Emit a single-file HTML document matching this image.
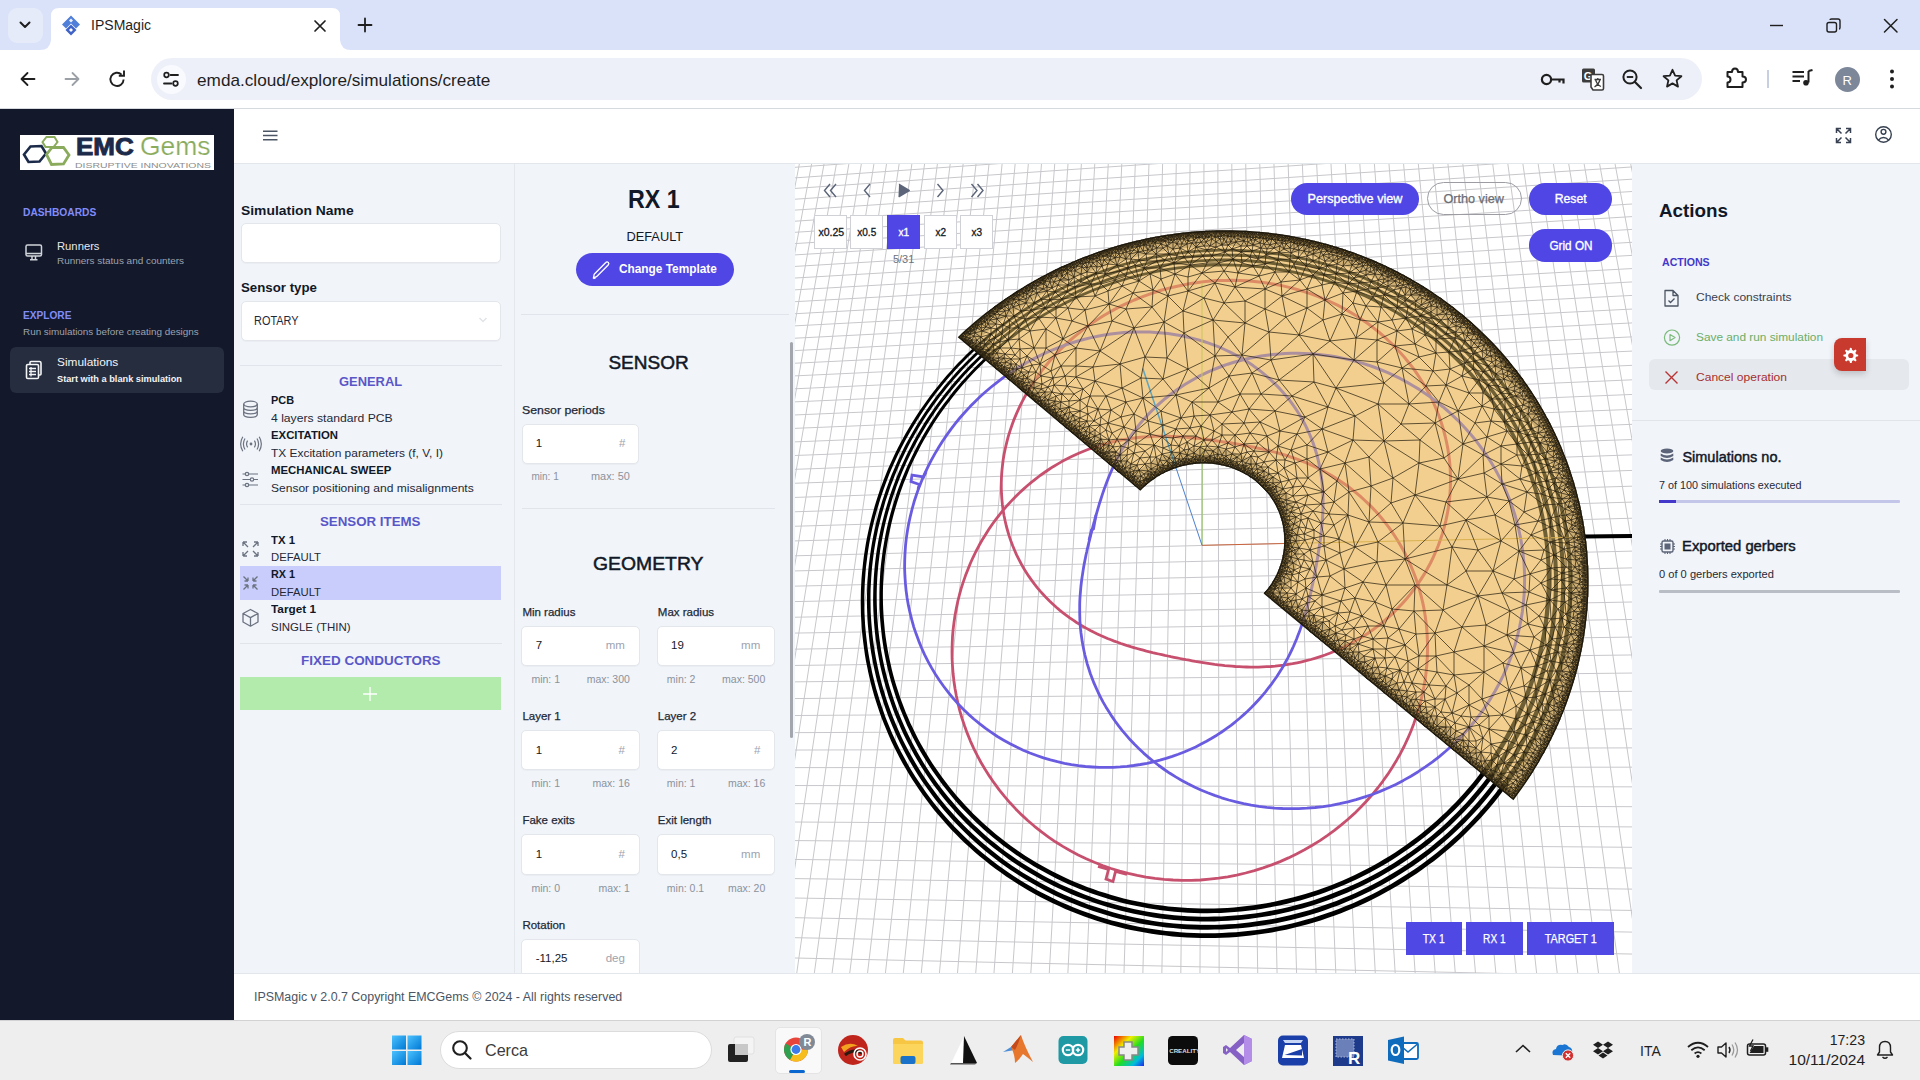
<!DOCTYPE html><html><head><meta charset="utf-8"><style>html,body{margin:0;padding:0;width:1920px;height:1080px;overflow:hidden;background:#fff;}body{position:relative;font-family:"Liberation Sans",sans-serif;}.t{position:absolute;white-space:nowrap;}.r{position:absolute;}</style></head><body><div class="r" style="left:0px;top:0px;width:1920px;height:50px;background:#d9e2f9;"></div><div class="r" style="left:8px;top:8px;width:35px;height:35px;background:#e6ebfa;border-radius:9px;"></div><svg class="r" style="left:15px;top:15px;" width="20" height="20" viewBox="0 0 20 20"><path d="M5.5 7.5 L10 12 L14.5 7.5" fill="none" stroke="#1f1f1f" stroke-width="2" stroke-linecap="round" stroke-linejoin="round"/></svg><svg class="r" style="left:40px;top:7px;" width="312" height="44" viewBox="0 0 312 44"><path d="M0 43 Q10 43 11 33 L11 9 Q11 1 19 1 L292 1 Q300 1 300 9 L300 33 Q301 43 311 43 L311 44 L0 44 Z" fill="#ffffff"/></svg><svg class="r" style="left:60px;top:15px;" width="22" height="21" viewBox="0 0 22 21"><path d="M11 0.5 L20 9.5 L16 13.5 L11 8.5 L6 13.5 L2 9.5 Z" fill="#4f7fd9"/><path d="M11 9.5 L16.5 15 L11 20.5 L5.5 15 Z" fill="#3f63c6"/><path d="M11 13 L13 15 L11 17 L9 15 Z" fill="#fff"/><path d="M11 3.5 L13 5.5 L11 7.5 L9 5.5Z" fill="#fff" opacity="0.9"/></svg><div class="t" style="left:91.1px;top:18.3px;font-size:14px;line-height:14px;color:#1f1f1f;">IPSMagic</div><svg class="r" style="left:310px;top:16px;" width="20" height="20" viewBox="0 0 20 20"><path d="M5 5 L15 15 M15 5 L5 15" stroke="#1f1f1f" stroke-width="1.7" stroke-linecap="round"/></svg><svg class="r" style="left:355px;top:15px;" width="20" height="20" viewBox="0 0 20 20"><path d="M10 3.5 V16.5 M3.5 10 H16.5" stroke="#1f1f1f" stroke-width="1.8" stroke-linecap="round"/></svg><svg class="r" style="left:1766px;top:15px;" width="22" height="22" viewBox="0 0 22 22"><path d="M4 10.5 H17" stroke="#1f1f1f" stroke-width="1.4"/></svg><svg class="r" style="left:1822px;top:14px;" width="24" height="24" viewBox="0 0 24 24"><rect x="5" y="8.5" width="9.5" height="9.5" rx="2" fill="none" stroke="#1f1f1f" stroke-width="1.4"/><path d="M8 6 Q8 5 9.5 5 H16 Q18 5 18 7 V13.5 Q18 15 17 15" fill="none" stroke="#1f1f1f" stroke-width="1.4"/></svg><svg class="r" style="left:1880px;top:15px;" width="22" height="22" viewBox="0 0 22 22"><path d="M4.5 4.5 L17 17 M17 4.5 L4.5 17" stroke="#1f1f1f" stroke-width="1.5" stroke-linecap="round"/></svg><div class="r" style="left:0px;top:50px;width:1920px;height:58px;background:#ffffff;"></div><div class="r" style="left:0px;top:108px;width:1920px;height:1px;background:#d6d9de;"></div><svg class="r" style="left:18px;top:69px;" width="20" height="20" viewBox="0 0 20 20"><path d="M16.5 10 H4 M9.5 4 L3.5 10 L9.5 16" fill="none" stroke="#1f1f1f" stroke-width="1.8" stroke-linecap="round" stroke-linejoin="round"/></svg><svg class="r" style="left:62px;top:69px;" width="20" height="20" viewBox="0 0 20 20"><path d="M3.5 10 H16 M10.5 4 L16.5 10 L10.5 16" fill="none" stroke="#9aa0a6" stroke-width="1.8" stroke-linecap="round" stroke-linejoin="round"/></svg><svg class="r" style="left:107px;top:69px;" width="21" height="21" viewBox="0 0 21 21"><path d="M16.6 10.5 A6.6 6.6 0 1 1 14.6 5.6" fill="none" stroke="#1f1f1f" stroke-width="1.9"/><path d="M11.8 6.8 H17 V1.6" fill="none" stroke="#1f1f1f" stroke-width="1.9"/></svg><div class="r" style="left:151px;top:58px;width:1551px;height:41.5px;background:#eef0f9;border-radius:21px;"></div><div class="r" style="left:157px;top:65px;width:29px;height:29px;border-radius:50%;background:#f9fafe;"></div><svg class="r" style="left:160px;top:68px;" width="23" height="23" viewBox="0 0 23 23"><circle cx="6.5" cy="7" r="2.3" fill="none" stroke="#1f1f1f" stroke-width="1.7"/><path d="M10.5 7 H18" stroke="#1f1f1f" stroke-width="1.8" stroke-linecap="round"/><circle cx="15.5" cy="15.5" r="2.3" fill="none" stroke="#1f1f1f" stroke-width="1.7"/><path d="M4 15.5 H11.5" stroke="#1f1f1f" stroke-width="1.8" stroke-linecap="round"/></svg><div class="t" style="left:196.7px;top:71.6px;font-size:17px;line-height:17px;color:#1f1f1f;transform:scaleX(1.0110);transform-origin:left;">emda.cloud/explore/simulations/create</div><svg class="r" style="left:1539px;top:68px;" width="28" height="22" viewBox="0 0 28 22"><circle cx="7.5" cy="11.5" r="4.6" fill="none" stroke="#1f1f1f" stroke-width="2.2"/><path d="M12 11.5 H24.5 V15.5 M20.5 11.5 V14.5" fill="none" stroke="#1f1f1f" stroke-width="2.2"/></svg><svg class="r" style="left:1580px;top:66px;" width="26" height="26" viewBox="0 0 26 26"><rect x="2" y="2.5" width="13" height="14" rx="1.5" fill="#3c3c3c"/><text x="3.8" y="14" font-family="Liberation Sans" font-weight="bold" font-size="11" fill="#fff">G</text><path d="M11 8.5 H22 Q23.5 8.5 23.5 10 V22.5 Q23.5 24 22 24 H13 L11 21 Z" fill="#fff" stroke="#3c3c3c" stroke-width="1.6"/><path d="M14.5 13.5 H21 M17.8 12 V13.5 M15.5 13.5 Q17 19 21 20.5 M20 13.5 Q19 18 14.5 21" fill="none" stroke="#3c3c3c" stroke-width="1.3"/></svg><svg class="r" style="left:1620px;top:67px;" width="26" height="26" viewBox="0 0 26 26"><circle cx="10" cy="10" r="6.6" fill="none" stroke="#1f1f1f" stroke-width="2"/><path d="M6.8 10 H13.2" stroke="#1f1f1f" stroke-width="1.9"/><path d="M15 15 L21 21" stroke="#1f1f1f" stroke-width="2.2" stroke-linecap="round"/></svg><svg class="r" style="left:1661px;top:67px;" width="24" height="24" viewBox="0 0 24 24"><path d="M11.5 2.8 L14.1 8.6 L20.4 9.2 L15.6 13.4 L17 19.6 L11.5 16.4 L6 19.6 L7.4 13.4 L2.6 9.2 L8.9 8.6 Z" fill="none" stroke="#1f1f1f" stroke-width="1.8" stroke-linejoin="round"/></svg><svg class="r" style="left:1723px;top:66px;" width="27" height="24" viewBox="0 0 27 24"><path d="M4.5 6 H9 Q9 2.5 12 2.5 Q15 2.5 15 6 H19.5 V10.5 Q23 10.5 23 13.5 Q23 16.5 19.5 16.5 V21 H4.5 V16.5 Q7.5 16.5 7.5 13.5 Q7.5 10.5 4.5 10.5 Z" fill="none" stroke="#1f1f1f" stroke-width="2" stroke-linejoin="round"/></svg><div class="r" style="left:1767px;top:70px;width:2px;height:18px;background:#c7d0e0;"></div><svg class="r" style="left:1790px;top:67px;" width="26" height="22" viewBox="0 0 26 22"><path d="M2.5 5 H14 M2.5 9.5 H14 M2.5 14 H10" stroke="#1f1f1f" stroke-width="2"/><path d="M18.5 4 V15.5" stroke="#1f1f1f" stroke-width="2"/><circle cx="16" cy="15.8" r="2.8" fill="#1f1f1f"/><path d="M18.5 4 L22.5 3" stroke="#1f1f1f" stroke-width="2"/></svg><div class="r" style="left:1835px;top:67px;width:25px;height:25px;border-radius:50%;background:#7c8799;"></div><div class="t" style="left:1842.6px;top:74.0px;font-size:13px;line-height:13px;color:#ffffff;">R</div><svg class="r" style="left:1882px;top:67px;" width="20" height="24" viewBox="0 0 20 24"><circle cx="10" cy="4.5" r="2" fill="#1f1f1f"/><circle cx="10" cy="12" r="2" fill="#1f1f1f"/><circle cx="10" cy="19.5" r="2" fill="#1f1f1f"/></svg><div class="r" style="left:0px;top:109px;width:234px;height:911px;background:#13182a;"></div><div class="r" style="left:20px;top:134.5px;width:194px;height:35.5px;background:#ffffff;"></div><svg class="r" style="left:21px;top:135px;" width="54" height="34" viewBox="0 0 54 34"><path d="M3 19.5 L9.5 11.5 L20.5 11 L25 18.5 L18.5 26.5 L7.5 27 Z" fill="none" stroke="#1c2a4a" stroke-width="2.6"/><path d="M21.5 7 L25.5 2 L33.5 2 L36.5 7 L32.5 12 L24.5 12 Z" fill="none" stroke="#8aaa5c" stroke-width="2"/><path d="M25.5 19.5 L31 12.5 L42.5 12.5 L48 20 L42.5 29 L30.5 29.5 Z" fill="none" stroke="#8aaa5c" stroke-width="2.8"/></svg><div class="t" style="left:75.5px;top:135.2px;font-size:24px;line-height:24px;color:#1c2a4a;font-weight:bold;transform:scaleX(1.0819);transform-origin:left;-webkit-text-stroke:0.9px #1c2a4a;">EMC</div><div class="t" style="left:139.9px;top:134.3px;font-size:25px;line-height:25px;color:#8aab5c;transform:scaleX(1.0574);transform-origin:left;-webkit-text-stroke:0.2px #ffffff;">Gems</div><div class="t" style="left:75.0px;top:161.7px;font-size:7px;line-height:7px;color:#8c8c8c;transform:scaleX(1.4922);transform-origin:left;">DISRUPTIVE INNOVATIONS</div><div class="t" style="left:23.3px;top:207.0px;font-size:10.5px;line-height:10.5px;color:#818cf8;font-weight:bold;transform:scaleX(0.9740);transform-origin:left;">DASHBOARDS</div><svg class="r" style="left:24px;top:243px;" width="20" height="19" viewBox="0 0 20 19"><rect x="2" y="2" width="15.5" height="11" rx="1.5" fill="none" stroke="#cfd3da" stroke-width="1.5"/><path d="M2 10.5 H17.5 M8 13 V16 M11.5 13 V16 M6 16.8 H13.5" stroke="#cfd3da" stroke-width="1.5"/></svg><div class="t" style="left:56.9px;top:240.7px;font-size:11px;line-height:11px;color:#e5e7eb;transform:scaleX(1.0221);transform-origin:left;">Runners</div><div class="t" style="left:56.9px;top:256.3px;font-size:9.5px;line-height:9.5px;color:#9ca3af;transform:scaleX(1.0464);transform-origin:left;">Runners status and counters</div><div class="t" style="left:23.3px;top:310.4px;font-size:10.5px;line-height:10.5px;color:#818cf8;font-weight:bold;transform:scaleX(0.9645);transform-origin:left;">EXPLORE</div><div class="t" style="left:23.3px;top:327.4px;font-size:9.5px;line-height:9.5px;color:#9ca3af;transform:scaleX(1.0397);transform-origin:left;">Run simulations before creating designs</div><div class="r" style="left:10.4px;top:346.8px;width:213.5px;height:46.5px;background:#262d3e;border-radius:6px;"></div><svg class="r" style="left:24px;top:359px;" width="20" height="22" viewBox="0 0 20 22"><path d="M6 5.5 V3.5 Q6 2.5 7 2.5 H15.5 Q17 2.5 17 4 V15 Q17 16 16 16 H14.5" fill="none" stroke="#f3f4f6" stroke-width="1.6"/><rect x="2.5" y="5.5" width="12" height="14" rx="1.3" fill="none" stroke="#f3f4f6" stroke-width="1.6"/><path d="M5 9.5 H12 M5 12.5 H12 M5 15.5 H12 M7 8 V17.5" stroke="#f3f4f6" stroke-width="1.3"/></svg><div class="t" style="left:56.9px;top:357.4px;font-size:11px;line-height:11px;color:#f3f4f6;transform:scaleX(1.0781);transform-origin:left;">Simulations</div><div class="t" style="left:56.9px;top:374.0px;font-size:9.5px;line-height:9.5px;color:#f3f4f6;font-weight:bold;transform:scaleX(0.9697);transform-origin:left;">Start with a blank simulation</div><div class="r" style="left:234px;top:109px;width:1686px;height:54px;background:#ffffff;"></div><div class="r" style="left:234px;top:163px;width:1686px;height:1px;background:#e3e6ea;"></div><svg class="r" style="left:260px;top:127px;" width="20" height="16" viewBox="0 0 20 16"><path d="M3 4.3 H17.5 M3 8.6 H17.5 M3 12.8 H17.5" stroke="#4b5563" stroke-width="1.5"/></svg><svg class="r" style="left:1833px;top:125px;" width="21" height="21" viewBox="0 0 21 21"><path d="M3.5 8 V3.5 H8 M3.5 3.5 L8.5 8.5 M17.5 8 V3.5 H13 M17.5 3.5 L12.5 8.5 M3.5 13 V17.5 H8 M3.5 17.5 L8.5 12.5 M17.5 13 V17.5 H13 M17.5 17.5 L12.5 12.5" fill="none" stroke="#374151" stroke-width="1.5"/></svg><svg class="r" style="left:1873px;top:124px;" width="21" height="21" viewBox="0 0 21 21"><circle cx="10.5" cy="10.5" r="7.8" fill="none" stroke="#374151" stroke-width="1.4"/><circle cx="10.5" cy="7.8" r="2.4" fill="none" stroke="#374151" stroke-width="1.4"/><path d="M5.2 16.2 Q10.5 11 15.8 16.2" fill="none" stroke="#374151" stroke-width="1.4"/></svg><div class="r" style="left:234px;top:164px;width:280px;height:810px;background:#f1f4f9;"></div><div class="r" style="left:514px;top:164px;width:1px;height:810px;background:#e4e7ec;"></div><div class="t" style="left:241.0px;top:203.7px;font-size:13px;line-height:13px;color:#111827;font-weight:bold;transform:scaleX(1.0676);transform-origin:left;">Simulation Name</div><div class="r" style="left:240.6px;top:222.7px;width:260.3px;height:40.6px;background:#ffffff;border:1px solid #e3e6eb;border-radius:5px;box-sizing:border-box;box-shadow:0 1px 1px rgba(0,0,0,0.03);"></div><div class="t" style="left:241.0px;top:281.4px;font-size:13px;line-height:13px;color:#111827;font-weight:bold;transform:scaleX(1.0213);transform-origin:left;">Sensor type</div><div class="r" style="left:240.6px;top:300.7px;width:260.3px;height:40.1px;background:#ffffff;border:1px solid #e3e6eb;border-radius:5px;box-sizing:border-box;box-shadow:0 1px 1px rgba(0,0,0,0.03);"></div><div class="t" style="left:254.4px;top:314.6px;font-size:12px;line-height:12px;color:#1f2937;transform:scaleX(0.9101);transform-origin:left;">ROTARY</div><svg class="r" style="left:477px;top:315px;" width="12" height="10" viewBox="0 0 12 10"><path d="M2.5 3 L6 6.5 L9.5 3" fill="none" stroke="#e2e4e8" stroke-width="1.5"/></svg><div class="r" style="left:240px;top:364.5px;width:261.5px;height:1px;background:#e1e5eb;"></div><div class="t" style="left:339.9px;top:376.2px;font-size:12.5px;line-height:12.5px;color:#5957c8;font-weight:bold;transform:scaleX(1.0308);transform-origin:center;">GENERAL</div><svg class="r" style="left:241px;top:399px;" width="20" height="21" viewBox="0 0 20 21"><ellipse cx="9.5" cy="5" rx="6.8" ry="2.8" fill="none" stroke="#6b7280" stroke-width="1.3"/><path d="M2.7 5 V15.5 Q2.7 18.3 9.5 18.3 Q16.3 18.3 16.3 15.5 V5 M2.7 8.6 Q2.7 11.4 9.5 11.4 Q16.3 11.4 16.3 8.6 M2.7 12 Q2.7 14.8 9.5 14.8 Q16.3 14.8 16.3 12" fill="none" stroke="#6b7280" stroke-width="1.3"/></svg><div class="t" style="left:270.5px;top:395.3px;font-size:11px;line-height:11px;color:#111827;font-weight:bold;transform:scaleX(0.9903);transform-origin:left;">PCB</div><div class="t" style="left:270.5px;top:412.7px;font-size:11px;line-height:11px;color:#1f2937;transform:scaleX(1.1058);transform-origin:left;">4 layers standard PCB</div><svg class="r" style="left:240px;top:434px;" width="22" height="20" viewBox="0 0 22 20"><circle cx="11" cy="10" r="1.4" fill="#6b7280"/><path d="M7.6 6.6 Q5.5 10 7.6 13.4 M14.4 6.6 Q16.5 10 14.4 13.4 M5 4.5 Q1.8 10 5 15.5 M17 4.5 Q20.2 10 17 15.5 M2.8 2.8 Q-1.5 10 2.8 17.2 M19.2 2.8 Q23.5 10 19.2 17.2" fill="none" stroke="#6b7280" stroke-width="1.2"/></svg><div class="t" style="left:270.5px;top:430.3px;font-size:11px;line-height:11px;color:#111827;font-weight:bold;transform:scaleX(1.0311);transform-origin:left;">EXCITATION</div><div class="t" style="left:270.5px;top:447.7px;font-size:11px;line-height:11px;color:#1f2937;transform:scaleX(1.0849);transform-origin:left;">TX Excitation parameters (f, V, I)</div><svg class="r" style="left:240px;top:470px;" width="21" height="20" viewBox="0 0 21 20"><path d="M2.5 4 H18 M2.5 9.5 H18 M2.5 15 H18" stroke="#6b7280" stroke-width="1.2"/><circle cx="7" cy="4" r="1.7" fill="#f1f4f9" stroke="#6b7280" stroke-width="1.2"/><circle cx="12" cy="9.5" r="1.7" fill="#f1f4f9" stroke="#6b7280" stroke-width="1.2"/><circle cx="7" cy="15" r="1.7" fill="#f1f4f9" stroke="#6b7280" stroke-width="1.2"/></svg><div class="t" style="left:270.5px;top:465.3px;font-size:11px;line-height:11px;color:#111827;font-weight:bold;transform:scaleX(1.0324);transform-origin:left;">MECHANICAL SWEEP</div><div class="t" style="left:270.5px;top:482.7px;font-size:11px;line-height:11px;color:#1f2937;transform:scaleX(1.0940);transform-origin:left;">Sensor positioning and misalignments</div><div class="r" style="left:240px;top:503.5px;width:261.5px;height:1px;background:#e1e5eb;"></div><div class="t" style="left:323.3px;top:515.7px;font-size:12.5px;line-height:12.5px;color:#5957c8;font-weight:bold;transform:scaleX(1.0639);transform-origin:center;">SENSOR ITEMS</div><svg class="r" style="left:240px;top:539px;" width="21" height="20" viewBox="0 0 21 20"><path d="M3 3 L8 8 M3 3 V7 M3 3 H7 M18 3 L13 8 M18 3 V7 M18 3 H14 M3 17 L8 12 M3 17 V13 M3 17 H7 M18 17 L13 12 M18 17 V13 M18 17 H14" fill="none" stroke="#6b7280" stroke-width="1.3"/></svg><div class="t" style="left:270.5px;top:534.7px;font-size:11px;line-height:11px;color:#111827;font-weight:bold;transform:scaleX(1.0331);transform-origin:left;">TX 1</div><div class="t" style="left:270.5px;top:551.9px;font-size:11px;line-height:11px;color:#1f2937;transform:scaleX(1.0268);transform-origin:left;">DEFAULT</div><div class="r" style="left:240.25px;top:566.25px;width:260.5px;height:34px;background:#c8cdfb;"></div><svg class="r" style="left:240px;top:573px;" width="21" height="20" viewBox="0 0 21 20"><path d="M3.5 3.5 L8 8 M8 8 V4.5 M8 8 H4.5 M17.5 3.5 L13 8 M13 8 V4.5 M13 8 H16.5 M3.5 16.5 L8 12 M8 12 V15.5 M8 12 H4.5 M17.5 16.5 L13 12 M13 12 V15.5 M13 12 H16.5" fill="none" stroke="#6b7280" stroke-width="1.3"/></svg><div class="t" style="left:270.5px;top:569.0px;font-size:11px;line-height:11px;color:#111827;font-weight:bold;transform:scaleX(0.9814);transform-origin:left;">RX 1</div><div class="t" style="left:270.5px;top:586.7px;font-size:11px;line-height:11px;color:#1f2937;transform:scaleX(1.0268);transform-origin:left;">DEFAULT</div><svg class="r" style="left:240px;top:607px;" width="21" height="22" viewBox="0 0 21 22"><path d="M10.5 2.5 L18 6.5 V15 L10.5 19.2 L3 15 V6.5 Z M3 6.5 L10.5 10.6 L18 6.5 M10.5 10.6 V19.2" fill="none" stroke="#6b7280" stroke-width="1.3" stroke-linejoin="round"/></svg><div class="t" style="left:270.5px;top:604.4px;font-size:11px;line-height:11px;color:#111827;font-weight:bold;transform:scaleX(1.0720);transform-origin:left;">Target 1</div><div class="t" style="left:270.5px;top:621.5px;font-size:11px;line-height:11px;color:#1f2937;transform:scaleX(1.0406);transform-origin:left;">SINGLE (THIN)</div><div class="r" style="left:240px;top:643px;width:261.5px;height:1px;background:#e1e5eb;"></div><div class="t" style="left:305.7px;top:654.8px;font-size:12.5px;line-height:12.5px;color:#5957c8;font-weight:bold;transform:scaleX(1.0760);transform-origin:center;">FIXED CONDUCTORS</div><div class="r" style="left:240.25px;top:677.3px;width:260.5px;height:32.3px;background:#b3ebac;"></div><svg class="r" style="left:362px;top:686px;" width="16" height="16" viewBox="0 0 16 16"><path d="M8 1 V15 M1 8 H15" stroke="#ffffff" stroke-width="1.3"/></svg><div class="r" style="left:515px;top:164px;width:280px;height:810px;background:#f1f4f9;"></div><div class="t" style="left:625.3px;top:186.3px;font-size:26px;line-height:26px;color:#111827;font-weight:bold;transform:scaleX(0.8944);transform-origin:center;">RX 1</div><div class="t" style="left:625.6px;top:229.6px;font-size:13px;line-height:13px;color:#111827;transform:scaleX(0.9852);transform-origin:center;">DEFAULT</div><div class="r" style="left:576.1px;top:252.8px;width:157.8px;height:32.8px;background:#4f46e5;border-radius:17px;"></div><svg class="r" style="left:590px;top:258px;" width="24" height="24" viewBox="0 0 24 24"><path d="M5 19 L4 20.5 L5.6 19.8 M6.5 18.7 L18.2 7 Q19.5 5.7 18.3 4.4 Q17 3.2 15.8 4.5 L4.2 16.2 L3.4 20.1 L6.5 18.7 Z" fill="none" stroke="#ffffff" stroke-width="1.3" stroke-linejoin="round"/></svg><div class="t" style="left:619.4px;top:262.6px;font-size:12px;line-height:12px;color:#ffffff;font-weight:bold;transform:scaleX(0.9866);transform-origin:left;">Change Template</div><div class="r" style="left:521px;top:313.5px;width:267.6px;height:1px;background:#e1e5eb;"></div><div class="t" style="left:608.4px;top:352.6px;font-size:19px;line-height:19px;color:#111827;-webkit-text-stroke:0.5px #111827;">SENSOR</div><div class="t" style="left:522.0px;top:405.0px;font-size:11.5px;line-height:11.5px;color:#1f2937;transform:scaleX(1.0704);transform-origin:left;-webkit-text-stroke:0.25px #1f2937;">Sensor periods</div><div class="r" style="left:521.5px;top:423.7px;width:117.8px;height:40.5px;background:#ffffff;border:1px solid #e3e6eb;border-radius:5px;box-sizing:border-box;box-shadow:0 1px 1px rgba(0,0,0,0.03);"></div><div class="t" style="left:535.7px;top:438.3px;font-size:11.5px;line-height:11.5px;color:#111827;">1</div><div class="t" style="left:618.9px;top:438.3px;font-size:11.5px;line-height:11.5px;color:#9ca3af;">#</div><div class="t" style="left:531.5px;top:472.3px;font-size:10px;line-height:10px;color:#8b929c;">min: 1</div><div class="t" style="left:591.0px;top:472.3px;font-size:10px;line-height:10px;color:#8b929c;transform:scaleX(1.0907);transform-origin:left;">max: 50</div><div class="r" style="left:521.5px;top:507.5px;width:253.3px;height:1px;background:#e1e5eb;"></div><div class="t" style="left:593.8px;top:554.3px;font-size:19px;line-height:19px;color:#111827;transform:scaleX(1.0195);transform-origin:center;-webkit-text-stroke:0.5px #111827;">GEOMETRY</div><div class="t" style="left:522.4px;top:606.7px;font-size:11.5px;line-height:11.5px;color:#1f2937;-webkit-text-stroke:0.25px #1f2937;">Min radius</div><div class="r" style="left:521.4px;top:625.6px;width:118.5px;height:40.5px;background:#ffffff;border:1px solid #e3e6eb;border-radius:5px;box-sizing:border-box;box-shadow:0 1px 1px rgba(0,0,0,0.03);"></div><div class="t" style="left:535.7px;top:640.3px;font-size:11.5px;line-height:11.5px;color:#111827;">7</div><div class="t" style="left:605.7px;top:640.3px;font-size:11.5px;line-height:11.5px;color:#9ca3af;">mm</div><div class="t" style="left:531.4px;top:674.0px;font-size:10.5px;line-height:10.5px;color:#8b929c;">min: 1</div><div class="t" style="left:586.7px;top:674.0px;font-size:10.5px;line-height:10.5px;color:#8b929c;">max: 300</div><div class="t" style="left:657.8px;top:606.7px;font-size:11.5px;line-height:11.5px;color:#1f2937;-webkit-text-stroke:0.25px #1f2937;">Max radius</div><div class="r" style="left:656.8px;top:625.6px;width:118.5px;height:40.5px;background:#ffffff;border:1px solid #e3e6eb;border-radius:5px;box-sizing:border-box;box-shadow:0 1px 1px rgba(0,0,0,0.03);"></div><div class="t" style="left:671.1px;top:640.3px;font-size:11.5px;line-height:11.5px;color:#111827;">19</div><div class="t" style="left:741.1px;top:640.3px;font-size:11.5px;line-height:11.5px;color:#9ca3af;">mm</div><div class="t" style="left:666.8px;top:674.0px;font-size:10.5px;line-height:10.5px;color:#8b929c;">min: 2</div><div class="t" style="left:722.1px;top:674.0px;font-size:10.5px;line-height:10.5px;color:#8b929c;">max: 500</div><div class="t" style="left:522.4px;top:710.9px;font-size:11.5px;line-height:11.5px;color:#1f2937;-webkit-text-stroke:0.25px #1f2937;">Layer 1</div><div class="r" style="left:521.4px;top:729.8px;width:118.5px;height:40.5px;background:#ffffff;border:1px solid #e3e6eb;border-radius:5px;box-sizing:border-box;box-shadow:0 1px 1px rgba(0,0,0,0.03);"></div><div class="t" style="left:535.7px;top:744.5px;font-size:11.5px;line-height:11.5px;color:#111827;">1</div><div class="t" style="left:618.5px;top:744.5px;font-size:11.5px;line-height:11.5px;color:#9ca3af;">#</div><div class="t" style="left:531.4px;top:778.2px;font-size:10.5px;line-height:10.5px;color:#8b929c;">min: 1</div><div class="t" style="left:592.5px;top:778.2px;font-size:10.5px;line-height:10.5px;color:#8b929c;">max: 16</div><div class="t" style="left:657.8px;top:710.9px;font-size:11.5px;line-height:11.5px;color:#1f2937;-webkit-text-stroke:0.25px #1f2937;">Layer 2</div><div class="r" style="left:656.8px;top:729.8px;width:118.5px;height:40.5px;background:#ffffff;border:1px solid #e3e6eb;border-radius:5px;box-sizing:border-box;box-shadow:0 1px 1px rgba(0,0,0,0.03);"></div><div class="t" style="left:671.1px;top:744.5px;font-size:11.5px;line-height:11.5px;color:#111827;">2</div><div class="t" style="left:753.9px;top:744.5px;font-size:11.5px;line-height:11.5px;color:#9ca3af;">#</div><div class="t" style="left:666.8px;top:778.2px;font-size:10.5px;line-height:10.5px;color:#8b929c;">min: 1</div><div class="t" style="left:727.9px;top:778.2px;font-size:10.5px;line-height:10.5px;color:#8b929c;">max: 16</div><div class="t" style="left:522.4px;top:815.3px;font-size:11.5px;line-height:11.5px;color:#1f2937;-webkit-text-stroke:0.25px #1f2937;">Fake exits</div><div class="r" style="left:521.4px;top:834.2px;width:118.5px;height:40.5px;background:#ffffff;border:1px solid #e3e6eb;border-radius:5px;box-sizing:border-box;box-shadow:0 1px 1px rgba(0,0,0,0.03);"></div><div class="t" style="left:535.7px;top:848.9px;font-size:11.5px;line-height:11.5px;color:#111827;">1</div><div class="t" style="left:618.5px;top:848.9px;font-size:11.5px;line-height:11.5px;color:#9ca3af;">#</div><div class="t" style="left:531.4px;top:882.6px;font-size:10.5px;line-height:10.5px;color:#8b929c;">min: 0</div><div class="t" style="left:598.4px;top:882.6px;font-size:10.5px;line-height:10.5px;color:#8b929c;">max: 1</div><div class="t" style="left:657.8px;top:815.3px;font-size:11.5px;line-height:11.5px;color:#1f2937;-webkit-text-stroke:0.25px #1f2937;">Exit length</div><div class="r" style="left:656.8px;top:834.2px;width:118.5px;height:40.5px;background:#ffffff;border:1px solid #e3e6eb;border-radius:5px;box-sizing:border-box;box-shadow:0 1px 1px rgba(0,0,0,0.03);"></div><div class="t" style="left:671.1px;top:848.9px;font-size:11.5px;line-height:11.5px;color:#111827;">0,5</div><div class="t" style="left:741.1px;top:848.9px;font-size:11.5px;line-height:11.5px;color:#9ca3af;">mm</div><div class="t" style="left:666.8px;top:882.6px;font-size:10.5px;line-height:10.5px;color:#8b929c;">min: 0.1</div><div class="t" style="left:727.9px;top:882.6px;font-size:10.5px;line-height:10.5px;color:#8b929c;">max: 20</div><div class="t" style="left:522.4px;top:919.8px;font-size:11.5px;line-height:11.5px;color:#1f2937;-webkit-text-stroke:0.25px #1f2937;">Rotation</div><div class="r" style="left:521.4px;top:938.7px;width:118.5px;height:40.5px;background:#ffffff;border:1px solid #e3e6eb;border-radius:5px;box-sizing:border-box;box-shadow:0 1px 1px rgba(0,0,0,0.03);"></div><div class="t" style="left:535.7px;top:953.4px;font-size:11.5px;line-height:11.5px;color:#111827;">-11,25</div><div class="t" style="left:605.7px;top:953.4px;font-size:11.5px;line-height:11.5px;color:#9ca3af;">deg</div><div class="t" style="left:531.4px;top:987.1px;font-size:10.5px;line-height:10.5px;color:#8b929c;"></div><div class="t" style="left:629.9px;top:987.1px;font-size:10.5px;line-height:10.5px;color:#8b929c;"></div><div class="r" style="left:790.3px;top:342px;width:3.2px;height:396px;background:#a3a7ad;border-radius:2px;"></div><div class="r" style="left:795px;top:164px;width:837px;height:809px;background:#ffffff;"></div><svg class="r" style="left:795px;top:164px;overflow:hidden;" width="837" height="809" viewBox="0 0 837 809"><path d="M-16.8 -16.3L-191.7 830.3M-4.5 -17.2L-174.8 830.8M7.9 -18.1L-157.9 831.2M20.2 -19L-140.8 831.7M32.7 -19.9L-123.7 832.2M45.1 -20.8L-106.5 832.6M57.6 -21.7L-89.3 833.1M70.1 -22.7L-72 833.5M82.7 -23.6L-54.6 834M95.3 -24.5L-37.1 834.5M107.9 -25.5L-19.6 834.9M120.6 -26.4L-2 835.4M133.3 -27.3L15.7 835.9M146.1 -28.3L33.5 836.4M158.8 -29.2L51.3 836.8M171.7 -30.1L69.2 837.3M184.5 -31.1L87.2 837.8M197.4 -32L105.2 838.3M210.4 -33L123.3 838.8M223.3 -33.9L141.6 839.3M236.4 -34.9L159.8 839.7M249.4 -35.9L178.2 840.2M262.5 -36.8L196.6 840.7M275.6 -37.8L215.2 841.2M288.8 -38.8L233.8 841.7M302 -39.7L252.4 842.2M315.3 -40.7L271.2 842.7M328.6 -41.7L290 843.2M341.9 -42.7L308.9 843.7M355.3 -43.6L327.9 844.2M368.7 -44.6L347 844.7M382.1 -45.6L366.2 845.3M395.6 -46.6L385.4 845.8M409.2 -47.6L404.8 846.3M422.8 -48.6L424.2 846.8M436.4 -49.6L443.7 847.3M450 -50.6L463.3 847.9M463.7 -51.6L482.9 848.4M477.5 -52.6L502.7 848.9M491.3 -53.7L522.5 849.4M505.1 -54.7L542.5 850M519 -55.7L562.5 850.5M532.9 -56.7L582.6 851M546.8 -57.7L602.8 851.6M560.8 -58.8L623.1 852.1M574.9 -59.8L643.5 852.7M589 -60.8L663.9 853.2M603.1 -61.9L684.5 853.8M617.3 -62.9L705.2 854.3M631.5 -64L725.9 854.9M645.8 -65L746.7 855.4M660.1 -66.1L767.7 856M674.4 -67.1L788.7 856.6M688.8 -68.2L809.8 857.1M703.3 -69.3L831.1 857.7M717.7 -70.3L852.4 858.3M732.3 -71.4L873.8 858.8M746.9 -72.5L895.3 859.4M761.5 -73.5L916.9 860M776.2 -74.6L938.6 860.6M790.9 -75.7L960.5 861.2M805.6 -76.8L982.4 861.7M820.5 -77.9L1004.4 862.3M835.3 -79L1026.5 862.9M850.2 -80.1L1048.7 863.5M-16.8 -16.3L850.2 -80.1M-19 -5.8L852.6 -68.9M-21.1 4.8L855 -57.5M-23.3 15.5L857.4 -46.1M-25.6 26.2L859.8 -34.5M-27.8 37.1L862.3 -22.8M-30.1 48.1L864.8 -11M-32.4 59.3L867.3 1M-34.7 70.5L869.8 13.1M-37.1 81.9L872.4 25.3M-39.4 93.3L875 37.7M-41.8 104.9L877.6 50.2M-44.3 116.6L880.3 62.9M-46.7 128.5L883 75.7M-49.2 140.4L885.7 88.7M-51.7 152.5L888.5 101.8M-54.2 164.7L891.3 115.1M-56.7 177.1L894.1 128.5M-59.3 189.5L897 142.1M-61.9 202.2L899.9 155.9M-64.6 214.9L902.8 169.8M-67.2 227.8L905.8 184M-69.9 240.9L908.8 198.2M-72.7 254L911.8 212.7M-75.4 267.4L914.9 227.3M-78.2 280.9L918 242.2M-81 294.5L921.2 257.2M-83.9 308.3L924.4 272.4M-86.7 322.2L927.6 287.8M-89.7 336.3L930.9 303.4M-92.6 350.6L934.2 319.2M-95.6 365L937.6 335.2M-98.6 379.6L941 351.4M-101.7 394.4L944.5 367.8M-104.8 409.4L948 384.5M-107.9 424.5L951.5 401.4M-111 439.8L955.1 418.5M-114.2 455.3L958.8 435.8M-117.5 471L962.4 453.4M-120.8 486.9L966.2 471.2M-124.1 503L970 489.3M-127.5 519.2L973.9 507.6M-130.9 535.7L977.8 526.1M-134.3 552.4L981.7 545M-137.8 569.3L985.7 564.1M-141.3 586.4L989.8 583.5M-144.9 603.7L994 603.1M-148.5 621.3L998.2 623.1M-152.2 639.1L1002.4 643.3M-155.9 657.1L1006.7 663.9M-159.7 675.3L1011.1 684.7M-163.5 693.8L1015.6 705.9M-167.4 712.5L1020.1 727.4M-171.3 731.5L1024.7 749.2M-175.3 750.7L1029.4 771.4M-179.3 770.2L1034.1 793.9M-183.4 790L1038.9 816.7M-187.5 810L1043.8 839.9M-191.7 830.3L1048.7 863.5" stroke="#c8c8cc" stroke-width="1" fill="none"/><path d="M753.1 374.6 753.8 380.4 754.5 386.2 755 392.1 755.3 397.9 755.6 403.8 755.8 409.7 755.9 415.6 755.8 421.6 755.7 427.5 755.4 433.5 755 439.5 754.5 445.4 753.9 451.4 753.1 457.4 752.3 463.4 751.3 469.4 750.2 475.4 749 481.4 747.7 487.3 746.3 493.3 744.7 499.3 743 505.2 741.2 511.1 739.3 517 737.3 522.9 735.2 528.8 732.9 534.6 730.5 540.4 728 546.2 725.4 551.9 722.7 557.6 719.8 563.3 716.9 568.9 713.8 574.4 710.6 580 707.3 585.4 703.9 590.9 700.3 596.2 696.7 601.6 692.9 606.8 689.1 612 685.1 617.1 681 622.2 676.9 627.2 672.6 632.1 668.2 637 663.7 641.8 659.1 646.5 654.4 651.1 649.7 655.6 644.8 660.1 639.8 664.4 634.8 668.7 629.6 672.9 624.4 677 619.1 680.9 613.7 684.8 608.2 688.6 602.7 692.3 597 695.9 591.3 699.4 585.6 702.8 579.7 706.1 573.8 709.2 567.8 712.3 561.8 715.2 555.7 718 549.6 720.7 543.4 723.3 537.1 725.8 530.8 728.2 524.5 730.4 518.1 732.5 511.7 734.5 505.2 736.4 498.7 738.1 492.2 739.7 485.6 741.2 479.1 742.6 472.5 743.8 465.9 744.9 459.2 745.9 452.6 746.8 445.9 747.5 439.3 748.1 432.6 748.6 425.9 748.9 419.3 749.1 412.6 749.2 405.9 749.2 399.3 749 392.7 748.7 386.1 748.3 379.5 747.7 372.9 747 366.3 746.2 359.8 745.3 353.3 744.3 346.9 743.1 340.5 741.8 334.1 740.4 327.7 738.9 321.4 737.2 315.2 735.4 309 733.6 302.8 731.6 296.7 729.5 290.7 727.2 284.7 724.9 278.8 722.4 272.9 719.9 267.1 717.2 261.3 714.5 255.7 711.6 250.1 708.6 244.6 705.6 239.1 702.4 233.7 699.1 228.4 695.8 223.2 692.3 218.1 688.8 213 685.1 208 681.4 203.2 677.6 198.4 673.7 193.7 669.8 189 665.7 184.5 661.6 180.1 657.4 175.7 653.1 171.5 648.8 167.3 644.4 163.2 639.9 159.3 635.4 155.4 630.8 151.7 626.1 148 621.4 144.4 616.6 141 611.8 137.6 606.9 134.3 602 131.2 597 128.1 591.9 125.1 586.9 122.3 581.8 119.5 576.6 116.9 571.4 114.4 566.2 111.9 560.9 109.6 555.6 107.4 550.3 105.2 545 103.2 539.6 101.3 534.2 99.5 528.8 97.8 523.3 96.2 517.9 94.7 512.4 93.3 506.9 92 501.4 90.8 495.9 89.7 490.4 88.7 484.9 87.8 479.3 87 473.8 86.4 468.3 85.8 462.7 85.3 457.2 84.9 451.7 84.6 446.1 84.4 440.6 84.4 435.1 84.4 429.6 84.5 424.1 84.7 418.6 85 413.1 85.3 407.7 85.8 402.3 86.4 396.8 87.1 391.4 87.8 386.1 88.7 380.7 89.6 375.4 90.6 370.1 91.7 364.8 92.9 359.5 94.2 354.3 95.6 349.1 97.1 343.9 98.6 338.8 100.2 333.7 101.9 328.6 103.7 323.6 105.6 318.6 107.5 313.6 109.5 308.7 111.6 303.8 113.8 299 116.1 294.2 118.4 289.4 120.8 284.7 123.3 280 125.8 275.4 128.4 270.8 131.1 266.3 133.9 261.8 136.7 257.3 139.6 252.9 142.5 248.6 145.5 244.3 148.6 240.1 151.8 235.9 155 231.7 158.2 227.6 161.6 223.6 165 219.6 168.4 215.7 171.9 211.9 175.5 208 179.1 204.3 182.8 200.6 186.5 197 190.3 193.4 194.1 189.9 198 186.4 201.9 183 205.9 179.7 209.9 176.4 213.9 173.2 218.1 170 222.2 167 226.4 163.9 230.7 161 235 158.1 239.3 155.3 243.7 152.5 248.1 149.8 252.5 147.2 257 144.6 261.5 142.1 266.1 139.7 270.6 137.3 275.3 135 279.9 132.8 284.6 130.6 289.3 128.5 294.1 126.5 298.8 124.6 303.6 122.7 308.5 120.9 313.3 119.2 318.2 117.5 323.1 115.9 328 114.4 332.9 112.9 337.9 111.6 342.9 110.3 347.9 109 352.9 107.9 357.9 106.8 363 105.8 368.1 104.8 373.1 104 378.2 103.2 383.3 102.5 388.4 101.9 393.6 101.3 398.7 100.8 403.8 100.4 409 100.1 414.1 99.8 419.3 99.6 424.5 99.5 429.6 99.5 434.8 99.6 440 99.7 445.1 99.9 450.3 100.2 455.4 100.5 460.6 101 465.8 101.5 470.9 102.1 476 102.8 481.2 103.5 486.3 104.3 491.4 105.2 496.5 106.2 501.6 107.3 506.7 108.4 511.7 109.7 516.8 111 521.8 112.3 526.8 113.8 531.8 115.3 536.7 116.9 541.7 118.6 546.6 120.4 551.5 122.2 556.4 124.2 561.2 126.2 566 128.2 570.8 130.4 575.6 132.6 580.3 135 585 137.3 589.6 139.8 594.2 142.4 598.8 145 603.4 147.7 607.9 150.5 612.3 153.3 616.8 156.2 621.2 159.2 625.5 162.3 629.8 165.5 634 168.7 638.2 172 642.4 175.4 646.4 178.8 650.5 182.4 654.5 186 658.4 189.6 662.3 193.4 666.1 197.2 669.8 201.1 673.5 205 677.2 209 680.7 213.1 684.2 217.3 687.7 221.5 691 225.8 694.3 230.1 697.6 234.6 700.7 239 703.8 243.6 706.8 248.2 709.7 252.9 712.6 257.6 715.4 262.4 718.1 267.2 720.7 272.1 723.2 277.1 725.7 282.1 728 287.2 730.3 292.3 732.5 297.5 734.6 302.7 736.6 308 738.5 313.3 740.3 318.7 742 324.1 743.7 329.6 745.2 335.1 746.6 340.6 748 346.2 749.2 351.8 750.3 357.5 751.4 363.2 752.3 368.9 753.1 374.6ZM749.1 374.7 748.3 369 747.4 363.4 746.4 357.8 745.3 352.2 744.1 346.6 742.8 341.1 741.3 335.6 739.8 330.2 738.2 324.8 736.5 319.4 734.7 314.1 732.9 308.9 730.9 303.6 728.8 298.5 726.7 293.3 724.4 288.3 722.1 283.3 719.7 278.3 717.2 273.4 714.6 268.5 712 263.7 709.2 259 706.4 254.3 703.5 249.7 700.6 245.1 697.5 240.6 694.4 236.2 691.2 231.8 688 227.5 684.6 223.3 681.2 219.1 677.8 215 674.3 210.9 670.7 206.9 667 203 663.3 199.2 659.5 195.4 655.7 191.7 651.8 188.1 647.9 184.5 643.9 181 639.9 177.6 635.8 174.3 631.6 171 627.4 167.8 623.2 164.7 618.9 161.6 614.6 158.6 610.2 155.7 605.8 152.9 601.3 150.1 596.8 147.5 592.3 144.9 587.7 142.3 583.1 139.9 578.5 137.5 573.8 135.2 569.1 133 564.4 130.9 559.6 128.8 554.8 126.8 550 124.9 545.2 123.1 540.3 121.3 535.4 119.6 530.5 118 525.6 116.5 520.6 115.1 515.6 113.7 510.7 112.4 505.7 111.2 500.6 110.1 495.6 109 490.6 108.1 485.5 107.2 480.4 106.3 475.4 105.6 470.3 104.9 465.2 104.3 460.1 103.8 455 103.4 449.9 103 444.8 102.7 439.6 102.5 434.5 102.4 429.4 102.3 424.3 102.4 419.2 102.5 414.1 102.6 409 102.9 403.9 103.2 398.8 103.6 393.7 104.1 388.6 104.7 383.6 105.3 378.5 106 373.5 106.8 368.5 107.6 363.4 108.5 358.4 109.5 353.4 110.6 348.5 111.7 343.5 113 338.6 114.3 333.7 115.6 328.8 117 323.9 118.6 319.1 120.1 314.2 121.8 309.4 123.5 304.7 125.3 299.9 127.1 295.2 129.1 290.5 131.1 285.8 133.1 281.2 135.3 276.6 137.5 272 139.7 267.5 142.1 263 144.5 258.5 147 254 149.5 249.6 152.1 245.3 154.8 241 157.5 236.7 160.3 232.4 163.2 228.2 166.1 224.1 169.1 220 172.2 215.9 175.3 211.9 178.5 207.9 181.7 203.9 185 200.1 188.4 196.2 191.8 192.4 195.3 188.7 198.8 185 202.4 181.4 206.1 177.8 209.8 174.3 213.6 170.8 217.4 167.4 221.3 164.1 225.2 160.8 229.2 157.6 233.3 154.4 237.4 151.3 241.5 148.2 245.7 145.2 250 142.3 254.3 139.5 258.6 136.7 263 134 267.5 131.3 272 128.7 276.5 126.2 281.1 123.8 285.7 121.4 290.4 119.1 295.1 116.9 299.8 114.7 304.6 112.7 309.5 110.7 314.4 108.7 319.3 106.9 324.2 105.1 329.2 103.5 334.2 101.9 339.3 100.4 344.3 98.9 349.5 97.6 354.6 96.3 359.8 95.1 365 94 370.2 93 375.4 92.1 380.7 91.3 386 90.5 391.3 89.9 396.7 89.3 402 88.9 407.4 88.5 412.8 88.2 418.2 88 423.6 87.9 429.1 87.9 434.5 88 440 88.2 445.4 88.5 450.9 88.9 456.4 89.4 461.8 89.9 467.3 90.6 472.8 91.4 478.3 92.3 483.7 93.3 489.2 94.4 494.6 95.6 500.1 96.8 505.5 98.2 510.9 99.7 516.4 101.3 521.7 103 527.1 104.8 532.5 106.7 537.8 108.7 543.1 110.8 548.4 113 553.6 115.3 558.9 117.8 564.1 120.3 569.2 122.9 574.4 125.6 579.4 128.5 584.5 131.4 589.5 134.4 594.5 137.5 599.4 140.8 604.2 144.1 609.1 147.5 613.8 151.1 618.5 154.7 623.2 158.4 627.8 162.3 632.4 166.2 636.8 170.2 641.2 174.3 645.6 178.5 649.9 182.8 654.1 187.2 658.2 191.7 662.3 196.3 666.3 200.9 670.2 205.7 674 210.5 677.8 215.4 681.4 220.4 685 225.5 688.5 230.6 691.9 235.9 695.2 241.2 698.4 246.6 701.6 252 704.6 257.6 707.5 263.2 710.3 268.8 713.1 274.6 715.7 280.4 718.2 286.2 720.6 292.1 722.9 298.1 725.1 304.1 727.2 310.2 729.1 316.3 731 322.5 732.7 328.7 734.4 335 735.9 341.3 737.3 347.7 738.5 354 739.7 360.4 740.7 366.9 741.6 373.3 742.4 379.8 743.1 386.3 743.6 392.9 744 399.4 744.3 406 744.5 412.5 744.5 419.1 744.4 425.7 744.2 432.3 743.9 438.9 743.4 445.4 742.8 452 742.1 458.6 741.2 465.1 740.3 471.6 739.2 478.2 737.9 484.6 736.6 491.1 735.1 497.5 733.5 504 731.8 510.3 730 516.7 728 523 725.9 529.2 723.7 535.5 721.4 541.6 719 547.7 716.4 553.8 713.7 559.8 710.9 565.8 708 571.7 705 577.5 701.9 583.3 698.7 589 695.3 594.6 691.9 600.2 688.4 605.6 684.7 611.1 681 616.4 677.1 621.6 673.2 626.8 669.2 631.9 665 636.9 660.8 641.8 656.5 646.6 652.1 651.3 647.7 655.9 643.1 660.5 638.5 664.9 633.8 669.2 629 673.5 624.1 677.6 619.2 681.6 614.2 685.5 609.1 689.3 604 693.1 598.8 696.7 593.6 700.1 588.3 703.5 582.9 706.8 577.5 710 572.1 713 566.6 715.9 561 718.8 555.4 721.5 549.8 724.1 544.1 726.5 538.5 728.9 532.7 731.1 527 733.3 521.2 735.3 515.4 737.2 509.6 738.9 503.7 740.6 497.9 742.1 492 743.6 486.1 744.9 480.2 746.1 474.3 747.2 468.4 748.1 462.4 749 456.5 749.7 450.6 750.3 444.7 750.8 438.8 751.2 432.9 751.5 427 751.7 421.1 751.7 415.2 751.7 409.4 751.5 403.6 751.3 397.8 750.9 392 750.4 386.2 749.8 380.5 749.1 374.7ZM760.2 374.5 760.9 380.4 761.5 386.3 762.1 392.2 762.5 398.2 762.8 404.2 763 410.3 763.1 416.3 763 422.4 762.9 428.4 762.6 434.5 762.2 440.6 761.7 446.7 761.1 452.9 760.4 459 759.5 465.1 758.6 471.2 757.5 477.3 756.3 483.4 754.9 489.6 753.5 495.7 751.9 501.7 750.2 507.8 748.4 513.9 746.5 519.9 744.4 525.9 742.2 531.9 739.9 537.9 737.5 543.8 735 549.7 732.3 555.6 729.5 561.4 726.6 567.2 723.6 572.9 720.5 578.6 717.2 584.3 713.8 589.9 710.4 595.4 706.8 600.9 703.1 606.4 699.2 611.7 695.3 617.1 691.3 622.3 687.1 627.5 682.8 632.6 678.5 637.7 674 642.6 669.4 647.5 664.7 652.3 660 657 655.1 661.7 650.1 666.2 645 670.7 639.9 675.1 634.6 679.4 629.3 683.6 623.8 687.6 618.3 691.6 612.7 695.5 607.1 699.3 601.3 703 595.5 706.5 589.6 710 583.6 713.4 577.6 716.6 571.5 719.7 565.3 722.7 559.1 725.6 552.8 728.4 546.4 731 540.1 733.6 533.6 736 527.1 738.3 520.6 740.4 514 742.4 507.4 744.4 500.8 746.1 494.1 747.8 487.4 749.3 480.7 750.7 473.9 752 467.2 753.1 460.4 754.1 453.6 755 446.8 755.7 440 756.3 433.2 756.8 426.3 757.1 419.5 757.4 412.7 757.4 405.9 757.4 399.1 757.2 392.3 756.9 385.6 756.5 378.8 755.9 372.1 755.2 365.4 754.4 358.8 753.4 352.1 752.3 345.5 751.1 339 749.8 332.4 748.3 326 746.8 319.5 745.1 313.1 743.3 306.8 741.3 300.5 739.3 294.3 737.1 288.1 734.8 282 732.4 275.9 729.9 269.9 727.3 264 724.5 258.1 721.7 252.4 718.8 246.6 715.7 241 712.6 235.4 709.3 230 706 224.6 702.5 219.2 699 214 695.4 208.8 691.6 203.8 687.8 198.8 683.9 193.9 680 189.1 675.9 184.4 671.7 179.8 667.5 175.2 663.2 170.8 658.9 166.5 654.4 162.2 649.9 158.1 645.3 154.1 640.7 150.1 636 146.3 631.2 142.6 626.3 138.9 621.5 135.4 616.5 132 611.5 128.7 606.5 125.5 601.4 122.4 596.2 119.3 591.1 116.5 585.8 113.7 580.6 111 575.3 108.4 569.9 105.9 564.5 103.6 559.1 101.3 553.7 99.1 548.2 97.1 542.7 95.2 537.2 93.3 531.7 91.6 526.1 90 520.6 88.5 515 87.1 509.4 85.7 503.8 84.5 498.1 83.5 492.5 82.5 486.9 81.6 481.2 80.8 475.6 80.1 469.9 79.5 464.3 79 458.6 78.7 453 78.4 447.3 78.2 441.7 78.1 436.1 78.2 430.5 78.3 424.9 78.5 419.3 78.8 413.7 79.2 408.2 79.7 402.6 80.3 397.1 81 391.6 81.8 386.1 82.7 380.6 83.6 375.2 84.7 369.8 85.8 364.4 87.1 359.1 88.4 353.7 89.8 348.5 91.3 343.2 92.9 338 94.5 332.8 96.3 327.6 98.1 322.5 100 317.4 102 312.3 104.1 307.3 106.2 302.4 108.5 297.4 110.8 292.5 113.1 287.7 115.6 282.9 118.1 278.1 120.7 273.4 123.4 268.8 126.1 264.2 128.9 259.6 131.8 255.1 134.8 250.6 137.8 246.2 140.9 241.8 144 237.5 147.2 233.2 150.5 229 153.8 224.9 157.2 220.8 160.7 216.7 164.2 212.8 167.8 208.8 171.4 205 175.1 201.1 178.8 197.4 182.6 193.7 186.4 190.1 190.3 186.5 194.3 183 198.3 179.5 202.3 176.1 206.4 172.8 210.6 169.5 214.8 166.3 219 163.2 223.3 160.1 227.6 157.1 232 154.2 236.4 151.3 240.8 148.5 245.3 145.7 249.8 143.1 254.4 140.5 259 137.9 263.6 135.5 268.3 133 273 130.7 277.7 128.5 282.5 126.3 287.3 124.1 292.1 122.1 296.9 120.1 301.8 118.2 306.7 116.4 311.7 114.6 316.6 112.9 321.6 111.3 326.6 109.7 331.7 108.3 336.7 106.9 341.8 105.5 346.9 104.3 352 103.1 357.1 102 362.2 101 367.4 100 372.5 99.2 377.7 98.4 382.9 97.6 388.1 97 393.3 96.4 398.6 95.9 403.8 95.5 409 95.2 414.3 94.9 419.5 94.7 424.8 94.6 430 94.6 435.3 94.6 440.5 94.8 445.8 95 451 95.2 456.3 95.6 461.5 96 466.8 96.6 472 97.2 477.2 97.8 482.5 98.6 487.7 99.4 492.9 100.4 498.1 101.4 503.2 102.4 508.4 103.6 513.6 104.8 518.7 106.1 523.8 107.5 528.9 109 534 110.6 539 112.2 544.1 113.9 549.1 115.7 554.1 117.6 559 119.5 564 121.6 568.9 123.7 573.7 125.9 578.6 128.1 583.4 130.5 588.2 132.9 592.9 135.4 597.6 138 602.3 140.7 606.9 143.4 611.5 146.2 616.1 149.1 620.6 152.1 625.1 155.1 629.5 158.3 633.9 161.5 638.2 164.8 642.5 168.1 646.7 171.5 650.9 175.1 655 178.6 659.1 182.3 663.1 186 667 189.8 670.9 193.7 674.8 197.6 678.5 201.7 682.2 205.7 685.9 209.9 689.5 214.1 693 218.4 696.4 222.8 699.8 227.2 703.1 231.7 706.3 236.3 709.5 240.9 712.6 245.6 715.6 250.4 718.5 255.2 721.3 260 724.1 265 726.8 270 729.4 275 731.9 280.1 734.3 285.3 736.6 290.5 738.9 295.8 741 301.1 743.1 306.5 745.1 311.9 746.9 317.4 748.7 322.9 750.4 328.5 752 334.1 753.4 339.8 754.8 345.4 756.1 351.2 757.3 356.9 758.3 362.8 759.3 368.6 760.2 374.5ZM756.1 374.6 755.3 368.8 754.4 363 753.3 357.2 752.2 351.5 750.9 345.9 749.6 340.2 748.1 334.7 746.5 329.1 744.9 323.6 743.1 318.1 741.3 312.7 739.4 307.4 737.3 302 735.2 296.8 733 291.6 730.7 286.4 728.3 281.3 725.9 276.2 723.3 271.2 720.7 266.3 717.9 261.4 715.1 256.6 712.2 251.8 709.3 247.1 706.2 242.4 703.1 237.9 699.9 233.3 696.7 228.9 693.3 224.5 689.9 220.2 686.5 215.9 682.9 211.7 679.3 207.6 675.7 203.6 671.9 199.6 668.2 195.7 664.3 191.9 660.4 188.1 656.4 184.4 652.4 180.8 648.3 177.2 644.2 173.7 640 170.3 635.8 167 631.5 163.8 627.2 160.6 622.8 157.5 618.4 154.5 613.9 151.5 609.4 148.6 604.9 145.9 600.3 143.1 595.7 140.5 591 137.9 586.3 135.4 581.6 133 576.9 130.7 572.1 128.5 567.2 126.3 562.4 124.2 557.5 122.2 552.6 120.2 547.7 118.4 542.7 116.6 537.7 114.9 532.7 113.3 527.7 111.7 522.6 110.3 517.6 108.9 512.5 107.6 507.4 106.4 502.3 105.2 497.2 104.1 492 103.2 486.9 102.2 481.7 101.4 476.6 100.7 471.4 100 466.2 99.4 461 98.9 455.8 98.4 450.6 98.1 445.4 97.8 440.2 97.6 435 97.5 429.8 97.4 424.6 97.4 419.4 97.5 414.2 97.7 409 98 403.8 98.3 398.6 98.7 393.5 99.2 388.3 99.8 383.2 100.4 378 101.1 372.9 101.9 367.8 102.8 362.7 103.7 357.6 104.7 352.5 105.8 347.4 107 342.4 108.2 337.4 109.6 332.4 110.9 327.4 112.4 322.5 113.9 317.5 115.5 312.6 117.2 307.7 119 302.9 120.8 298 122.7 293.2 124.6 288.4 126.7 283.7 128.8 279 130.9 274.3 133.2 269.6 135.5 265 137.9 260.4 140.3 255.9 142.8 251.4 145.4 246.9 148.1 242.4 150.8 238 153.6 233.7 156.4 229.4 159.3 225.1 162.3 220.8 165.3 216.6 168.5 212.5 171.6 208.4 174.9 204.3 178.2 200.3 181.5 196.4 184.9 192.5 188.4 188.6 192 184.8 195.6 181.1 199.2 177.4 202.9 173.7 206.7 170.1 210.6 166.6 214.4 163.1 218.4 159.7 222.4 156.4 226.5 153.1 230.6 149.8 234.7 146.6 239 143.5 243.2 140.5 247.6 137.5 251.9 134.6 256.4 131.8 260.8 129 265.4 126.3 269.9 123.6 274.6 121.1 279.2 118.6 283.9 116.1 288.7 113.8 293.5 111.5 298.3 109.3 303.2 107.2 308.1 105.2 313.1 103.2 318.1 101.3 323.1 99.5 328.2 97.8 333.3 96.2 338.4 94.6 343.6 93.1 348.8 91.7 354.1 90.4 359.3 89.2 364.6 88.1 369.9 87.1 375.3 86.1 380.7 85.2 386.1 84.5 391.5 83.8 396.9 83.2 402.4 82.7 407.9 82.3 413.4 82 418.9 81.8 424.4 81.7 430 81.7 435.5 81.8 441.1 82 446.6 82.2 452.2 82.6 457.8 83.1 463.4 83.7 469 84.4 474.6 85.2 480.1 86 485.7 87 491.3 88.1 496.9 89.3 502.4 90.6 508 92 513.5 93.5 519 95.1 524.5 96.9 530 98.7 535.5 100.6 540.9 102.6 546.4 104.8 551.8 107 557.1 109.4 562.5 111.8 567.8 114.4 573.1 117 578.3 119.8 583.5 122.7 588.7 125.6 593.8 128.7 598.9 131.9 603.9 135.2 608.9 138.6 613.8 142.1 618.7 145.7 623.5 149.4 628.3 153.2 633 157.1 637.6 161.1 642.2 165.1 646.7 169.3 651.2 173.6 655.6 178 659.9 182.5 664.1 187 668.3 191.7 672.4 196.4 676.4 201.3 680.3 206.2 684.2 211.2 687.9 216.3 691.6 221.5 695.2 226.8 698.7 232.1 702 237.5 705.3 243 708.6 248.6 711.7 254.3 714.7 260 717.6 265.8 720.4 271.6 723 277.5 725.6 283.5 728.1 289.6 730.5 295.7 732.7 301.8 734.9 308 736.9 314.3 738.8 320.6 740.6 327 742.2 333.4 743.8 339.8 745.2 346.3 746.5 352.8 747.7 359.4 748.8 366 749.7 372.6 750.5 379.2 751.2 385.9 751.8 392.5 752.2 399.2 752.5 405.9 752.7 412.6 752.7 419.4 752.6 426.1 752.4 432.8 752.1 439.6 751.6 446.3 751 453 750.3 459.7 749.4 466.4 748.4 473.1 747.3 479.8 746 486.4 744.7 493 743.2 499.6 741.5 506.2 739.8 512.7 737.9 519.2 735.9 525.6 733.7 532 731.5 538.4 729.1 544.7 726.6 550.9 724 557.1 721.3 563.3 718.4 569.4 715.5 575.4 712.4 581.4 709.2 587.3 705.9 593.1 702.5 598.9 698.9 604.5 695.3 610.1 691.6 615.7 687.7 621.1 683.8 626.5 679.8 631.8 675.6 637 671.4 642.1 667.1 647.1 662.7 652 658.2 656.8 653.6 661.5 649 666.1 644.2 670.7 639.4 675.1 634.5 679.4 629.5 683.6 624.5 687.7 619.4 691.7 614.2 695.6 608.9 699.4 603.6 703.1 598.2 706.6 592.8 710.1 587.3 713.4 581.8 716.6 576.2 719.7 570.6 722.7 564.9 725.6 559.2 728.3 553.5 731 547.7 733.5 541.8 735.9 536 738.2 530.1 740.3 524.2 742.4 518.3 744.3 512.3 746.1 506.3 747.8 500.3 749.3 494.3 750.8 488.3 752.1 482.3 753.3 476.2 754.4 470.2 755.4 464.1 756.2 458.1 757 452 757.6 446 758.1 440 758.5 433.9 758.7 427.9 758.9 421.9 758.9 415.9 758.9 409.9 758.7 404 758.4 398.1 758 392.1 757.5 386.3 756.9 380.4 756.1 374.6ZM767.2 374.3 768 380.3 768.7 386.3 769.2 392.4 769.7 398.5 770 404.7 770.2 410.8 770.3 417 770.3 423.2 770.1 429.4 769.9 435.6 769.5 441.8 769 448 768.4 454.3 767.7 460.5 766.8 466.8 765.8 473 764.7 479.3 763.5 485.5 762.2 491.8 760.7 498 759.1 504.2 757.4 510.4 755.6 516.6 753.6 522.8 751.5 528.9 749.3 535 747 541.1 744.5 547.2 741.9 553.2 739.2 559.2 736.4 565.2 733.4 571.1 730.4 577 727.2 582.8 723.9 588.6 720.5 594.3 716.9 600 713.2 605.6 709.5 611.2 705.6 616.7 701.5 622.1 697.4 627.5 693.2 632.8 688.8 638.1 684.4 643.2 679.8 648.3 675.1 653.3 670.4 658.2 665.5 663.1 660.5 667.8 655.4 672.5 650.3 677 645 681.5 639.6 685.9 634.2 690.2 628.6 694.4 623 698.4 617.3 702.4 611.5 706.3 605.6 710.1 599.6 713.7 593.6 717.3 587.5 720.7 581.3 724 575.1 727.2 568.8 730.3 562.4 733.2 556 736.1 549.5 738.8 543 741.4 536.4 743.8 529.8 746.2 523.1 748.4 516.4 750.4 509.6 752.4 502.9 754.2 496 755.9 489.2 757.5 482.3 758.9 475.4 760.2 468.5 761.3 461.6 762.3 454.6 763.2 447.7 764 440.7 764.6 433.7 765.1 426.8 765.4 419.8 765.6 412.8 765.7 405.9 765.7 398.9 765.5 392 765.2 385.1 764.7 378.2 764.1 371.3 763.4 364.5 762.5 357.7 761.6 350.9 760.4 344.2 759.2 337.5 757.8 330.8 756.3 324.2 754.7 317.6 753 311.1 751.1 304.6 749.1 298.2 747 291.8 744.8 285.5 742.4 279.3 740 273.1 737.4 267 734.7 260.9 731.9 254.9 729 249 726 243.2 722.8 237.4 719.6 231.8 716.3 226.2 712.8 220.7 709.3 215.2 705.7 209.9 702 204.6 698.2 199.5 694.3 194.4 690.3 189.4 686.2 184.5 682 179.7 677.8 175 673.5 170.4 669.1 165.9 664.6 161.5 660 157.2 655.4 153 650.7 148.8 646 144.8 641.1 140.9 636.3 137.1 631.3 133.5 626.3 129.9 621.3 126.4 616.2 123 611 119.7 605.8 116.6 600.5 113.5 595.2 110.6 589.9 107.8 584.5 105 579.1 102.4 573.6 99.9 568.1 97.5 562.6 95.2 557.1 93 551.5 91 545.9 89 540.3 87.2 534.6 85.4 528.9 83.8 523.2 82.2 517.5 80.8 511.8 79.5 506.1 78.3 500.4 77.2 494.6 76.2 488.9 75.3 483.1 74.5 477.3 73.9 471.6 73.3 465.8 72.8 460.1 72.4 454.3 72.2 448.6 72 442.8 71.9 437.1 72 431.4 72.1 425.7 72.3 420 72.7 414.3 73.1 408.6 73.6 403 74.3 397.3 75 391.7 75.8 386.2 76.7 380.6 77.7 375.1 78.8 369.6 80 364.1 81.2 358.6 82.6 353.2 84 347.8 85.6 342.5 87.2 337.1 88.9 331.9 90.7 326.6 92.6 321.4 94.5 316.2 96.5 311.1 98.7 306 100.9 300.9 103.1 295.9 105.5 290.9 107.9 286 110.4 281.1 113 276.3 115.7 271.5 118.4 266.8 121.2 262.1 124 257.4 127 252.8 130 248.3 133.1 243.8 136.2 239.3 139.4 235 142.7 230.6 146 226.4 149.4 222.1 152.9 218 156.4 213.9 160 209.8 163.6 205.8 167.3 201.9 171.1 198 174.9 194.2 178.7 190.4 182.6 186.7 186.6 183.1 190.6 179.5 194.7 176 198.8 172.6 203 169.2 207.2 165.9 211.5 162.6 215.8 159.4 220.1 156.3 224.5 153.3 229 150.3 233.5 147.3 238 144.5 242.5 141.7 247.1 139 251.8 136.3 256.5 133.8 261.2 131.3 265.9 128.8 270.7 126.4 275.5 124.1 280.4 121.9 285.2 119.8 290.1 117.7 295.1 115.7 300 113.7 305 111.9 310.1 110.1 315.1 108.3 320.2 106.7 325.3 105.1 330.4 103.6 335.5 102.2 340.7 100.9 345.8 99.6 351 98.4 356.2 97.3 361.5 96.2 366.7 95.2 371.9 94.4 377.2 93.5 382.5 92.8 387.8 92.1 393.1 91.6 398.4 91.1 403.7 90.6 409 90.3 414.4 90 419.7 89.8 425 89.7 430.4 89.7 435.7 89.7 441.1 89.8 446.4 90 451.8 90.3 457.1 90.7 462.5 91.1 467.8 91.7 473.1 92.3 478.4 93 483.7 93.7 489 94.6 494.3 95.5 499.6 96.5 504.9 97.6 510.1 98.8 515.4 100 520.6 101.3 525.8 102.7 531 104.2 536.2 105.8 541.3 107.5 546.4 109.2 551.5 111 556.6 112.9 561.7 114.9 566.7 117 571.7 119.1 576.7 121.3 581.6 123.6 586.5 126 591.4 128.5 596.2 131 601 133.6 605.8 136.3 610.5 139.1 615.2 142 619.8 144.9 624.4 147.9 629 151 633.5 154.2 637.9 157.5 642.4 160.8 646.7 164.2 651 167.7 655.3 171.3 659.5 174.9 663.7 178.6 667.7 182.4 671.8 186.3 675.8 190.2 679.7 194.2 683.5 198.3 687.3 202.5 691 206.7 694.7 211 698.3 215.4 701.8 219.8 705.3 224.3 708.6 228.9 711.9 233.5 715.2 238.2 718.3 243 721.4 247.8 724.4 252.7 727.3 257.7 730.1 262.7 732.9 267.8 735.5 273 738.1 278.2 740.6 283.4 743 288.7 745.3 294.1 747.5 299.5 749.6 305 751.6 310.5 753.6 316.1 755.4 321.7 757.1 327.4 758.7 333.1 760.3 338.9 761.7 344.7 763 350.5 764.2 356.4 765.3 362.3 766.3 368.3 767.2 374.3ZM763.2 374.4 762.3 368.5 761.3 362.6 760.2 356.7 759.1 350.9 757.8 345.1 756.4 339.4 754.9 333.7 753.3 328 751.6 322.4 749.8 316.9 747.9 311.3 745.9 305.9 743.8 300.5 741.6 295.1 739.4 289.8 737 284.5 734.5 279.3 732 274.1 729.4 269.1 726.7 264 723.9 259 721 254.1 718.1 249.3 715 244.5 711.9 239.8 708.7 235.1 705.5 230.5 702.1 226 698.7 221.5 695.3 217.1 691.7 212.8 688.1 208.5 684.4 204.3 680.7 200.2 676.9 196.2 673 192.2 669.1 188.3 665.1 184.5 661 180.7 656.9 177 652.8 173.4 648.6 169.9 644.3 166.4 640 163.1 635.6 159.8 631.2 156.5 626.7 153.4 622.2 150.3 617.7 147.3 613.1 144.4 608.5 141.6 603.8 138.8 599.1 136.1 594.3 133.5 589.5 131 584.7 128.6 579.9 126.2 575 123.9 570.1 121.7 565.1 119.6 560.2 117.5 555.2 115.6 550.1 113.7 545.1 111.9 540 110.2 534.9 108.5 529.8 107 524.7 105.5 519.5 104.1 514.3 102.8 509.1 101.5 503.9 100.4 498.7 99.3 493.5 98.3 488.3 97.4 483 96.5 477.7 95.8 472.5 95.1 467.2 94.5 461.9 93.9 456.6 93.5 451.3 93.1 446.1 92.9 440.8 92.7 435.5 92.5 430.2 92.5 424.9 92.5 419.6 92.6 414.3 92.8 409 93.1 403.8 93.4 398.5 93.8 393.2 94.3 388 94.9 382.7 95.6 377.5 96.3 372.3 97.1 367.1 98 361.9 98.9 356.7 100 351.6 101.1 346.4 102.3 341.3 103.5 336.2 104.9 331.1 106.3 326 107.8 321 109.3 316 111 311 112.7 306 114.4 301.1 116.3 296.1 118.2 291.3 120.2 286.4 122.3 281.6 124.4 276.8 126.6 272 128.9 267.3 131.2 262.6 133.7 257.9 136.1 253.3 138.7 248.7 141.3 244.1 144 239.6 146.8 235.1 149.6 230.7 152.5 226.3 155.5 221.9 158.5 217.6 161.6 213.3 164.7 209.1 168 205 171.3 200.8 174.6 196.7 178 192.7 181.5 188.7 185 184.8 188.6 180.9 192.3 177.1 196 173.3 199.8 169.6 203.6 166 207.5 162.4 211.5 158.8 215.5 155.4 219.6 151.9 223.7 148.6 227.9 145.3 232.1 142 236.4 138.9 240.8 135.8 245.2 132.7 249.6 129.8 254.1 126.8 258.7 124 263.3 121.2 267.9 118.6 272.6 115.9 277.3 113.4 282.1 110.9 287 108.5 291.9 106.2 296.8 103.9 301.7 101.8 306.8 99.7 311.8 97.7 316.9 95.7 322 93.9 327.2 92.1 332.4 90.4 337.6 88.9 342.9 87.3 348.2 85.9 353.5 84.6 358.9 83.3 364.3 82.2 369.7 81.1 375.1 80.1 380.6 79.2 386.1 78.4 391.7 77.7 397.2 77.1 402.8 76.6 408.3 76.2 414 75.9 419.6 75.6 425.2 75.5 430.9 75.5 436.5 75.6 442.2 75.7 447.9 76 453.5 76.4 459.2 76.9 464.9 77.4 470.6 78.1 476.3 78.9 482 79.8 487.7 80.8 493.4 81.9 499.1 83.1 504.8 84.4 510.4 85.8 516.1 87.3 521.7 89 527.3 90.7 532.9 92.5 538.5 94.5 544.1 96.5 549.6 98.7 555.1 101 560.6 103.4 566.1 105.8 571.5 108.4 576.9 111.1 582.2 113.9 587.6 116.9 592.8 119.9 598.1 123 603.3 126.3 608.4 129.6 613.5 133 618.5 136.6 623.5 140.3 628.5 144 633.4 147.9 638.2 151.8 642.9 155.9 647.6 160.1 652.2 164.3 656.8 168.7 661.3 173.2 665.7 177.7 670.1 182.4 674.3 187.1 678.5 192 682.6 196.9 686.6 201.9 690.6 207 694.4 212.2 698.2 217.5 701.9 222.9 705.4 228.3 708.9 233.9 712.3 239.5 715.6 245.2 718.8 250.9 721.8 256.8 724.8 262.7 727.7 268.7 730.4 274.7 733.1 280.8 735.6 287 738.1 293.2 740.4 299.5 742.6 305.8 744.6 312.2 746.6 318.7 748.4 325.2 750.2 331.7 751.8 338.3 753.2 344.9 754.6 351.6 755.8 358.3 756.9 365 757.9 371.8 758.7 378.6 759.4 385.4 760 392.2 760.4 399 760.7 405.9 760.9 412.8 761 419.6 760.9 426.5 760.7 433.4 760.3 440.3 759.9 447.2 759.2 454 758.5 460.9 757.6 467.7 756.6 474.6 755.5 481.4 754.2 488.2 752.8 494.9 751.3 501.7 749.6 508.4 747.8 515 745.9 521.7 743.8 528.3 741.6 534.8 739.3 541.3 736.9 547.8 734.3 554.2 731.7 560.5 728.9 566.8 725.9 573 722.9 579.2 719.8 585.3 716.5 591.3 713.1 597.3 709.6 603.1 706 608.9 702.3 614.7 698.5 620.3 694.5 625.9 690.5 631.4 686.4 636.8 682.2 642.1 677.8 647.3 673.4 652.4 668.9 657.4 664.3 662.3 659.6 667.1 654.8 671.9 650 676.5 645 681 640 685.4 634.9 689.7 629.8 693.9 624.5 698 619.2 701.9 613.9 705.8 608.4 709.5 602.9 713.2 597.4 716.7 591.8 720.1 586.1 723.3 580.4 726.5 574.7 729.5 568.9 732.5 563 735.3 557.1 737.9 551.2 740.5 545.2 742.9 539.3 745.2 533.2 747.4 527.2 749.5 521.1 751.5 515 753.3 508.9 755 502.8 756.6 496.7 758 490.5 759.4 484.3 760.6 478.2 761.7 472 762.6 465.8 763.5 459.6 764.2 453.5 764.9 447.3 765.3 441.1 765.7 435 766 428.8 766.1 422.7 766.2 416.6 766.1 410.5 765.9 404.4 765.6 398.4 765.1 392.3 764.6 386.3 763.9 380.3 763.2 374.4ZM774.3 374.1 775.1 380.2 775.8 386.4 776.4 392.6 776.8 398.8 777.2 405.1 777.4 411.3 777.5 417.6 777.5 424 777.4 430.3 777.2 436.6 776.8 443 776.3 449.3 775.7 455.7 775 462.1 774.1 468.5 773.1 474.9 772 481.2 770.8 487.6 769.4 494 768 500.4 766.4 506.7 764.6 513 762.8 519.4 760.8 525.7 758.7 531.9 756.4 538.2 754 544.4 751.5 550.6 748.9 556.8 746.2 562.9 743.3 569 740.3 575.1 737.2 581.1 733.9 587 730.6 592.9 727.1 598.8 723.5 604.6 719.7 610.4 715.9 616.1 711.9 621.7 707.8 627.2 703.6 632.7 699.3 638.2 694.9 643.5 690.3 648.8 685.7 654 680.9 659.1 676 664.1 671.1 669.1 666 674 660.8 678.7 655.5 683.4 650.1 688 644.7 692.5 639.1 696.9 633.4 701.1 627.7 705.3 621.8 709.4 615.9 713.3 609.9 717.2 603.8 720.9 597.7 724.6 591.4 728.1 585.1 731.4 578.8 734.7 572.3 737.9 565.8 740.9 559.3 743.8 552.6 746.6 546 749.2 539.2 751.7 532.5 754.1 525.6 756.4 518.8 758.5 511.9 760.5 504.9 762.3 498 764.1 491 765.7 483.9 767.1 476.9 768.4 469.8 769.6 462.7 770.6 455.6 771.5 448.5 772.3 441.4 772.9 434.3 773.4 427.2 773.8 420.1 774 412.9 774.1 405.8 774 398.7 773.8 391.7 773.5 384.6 773 377.6 772.4 370.5 771.6 363.6 770.7 356.6 769.7 349.7 768.6 342.8 767.3 335.9 765.9 329.1 764.4 322.4 762.7 315.7 760.9 309 759 302.4 756.9 295.8 754.8 289.3 752.5 282.9 750.1 276.5 747.6 270.2 744.9 264 742.1 257.8 739.3 251.7 736.3 245.7 733.2 239.7 730 233.9 726.7 228.1 723.3 222.4 719.7 216.7 716.1 211.2 712.4 205.8 708.6 200.4 704.7 195.1 700.7 190 696.6 184.9 692.4 179.9 688.2 175 683.8 170.2 679.4 165.5 674.9 160.9 670.3 156.4 665.7 152.1 660.9 147.8 656.1 143.6 651.3 139.5 646.4 135.6 641.4 131.7 636.3 128 631.2 124.3 626 120.8 620.8 117.3 615.5 114 610.2 110.8 604.8 107.7 599.4 104.7 594 101.9 588.5 99.1 582.9 96.4 577.4 93.9 571.8 91.5 566.1 89.2 560.4 86.9 554.7 84.8 549 82.9 543.3 81 537.5 79.2 531.7 77.6 525.9 76 520.1 74.6 514.3 73.3 508.4 72.1 502.6 70.9 496.7 69.9 490.8 69.1 485 68.3 479.1 67.6 473.2 67 467.4 66.6 461.5 66.2 455.6 65.9 449.8 65.8 443.9 65.7 438.1 65.8 432.2 65.9 426.4 66.2 420.6 66.5 414.8 67 409.1 67.6 403.3 68.2 397.6 68.9 391.9 69.8 386.2 70.7 380.5 71.7 374.9 72.9 369.3 74.1 363.7 75.4 358.2 76.8 352.7 78.3 347.2 79.8 341.7 81.5 336.3 83.2 330.9 85.1 325.6 87 320.3 89 315 91.1 309.8 93.2 304.6 95.5 299.5 97.8 294.4 100.2 289.3 102.7 284.3 105.3 279.3 107.9 274.4 110.6 269.6 113.4 264.7 116.2 260 119.2 255.2 122.2 250.6 125.2 246 128.4 241.4 131.6 236.9 134.8 232.4 138.2 228 141.6 223.7 145 219.4 148.5 215.2 152.1 211 155.8 206.9 159.5 202.8 163.2 198.8 167.1 194.9 170.9 191 174.9 187.2 178.9 183.4 182.9 179.7 187 176.1 191.1 172.5 195.3 169 199.6 165.6 203.9 162.2 208.2 158.9 212.6 155.7 217 152.5 221.5 149.4 226 146.4 230.6 143.4 235.2 140.5 239.8 137.7 244.5 134.9 249.2 132.2 253.9 129.6 258.7 127.1 263.6 124.6 268.4 122.2 273.3 119.9 278.2 117.6 283.2 115.4 288.2 113.3 293.2 111.2 298.3 109.3 303.3 107.4 308.4 105.5 313.6 103.8 318.7 102.1 323.9 100.5 329.1 99 334.3 97.6 339.5 96.2 344.8 94.9 350.1 93.7 355.4 92.5 360.7 91.5 366 90.5 371.4 89.6 376.7 88.7 382.1 88 387.5 87.3 392.8 86.7 398.2 86.2 403.7 85.8 409.1 85.4 414.5 85.1 419.9 84.9 425.3 84.8 430.8 84.8 436.2 84.8 441.6 84.9 447.1 85.1 452.5 85.4 457.9 85.8 463.4 86.2 468.8 86.8 474.2 87.4 479.6 88.1 485 88.8 490.4 89.7 495.8 90.6 501.2 91.7 506.5 92.8 511.9 93.9 517.2 95.2 522.5 96.6 527.8 98 533.1 99.5 538.4 101.1 543.6 102.8 548.8 104.5 554 106.4 559.2 108.3 564.3 110.3 569.4 112.4 574.5 114.6 579.6 116.8 584.6 119.1 589.6 121.6 594.6 124.1 599.5 126.6 604.4 129.3 609.2 132 614 134.9 618.8 137.8 623.5 140.8 628.2 143.8 632.9 147 637.5 150.2 642 153.5 646.5 156.9 651 160.3 655.4 163.9 659.7 167.5 664 171.2 668.2 175 672.4 178.8 676.5 182.7 680.6 186.7 684.6 190.8 688.5 195 692.4 199.2 696.2 203.5 699.9 207.9 703.6 212.3 707.2 216.8 710.7 221.4 714.2 226 717.6 230.8 720.9 235.5 724.1 240.4 727.2 245.3 730.3 250.3 733.3 255.4 736.2 260.5 739 265.7 741.7 270.9 744.3 276.2 746.9 281.5 749.3 287 751.7 292.4 754 297.9 756.1 303.5 758.2 309.2 760.2 314.8 762.1 320.6 763.8 326.3 765.5 332.2 767.1 338 768.5 343.9 769.9 349.9 771.2 355.9 772.3 361.9 773.3 368 774.3 374.1ZM770.2 374.2 769.3 368.2 768.3 362.2 767.2 356.2 766 350.3 764.6 344.4 763.2 338.5 761.6 332.7 760 327 758.2 321.2 756.4 315.6 754.4 310 752.4 304.4 750.3 298.9 748 293.4 745.7 288 743.3 282.6 740.8 277.3 738.2 272.1 735.5 266.9 732.7 261.8 729.8 256.7 726.9 251.7 723.9 246.8 720.8 241.9 717.6 237.1 714.3 232.3 711 227.7 707.6 223.1 704.1 218.5 700.6 214 696.9 209.6 693.2 205.3 689.5 201.1 685.7 196.9 681.8 192.8 677.8 188.7 673.8 184.8 669.7 180.9 665.6 177.1 661.4 173.3 657.2 169.7 652.9 166.1 648.5 162.6 644.1 159.1 639.7 155.8 635.2 152.5 630.6 149.3 626 146.2 621.4 143.1 616.7 140.2 612 137.3 607.2 134.5 602.4 131.8 597.6 129.1 592.7 126.6 587.8 124.1 582.9 121.7 577.9 119.4 572.9 117.2 567.9 115 562.8 112.9 557.7 110.9 552.6 109 547.5 107.2 542.3 105.5 537.1 103.8 531.9 102.2 526.7 100.7 521.4 99.3 516.2 98 510.9 96.7 505.6 95.5 500.3 94.4 495 93.4 489.6 92.5 484.3 91.6 478.9 90.9 473.6 90.2 468.2 89.6 462.8 89 457.5 88.6 452.1 88.2 446.7 87.9 441.3 87.7 435.9 87.6 430.6 87.6 425.2 87.6 419.8 87.7 414.4 87.9 409.1 88.2 403.7 88.5 398.3 89 393 89.5 387.6 90.1 382.3 90.7 377 91.5 371.7 92.3 366.4 93.2 361.1 94.2 355.9 95.2 350.6 96.4 345.4 97.6 340.2 98.9 335 100.2 329.8 101.6 324.7 103.2 319.5 104.7 314.4 106.4 309.4 108.1 304.3 109.9 299.3 111.8 294.3 113.8 289.3 115.8 284.4 117.9 279.5 120.1 274.6 122.3 269.7 124.6 264.9 127 260.1 129.5 255.4 132 250.7 134.6 246 137.3 241.4 140 236.8 142.8 232.2 145.7 227.7 148.6 223.2 151.6 218.8 154.7 214.4 157.8 210.1 161 205.8 164.3 201.5 167.7 197.3 171.1 193.2 174.5 189.1 178.1 185 181.7 181 185.3 177.1 189 173.2 192.8 169.3 196.7 165.6 200.6 161.8 204.5 158.2 208.5 154.6 212.6 151 216.8 147.5 221 144.1 225.2 140.7 229.5 137.4 233.9 134.2 238.3 131.1 242.8 128 247.3 124.9 251.9 122 256.5 119.1 261.2 116.2 265.9 113.5 270.7 110.8 275.5 108.2 280.4 105.7 285.3 103.2 290.2 100.9 295.2 98.6 300.3 96.3 305.4 94.2 310.5 92.2 315.7 90.2 320.9 88.3 326.2 86.5 331.5 84.8 336.8 83.1 342.2 81.6 347.5 80.1 353 78.7 358.4 77.4 363.9 76.2 369.5 75.1 375 74.1 380.6 73.2 386.2 72.4 391.8 71.7 397.5 71 403.1 70.5 408.8 70.1 414.5 69.7 420.2 69.5 426 69.3 431.7 69.3 437.5 69.3 443.3 69.5 449.1 69.8 454.9 70.1 460.7 70.6 466.5 71.2 472.3 71.9 478.1 72.6 483.9 73.5 489.7 74.5 495.5 75.6 501.3 76.8 507.1 78.2 512.9 79.6 518.6 81.1 524.4 82.8 530.1 84.5 535.8 86.4 541.5 88.4 547.2 90.4 552.9 92.6 558.5 94.9 564.1 97.3 569.7 99.9 575.2 102.5 580.7 105.2 586.2 108.1 591.6 111.1 597 114.1 602.4 117.3 607.7 120.6 612.9 124 618.1 127.5 623.3 131.1 628.4 134.8 633.5 138.6 638.4 142.6 643.4 146.6 648.2 150.7 653 155 657.8 159.3 662.4 163.8 667 168.3 671.6 173 676 177.7 680.4 182.5 684.7 187.5 688.9 192.5 693 197.6 697 202.8 701 208.1 704.8 213.5 708.6 219 712.2 224.5 715.8 230.2 719.3 235.9 722.6 241.7 725.9 247.6 729 253.6 732.1 259.6 735 265.7 737.9 271.9 740.6 278.1 743.2 284.4 745.7 290.7 748.1 297.2 750.3 303.6 752.5 310.2 754.5 316.8 756.4 323.4 758.1 330.1 759.8 336.8 761.3 343.6 762.7 350.4 763.9 357.2 765 364.1 766 371 766.9 377.9 767.6 384.9 768.2 391.9 768.7 398.8 769 405.9 769.2 412.9 769.3 419.9 769.2 426.9 769 434 768.6 441 768.2 448 767.5 455.1 766.8 462.1 765.9 469.1 764.9 476 763.7 483 762.4 490 761 496.9 759.4 503.7 757.7 510.6 755.8 517.4 753.9 524.2 751.8 530.9 749.6 537.6 747.2 544.3 744.7 550.9 742.1 557.4 739.4 563.9 736.5 570.3 733.5 576.7 730.4 583 727.2 589.2 723.8 595.4 720.4 601.4 716.8 607.4 713.1 613.4 709.3 619.2 705.4 625 701.4 630.7 697.3 636.3 693 641.8 688.7 647.2 684.3 652.5 679.8 657.7 675.1 662.8 670.4 667.9 665.6 672.8 660.7 677.6 655.8 682.3 650.7 686.9 645.6 691.4 640.4 695.8 635.1 700.1 629.7 704.2 624.3 708.3 618.8 712.2 613.3 716 607.7 719.7 602 723.3 596.2 726.7 590.5 730.1 584.6 733.3 578.7 736.4 572.8 739.3 566.8 742.2 560.8 744.9 554.7 747.5 548.7 750 542.5 752.3 536.4 754.6 530.2 756.7 524 758.6 517.8 760.5 511.5 762.2 505.3 763.8 499 765.3 492.7 766.6 486.4 767.9 480.1 769 473.8 769.9 467.5 770.8 461.2 771.5 454.9 772.1 448.6 772.6 442.3 773 436 773.2 429.8 773.4 423.5 773.4 417.3 773.3 411 773.1 404.8 772.7 398.7 772.3 392.5 771.7 386.4 771 380.3 770.2 374.2Z" fill="#000" fill-rule="nonzero"/><path d="M219.7 386.5 217.7 381.8 215.9 377 214.2 372.1 212.7 367 211.3 362 210.1 356.8 209 351.5 208.1 346.2 207.4 340.7 206.9 335.3 206.5 329.7 206.3 324.1 206.3 318.5 206.5 312.8 206.9 307.1 207.5 301.3 208.2 295.6 209.2 289.8 210.4 284 211.8 278.2 213.3 272.4 215.1 266.6 217.1 260.8 219.2 255.1 221.6 249.4 224.2 243.7 226.9 238.1 229.9 232.5 233.1 227 236.4 221.5 240 216.1 243.7 210.8 247.6 205.6 251.8 200.5 256 195.5 260.5 190.6 265.2 185.8 270 181.1 274.9 176.5 280.1 172.1 285.4 167.8 290.8 163.6 296.4 159.6 302.1 155.7 308 152 314 148.5 320.1 145.1 326.4 141.9 332.8 138.8 339.2 136 345.8 133.3 352.5 130.8 359.2 128.5 366.1 126.3 373 124.4 380 122.7 387 121.2 394.1 119.8 401.2 118.7 408.4 117.8 415.7 117.1 422.9 116.6 430.2 116.4 437.4 116.3 444.7 116.4 452 116.8 459.2 117.4 466.5 118.2 473.7 119.2 480.9 120.5 488 121.9 495.1 123.6 502.1 125.5 509 127.6 515.9 129.9 522.7 132.4 529.4 135.1 536 138.1 542.5 141.2 548.9 144.5 555.1 148.1 561.2 151.8 567.2 155.7 573.1 159.8 578.8 164.1 584.3 168.5 589.7 173.2 594.9 178 599.9 182.9 604.7 188 609.4 193.3 613.8 198.7 618.1 204.2 622.1 209.9 625.9 215.7 629.5 221.6 632.9 227.6 636.1 233.7 639 239.9 641.7 246.2 644.2 252.5 646.4 259 648.4 265.5 650.1 272 651.6 278.5 652.9 285.1 653.9 291.8 654.7 298.4 655.2 305 655.5 311.7 655.5 318.3 655.3 324.9 654.9 331.4 654.2 337.9 653.3 344.4 652.1 350.8 650.8 357.1 649.2 363.4 647.4 369.6 645.4 375.7 643.2 381.7 640.8 387.5 638.2 393.3 635.5 399 632.5 404.5 629.4 409.9 626.1 415.1 622.7 420.3 619.1 425.2 615.4 430.1 611.6 434.7 607.6 439.2 603.5 443.6 599.4 447.8 595.1 451.8 590.7 455.7 586.3 459.4 581.8 462.9 577.2 466.2 572.6 469.4 568 472.5 563.3 475.3 558.5 478 553.8 480.6 549 483 544.3 485.2 539.5 487.3 534.7 489.2 530 491 525.3 492.6 520.6 494.1 515.9 495.5 511.3 496.7 506.7 497.8 502.1 498.8 497.6 499.7 493.1 500.4 488.7 501.1 484.4 501.6 480.1 502.1 475.8 502.5 471.7 502.7 467.6 502.9 463.5 503.1 459.5 503.1 455.6 503.1 451.7 503 447.9 502.9 444.2 502.7 440.5 502.5 436.9 502.2 433.3 501.9 429.8 501.6 426.3 501.2 422.9 500.8 419.6 500.4 416.3 499.9 413 499.4 409.8 498.9 406.6 498.4 403.4 497.9 400.3 497.4 397.2 496.8 394.1 496.2 391 495.7 387.9 495.1 384.9 494.5 381.9 493.9 378.9 493.3 375.8 492.7 372.8 492 369.8 491.4 366.8 490.7 363.7 490 360.7 489.3 357.6 488.6 354.5 487.8 351.4 487.1 348.3 486.2 345.2 485.4 342 484.5 338.8 483.6 335.6 482.7 332.4 481.7 329.2 480.6 325.9 479.5 322.6 478.3 319.2 477.1 315.9 475.8 312.5 474.5 309.1 473 305.7 471.5 302.3 469.9 298.9 468.3 295.4 466.5 292 464.6 288.5 462.7 285.1 460.6 281.6 458.5 278.2 456.2 274.8 453.9 271.4 451.4 268 448.8 264.6 446.1 261.3 443.3 258 440.3 254.8 437.3 251.6 434.1 248.5 430.8 245.4 427.4 242.4 423.8 239.5 420.1 236.7 416.3 233.9 412.4 231.3 408.4 228.7 404.2 226.3 400 224 395.6 221.7 391.1 219.7 386.5Z" fill="none" stroke="#c8506f" stroke-width="2.8" stroke-linejoin="round" opacity="1.0"/><path d="M180.9 387.5 183.9 381.8 187 376.3 190.3 370.9 193.7 365.6 197.1 360.5 200.7 355.6 204.4 350.8 208.2 346.2 212 341.7 216 337.4 220 333.2 224 329.2 228.2 325.4 232.3 321.7 236.6 318.1 240.8 314.8 245.1 311.5 249.4 308.5 253.8 305.5 258.1 302.7 262.5 300.1 266.8 297.6 271.2 295.3 275.6 293.1 279.9 291 284.3 289 288.6 287.2 292.9 285.5 297.2 284 301.4 282.5 305.6 281.2 309.8 279.9 313.9 278.8 318 277.8 322.1 276.9 326.1 276.1 330.1 275.4 334 274.7 337.8 274.2 341.6 273.7 345.4 273.3 349.1 272.9 352.8 272.7 356.4 272.5 359.9 272.3 363.4 272.3 366.9 272.2 370.3 272.2 373.6 272.3 376.9 272.4 380.2 272.5 383.4 272.7 386.5 272.9 389.7 273.1 392.8 273.4 395.8 273.7 398.8 274 401.8 274.3 404.7 274.6 407.7 275 410.6 275.3 413.4 275.7 416.3 276.1 419.1 276.5 422 276.9 424.8 277.3 427.6 277.8 430.4 278.2 433.3 278.6 436.1 279.1 438.9 279.6 441.8 280.1 444.6 280.6 447.5 281.1 450.4 281.6 453.3 282.2 456.2 282.7 459.2 283.3 462.1 284 465.2 284.6 468.2 285.3 471.3 286 474.4 286.8 477.5 287.6 480.7 288.4 483.9 289.3 487.2 290.3 490.5 291.3 493.8 292.3 497.2 293.5 500.6 294.7 504 295.9 507.5 297.3 511 298.7 514.5 300.2 518.1 301.9 521.7 303.6 525.3 305.3 528.9 307.2 532.6 309.3 536.2 311.4 539.9 313.6 543.6 315.9 547.3 318.4 551 321 554.7 323.7 558.4 326.6 562.1 329.6 565.7 332.7 569.3 336 572.9 339.4 576.5 342.9 580 346.6 583.5 350.5 586.9 354.5 590.2 358.6 593.5 362.9 596.7 367.4 599.8 372 602.8 376.8 605.8 381.7 608.6 386.7 611.3 392 613.9 397.3 616.3 402.9 618.6 408.5 620.8 414.3 622.8 420.3 624.6 426.4 626.3 432.6 627.8 438.9 629.1 445.4 630.2 452 631.1 458.7 631.8 465.5 632.2 472.4 632.5 479.4 632.5 486.4 632.3 493.6 631.8 500.8 631.1 508.1 630.2 515.4 628.9 522.8 627.4 530.2 625.7 537.7 623.7 545.1 621.3 552.5 618.7 559.9 615.9 567.3 612.7 574.7 609.3 582 605.6 589.2 601.5 596.4 597.2 603.5 592.7 610.4 587.8 617.3 582.7 624 577.3 630.6 571.6 637 565.7 643.3 559.5 649.4 553 655.2 546.3 660.9 539.4 666.4 532.2 671.6 524.9 676.6 517.3 681.3 509.5 685.8 501.5 690 493.4 693.9 485.1 697.6 476.7 700.9 468.1 703.9 459.4 706.6 450.6 709 441.7 711.1 432.7 712.8 423.7 714.2 414.6 715.2 405.5 716 396.4 716.3 387.2 716.4 378.1 716 369.1 715.4 360 714.4 351 713.1 342.2 711.4 333.3 709.4 324.6 707.1 316.1 704.5 307.6 701.5 299.3 698.3 291.2 694.7 283.2 690.9 275.4 686.8 267.8 682.4 260.4 677.8 253.2 672.8 246.2 667.7 239.5 662.3 233 656.7 226.7 650.9 220.7 644.9 215 638.8 209.5 632.4 204.2 625.9 199.3 619.2 194.6 612.4 190.2 605.5 186 598.5 182.2 591.3 178.6 584.1 175.3 576.8 172.3 569.4 169.6 562 167.1 554.6 164.9 547.1 163 539.6 161.4 532 160 524.5 158.9 517 158.1 509.5 157.5 502.1 157.1 494.7 157 487.3 157.2 480 157.5 472.7 158.1 465.6 159 458.5 160 451.5 161.3 444.5 162.7 437.7 164.4 431 166.2 424.4 168.3 417.9 170.5 411.6 172.9 405.4 175.4 399.3 178.1 393.3 180.9 387.5Z" fill="none" stroke="#c8506f" stroke-width="2.8" stroke-linejoin="round" opacity="1.0"/><path d="M110 389.3 110.5 381.8 111.3 374.4 112.4 367 113.7 359.6 115.3 352.3 117.1 345 119.1 337.8 121.4 330.7 123.9 323.6 126.7 316.7 129.6 309.8 132.8 303.1 136.2 296.4 139.8 289.9 143.6 283.5 147.5 277.2 151.7 271.1 156 265.1 160.6 259.2 165.2 253.5 170.1 248 175.1 242.6 180.2 237.4 185.5 232.3 190.9 227.5 196.5 222.8 202.1 218.3 207.9 213.9 213.7 209.8 219.7 205.8 225.8 202.1 231.9 198.5 238.1 195.1 244.4 191.9 250.7 188.9 257.1 186.1 263.5 183.6 270 181.2 276.5 179 283 177 289.6 175.2 296.1 173.6 302.7 172.2 309.2 171 315.8 170 322.3 169.2 328.8 168.6 335.3 168.2 341.7 168 348.1 167.9 354.4 168.1 360.7 168.4 366.9 168.9 373 169.6 379.1 170.5 385.1 171.5 391 172.7 396.8 174.1 402.5 175.6 408.1 177.3 413.7 179.1 419.1 181.1 424.4 183.2 429.5 185.5 434.6 187.9 439.5 190.4 444.3 193 449 195.8 453.5 198.6 458 201.6 462.2 204.7 466.4 207.9 470.3 211.1 474.2 214.5 477.9 217.9 481.5 221.4 484.9 224.9 488.1 228.5 491.3 232.2 494.3 235.9 497.1 239.7 499.8 243.5 502.3 247.3 504.8 251.2 507 255.1 509.2 259 511.2 262.9 513 266.8 514.8 270.7 516.4 274.6 517.9 278.5 519.3 282.4 520.5 286.3 521.7 290.2 522.7 294 523.6 297.9 524.4 301.7 525.2 305.4 525.8 309.1 526.3 312.8 526.8 316.5 527.2 320.1 527.5 323.7 527.7 327.3 527.9 330.8 528 334.2 528 337.7 528 341 528 344.4 527.8 347.7 527.7 350.9 527.5 354.2 527.3 357.3 527 360.5 526.7 363.6 526.4 366.7 526 369.7 525.7 372.8 525.3 375.8 524.9 378.7 524.4 381.7 524 384.6 523.5 387.6 523.1 390.5 522.6 393.4 522.1 396.3 521.6 399.2 521.1 402.1 520.5 405 520 407.9 519.4 410.8 518.9 413.8 518.3 416.7 517.7 419.7 517 422.7 516.4 425.7 515.7 428.8 515 431.8 514.3 435 513.5 438.1 512.7 441.3 511.8 444.5 510.9 447.7 510 451 508.9 454.4 507.9 457.7 506.7 461.2 505.5 464.6 504.3 468.1 502.9 471.6 501.5 475.2 500 478.8 498.4 482.5 496.7 486.2 494.9 489.9 493 493.6 490.9 497.4 488.8 501.2 486.6 505 484.2 508.8 481.7 512.7 479 516.5 476.3 520.4 473.3 524.2 470.3 528.1 467.1 531.9 463.7 535.7 460.2 539.5 456.6 543.3 452.8 547 448.8 550.6 444.7 554.2 440.4 557.8 436 561.3 431.4 564.6 426.7 568 421.8 571.2 416.7 574.3 411.5 577.3 406.2 580.1 400.7 582.9 395 585.5 389.2 588 383.3 590.3 377.3 592.4 371.1 594.4 364.9 596.2 358.5 597.8 352 599.3 345.4 600.5 338.7 601.5 332 602.3 325.2 602.9 318.3 603.3 311.4 603.4 304.4 603.4 297.4 603 290.4 602.5 283.4 601.7 276.4 600.6 269.4 599.3 262.4 597.7 255.4 595.9 248.5 593.9 241.7 591.5 234.9 589 228.2 586.2 221.6 583.1 215.1 579.8 208.7 576.2 202.4 572.5 196.3 568.4 190.3 564.2 184.5 559.7 178.8 555 173.3 550.1 168 545 162.9 539.6 158 534.1 153.3 528.4 148.8 522.5 144.5 516.5 140.4 510.3 136.6 503.9 133 497.4 129.7 490.8 126.6 484 123.8 477.1 121.2 470.1 118.8 463.1 116.8 455.9 115 448.7 113.4 441.4 112.1 434 111.1 426.6 110.4 419.2 109.9 411.7 109.6 404.2 109.7 396.8 110 389.3Z" fill="none" stroke="#6a5ce0" stroke-width="2.8" stroke-linejoin="round" opacity="1.0"/><path d="M292.4 384.6 293.1 381.8 293.8 378.9 294.5 376.1 295.2 373.3 295.9 370.5 296.6 367.7 297.3 365 298 362.2 298.7 359.5 299.5 356.8 300.2 354 301 351.3 301.8 348.6 302.6 345.8 303.4 343.1 304.2 340.3 305.1 337.5 306 334.7 306.9 331.9 307.8 329.1 308.8 326.3 309.8 323.4 310.9 320.5 312 317.6 313.1 314.7 314.3 311.7 315.6 308.7 316.9 305.7 318.2 302.7 319.7 299.6 321.2 296.6 322.7 293.5 324.4 290.4 326.1 287.2 327.9 284.1 329.8 281 331.8 277.8 333.9 274.6 336.1 271.4 338.4 268.3 340.8 265.1 343.2 261.9 345.8 258.8 348.5 255.6 351.4 252.5 354.3 249.3 357.3 246.3 360.5 243.2 363.8 240.2 367.2 237.2 370.7 234.2 374.4 231.3 378.1 228.5 382 225.7 386.1 222.9 390.2 220.3 394.5 217.7 398.8 215.2 403.4 212.7 408 210.4 412.7 208.2 417.6 206 422.6 204 427.6 202 432.8 200.2 438.1 198.5 443.6 197 449.1 195.5 454.7 194.2 460.4 193.1 466.2 192 472 191.2 478 190.5 484 189.9 490.1 189.5 496.3 189.3 502.6 189.3 508.8 189.4 515.2 189.7 521.6 190.2 528 190.9 534.5 191.8 540.9 192.8 547.4 194.1 553.9 195.6 560.5 197.2 567 199.1 573.5 201.2 580 203.5 586.4 206 592.8 208.7 599.2 211.6 605.6 214.7 611.8 218.1 618 221.7 624.2 225.4 630.2 229.4 636.2 233.6 642 238.1 647.8 242.7 653.4 247.5 658.9 252.6 664.2 257.8 669.4 263.3 674.5 268.9 679.4 274.7 684.1 280.8 688.6 287 692.9 293.4 697.1 299.9 701 306.7 704.7 313.6 708.2 320.6 711.4 327.8 714.4 335.1 717.2 342.6 719.7 350.2 721.9 357.9 723.8 365.7 725.5 373.6 726.9 381.6 728 389.7 728.9 397.9 729.4 406.1 729.6 414.3 729.5 422.6 729.1 430.9 728.4 439.1 727.4 447.4 726 455.7 724.4 464 722.4 472.2 720.2 480.3 717.6 488.4 714.7 496.4 711.5 504.3 707.9 512.1 704.1 519.7 700 527.2 695.6 534.6 690.9 541.9 686 548.9 680.8 555.8 675.3 562.5 669.6 568.9 663.6 575.2 657.4 581.2 650.9 587 644.3 592.6 637.5 597.9 630.4 602.9 623.2 607.7 615.9 612.2 608.4 616.4 600.8 620.4 593 624 585.1 627.4 577.2 630.5 569.1 633.2 561.1 635.7 552.9 637.9 544.7 639.7 536.5 641.3 528.3 642.6 520.1 643.5 511.9 644.2 503.8 644.6 495.7 644.7 487.6 644.5 479.6 644.1 471.7 643.4 463.9 642.4 456.2 641.2 448.6 639.7 441.1 637.9 433.8 636 426.6 633.8 419.6 631.4 412.7 628.8 405.9 626 399.4 623 393 619.8 386.8 616.4 380.7 612.9 374.9 609.3 369.3 605.5 363.8 601.5 358.6 597.5 353.5 593.3 348.6 589.1 344 584.7 339.5 580.3 335.2 575.8 331.2 571.2 327.3 566.6 323.6 561.9 320.2 557.2 316.9 552.4 313.8 547.6 310.9 542.9 308.1 538.1 305.6 533.3 303.2 528.5 301 523.7 298.9 518.9 297.1 514.2 295.3 509.5 293.8 504.8 292.3 500.1 291.1 495.5 289.9 491 288.9 486.5 288 482 287.2 477.6 286.6 473.2 286 469 285.5 464.7 285.2 460.6 284.9 456.5 284.8 452.4 284.7 448.5 284.7 444.6 284.7 440.7 284.8 437 285 433.3 285.3 429.6 285.6 426.1 285.9 422.5 286.3 419.1 286.7 415.7 287.2 412.4 287.7 409.1 288.2 405.9 288.7 402.7 289.3 399.6 289.9 396.5 290.5 393.5 291.1 390.5 291.8 387.6 292.4 384.6Z" fill="none" stroke="#6a5ce0" stroke-width="2.8" stroke-linejoin="round" opacity="1.0"/><path d="M303 702.3L313.5 705.5L311 715L318 717.5L320.5 707.5L332 710.5" fill="none" stroke="#c8506f" stroke-width="2.8" stroke-linejoin="miter"/><path d="M131 308L128.5 313L117 311L116 317.5L124.5 320.5L123 325" fill="none" stroke="#6a5ce0" stroke-width="2.8"/><path d="M301 351L298.5 364.9L296.5 366L294 376" fill="none" stroke="#6a5ce0" stroke-width="2.8"/><path d="M407 381.29999999999995L407 119" stroke="#86c34a" stroke-width="1"/><path d="M407 381.29999999999995L793 373" stroke="#c8643c" stroke-width="1"/><path d="M407 381.29999999999995L347.79999999999995 204.60000000000002" stroke="#4a7fd0" stroke-width="1"/><path d="M790 372.5L837 372" stroke="#000" stroke-width="4"/><defs><clipPath id="mc"><path d="M163.7 173.1 167.5 169.5 171.3 166.1 175.1 162.7 179 159.3 182.9 156.1 186.9 152.8 190.9 149.6 195 146.5 199 143.4 203.2 140.4 207.3 137.5 211.5 134.5 215.8 131.7 220 128.9 224.3 126.2 228.7 123.5 233 120.9 237.5 118.3 241.9 115.8 246.4 113.4 250.9 111 255.4 108.7 259.9 106.4 264.5 104.2 269.1 102.1 273.8 100 278.4 98 283.1 96 287.8 94.1 292.6 92.3 297.3 90.5 302.1 88.8 306.9 87.2 311.7 85.6 316.6 84.1 321.5 82.6 326.3 81.2 331.2 79.9 336.1 78.6 341.1 77.4 346 76.3 351 75.2 356 74.2 361 73.2 366 72.4 371 71.5 376 70.8 381 70.1 386.1 69.5 391.1 68.9 396.2 68.5 401.3 68 406.3 67.7 411.4 67.4 416.5 67.2 421.6 67 426.7 67 431.8 66.9 436.9 67 442 67.1 447.1 67.3 452.2 67.5 457.3 67.9 462.3 68.3 467.4 68.7 472.5 69.2 477.6 69.8 482.7 70.5 487.7 71.2 492.8 72 497.8 72.9 502.9 73.8 507.9 74.9 512.9 75.9 518 77.1 522.9 78.3 527.9 79.6 532.9 80.9 537.8 82.4 542.8 83.8 547.7 85.4 552.6 87 557.5 88.7 562.3 90.5 567.2 92.4 572 94.3 576.8 96.2 581.6 98.3 586.3 100.4 591 102.6 595.7 104.8 600.4 107.2 605 109.6 609.6 112 614.2 114.6 618.7 117.2 623.3 119.8 627.7 122.6 632.2 125.4 636.6 128.2 640.9 131.2 645.3 134.2 649.6 137.3 653.8 140.4 658 143.6 662.2 146.9 666.3 150.2 670.4 153.7 674.4 157.1 678.4 160.7 682.3 164.3 686.2 167.9 690.1 171.7 693.9 175.5 697.6 179.3 701.3 183.3 704.9 187.2 708.5 191.3 712 195.4 715.4 199.6 718.8 203.8 722.2 208.1 725.4 212.5 728.6 216.9 731.8 221.3 734.9 225.9 737.9 230.5 740.8 235.1 743.7 239.8 746.5 244.6 749.2 249.4 751.9 254.2 754.5 259.1 757 264.1 759.4 269.1 761.8 274.2 764.1 279.3 766.3 284.4 768.4 289.7 770.5 294.9 772.4 300.2 774.3 305.6 776.1 310.9 777.8 316.4 779.4 321.8 781 327.3 782.4 332.9 783.8 338.5 785.1 344.1 786.2 349.8 787.3 355.4 788.3 361.2 789.2 366.9 790 372.7 790.7 378.5 791.3 384.3 791.8 390.2 792.2 396.1 792.5 402 792.7 407.9 792.9 413.8 792.9 419.8 792.8 425.8 792.6 431.7 792.3 437.7 791.9 443.8 791.4 449.8 790.7 455.8 790 461.8 789.2 467.9 788.2 473.9 787.2 479.9 786.1 486 784.8 492 783.4 498 782 504 780.4 510 778.7 516 776.9 522 775 527.9 773 533.9 770.8 539.8 768.6 545.7 766.2 551.5 763.8 557.4 761.2 563.2 758.6 569 755.8 574.7 752.9 580.4 749.9 586.1 746.8 591.8 743.6 597.4 740.3 602.9 736.9 608.4 733.4 613.9 729.7 619.3 726 624.6 722.2 629.9 718.3 635.2 469.5 429.5 470.4 428.5 471.2 427.4 472.1 426.4 472.9 425.3 473.7 424.3 474.5 423.2 475.3 422.1 476 421 476.8 419.9 477.5 418.8 478.2 417.7 478.9 416.5 479.5 415.4 480.2 414.2 480.8 413.1 481.4 411.9 482 410.7 482.5 409.5 483.1 408.3 483.6 407.1 484.1 405.9 484.6 404.7 485 403.5 485.5 402.2 485.9 401 486.3 399.7 486.7 398.5 487 397.3 487.3 396 487.7 394.7 488 393.5 488.2 392.2 488.5 391 488.7 389.7 488.9 388.4 489.1 387.1 489.3 385.9 489.4 384.6 489.5 383.3 489.6 382 489.7 380.8 489.8 379.5 489.8 378.2 489.9 376.9 489.8 375.7 489.8 374.4 489.8 373.1 489.7 371.8 489.6 370.6 489.5 369.3 489.4 368.1 489.2 366.8 489.1 365.5 488.9 364.3 488.7 363.1 488.4 361.8 488.2 360.6 487.9 359.4 487.6 358.1 487.3 356.9 487 355.7 486.6 354.5 486.2 353.3 485.9 352.1 485.4 350.9 485 349.7 484.6 348.6 484.1 347.4 483.6 346.3 483.1 345.1 482.6 344 482 342.8 481.5 341.7 480.9 340.6 480.3 339.5 479.7 338.4 479 337.4 478.4 336.3 477.7 335.2 477 334.2 476.3 333.2 475.6 332.2 474.9 331.1 474.1 330.1 473.3 329.2 472.6 328.2 471.8 327.2 470.9 326.3 470.1 325.4 469.3 324.4 468.4 323.5 467.5 322.6 466.6 321.8 465.7 320.9 464.8 320.1 463.9 319.2 462.9 318.4 462 317.6 461 316.8 460 316 459 315.3 458 314.5 457 313.8 456 313.1 454.9 312.4 453.9 311.7 452.8 311 451.7 310.4 450.6 309.8 449.5 309.2 448.4 308.6 447.3 308 446.2 307.4 445.1 306.9 443.9 306.3 442.8 305.8 441.6 305.3 440.4 304.9 439.3 304.4 438.1 304 436.9 303.5 435.7 303.1 434.5 302.7 433.3 302.4 432.1 302 430.8 301.7 429.6 301.4 428.4 301.1 427.1 300.8 425.9 300.5 424.7 300.3 423.4 300.1 422.2 299.9 420.9 299.7 419.6 299.5 418.4 299.4 417.1 299.2 415.8 299.1 414.6 299 413.3 299 412 298.9 410.8 298.9 409.5 298.9 408.2 298.9 406.9 298.9 405.7 298.9 404.4 299 403.1 299 401.8 299.1 400.6 299.3 399.3 299.4 398 299.5 396.7 299.7 395.5 299.9 394.2 300.1 393 300.3 391.7 300.6 390.4 300.8 389.2 301.1 388 301.4 386.7 301.7 385.5 302 384.2 302.4 383 302.7 381.8 303.1 380.6 303.5 379.4 304 378.2 304.4 377 304.8 375.8 305.3 374.6 305.8 373.4 306.3 372.3 306.8 371.1 307.4 369.9 307.9 368.8 308.5 367.7 309.1 366.5 309.7 365.4 310.3 364.3 311 363.2 311.6 362.1 312.3 361 313 360 313.7 358.9 314.4 357.9 315.1 356.8 315.9 355.8 316.6 354.8 317.4 353.8 318.2 352.8 319 351.8 319.8 350.9 320.6 349.9 321.5 349 322.3 348 323.2 347.1 324.1 346.2 325 345.3 325.9Z"/></clipPath></defs><path d="M163.7 173.1 167.5 169.5 171.3 166.1 175.1 162.7 179 159.3 182.9 156.1 186.9 152.8 190.9 149.6 195 146.5 199 143.4 203.2 140.4 207.3 137.5 211.5 134.5 215.8 131.7 220 128.9 224.3 126.2 228.7 123.5 233 120.9 237.5 118.3 241.9 115.8 246.4 113.4 250.9 111 255.4 108.7 259.9 106.4 264.5 104.2 269.1 102.1 273.8 100 278.4 98 283.1 96 287.8 94.1 292.6 92.3 297.3 90.5 302.1 88.8 306.9 87.2 311.7 85.6 316.6 84.1 321.5 82.6 326.3 81.2 331.2 79.9 336.1 78.6 341.1 77.4 346 76.3 351 75.2 356 74.2 361 73.2 366 72.4 371 71.5 376 70.8 381 70.1 386.1 69.5 391.1 68.9 396.2 68.5 401.3 68 406.3 67.7 411.4 67.4 416.5 67.2 421.6 67 426.7 67 431.8 66.9 436.9 67 442 67.1 447.1 67.3 452.2 67.5 457.3 67.9 462.3 68.3 467.4 68.7 472.5 69.2 477.6 69.8 482.7 70.5 487.7 71.2 492.8 72 497.8 72.9 502.9 73.8 507.9 74.9 512.9 75.9 518 77.1 522.9 78.3 527.9 79.6 532.9 80.9 537.8 82.4 542.8 83.8 547.7 85.4 552.6 87 557.5 88.7 562.3 90.5 567.2 92.4 572 94.3 576.8 96.2 581.6 98.3 586.3 100.4 591 102.6 595.7 104.8 600.4 107.2 605 109.6 609.6 112 614.2 114.6 618.7 117.2 623.3 119.8 627.7 122.6 632.2 125.4 636.6 128.2 640.9 131.2 645.3 134.2 649.6 137.3 653.8 140.4 658 143.6 662.2 146.9 666.3 150.2 670.4 153.7 674.4 157.1 678.4 160.7 682.3 164.3 686.2 167.9 690.1 171.7 693.9 175.5 697.6 179.3 701.3 183.3 704.9 187.2 708.5 191.3 712 195.4 715.4 199.6 718.8 203.8 722.2 208.1 725.4 212.5 728.6 216.9 731.8 221.3 734.9 225.9 737.9 230.5 740.8 235.1 743.7 239.8 746.5 244.6 749.2 249.4 751.9 254.2 754.5 259.1 757 264.1 759.4 269.1 761.8 274.2 764.1 279.3 766.3 284.4 768.4 289.7 770.5 294.9 772.4 300.2 774.3 305.6 776.1 310.9 777.8 316.4 779.4 321.8 781 327.3 782.4 332.9 783.8 338.5 785.1 344.1 786.2 349.8 787.3 355.4 788.3 361.2 789.2 366.9 790 372.7 790.7 378.5 791.3 384.3 791.8 390.2 792.2 396.1 792.5 402 792.7 407.9 792.9 413.8 792.9 419.8 792.8 425.8 792.6 431.7 792.3 437.7 791.9 443.8 791.4 449.8 790.7 455.8 790 461.8 789.2 467.9 788.2 473.9 787.2 479.9 786.1 486 784.8 492 783.4 498 782 504 780.4 510 778.7 516 776.9 522 775 527.9 773 533.9 770.8 539.8 768.6 545.7 766.2 551.5 763.8 557.4 761.2 563.2 758.6 569 755.8 574.7 752.9 580.4 749.9 586.1 746.8 591.8 743.6 597.4 740.3 602.9 736.9 608.4 733.4 613.9 729.7 619.3 726 624.6 722.2 629.9 718.3 635.2 469.5 429.5 470.4 428.5 471.2 427.4 472.1 426.4 472.9 425.3 473.7 424.3 474.5 423.2 475.3 422.1 476 421 476.8 419.9 477.5 418.8 478.2 417.7 478.9 416.5 479.5 415.4 480.2 414.2 480.8 413.1 481.4 411.9 482 410.7 482.5 409.5 483.1 408.3 483.6 407.1 484.1 405.9 484.6 404.7 485 403.5 485.5 402.2 485.9 401 486.3 399.7 486.7 398.5 487 397.3 487.3 396 487.7 394.7 488 393.5 488.2 392.2 488.5 391 488.7 389.7 488.9 388.4 489.1 387.1 489.3 385.9 489.4 384.6 489.5 383.3 489.6 382 489.7 380.8 489.8 379.5 489.8 378.2 489.9 376.9 489.8 375.7 489.8 374.4 489.8 373.1 489.7 371.8 489.6 370.6 489.5 369.3 489.4 368.1 489.2 366.8 489.1 365.5 488.9 364.3 488.7 363.1 488.4 361.8 488.2 360.6 487.9 359.4 487.6 358.1 487.3 356.9 487 355.7 486.6 354.5 486.2 353.3 485.9 352.1 485.4 350.9 485 349.7 484.6 348.6 484.1 347.4 483.6 346.3 483.1 345.1 482.6 344 482 342.8 481.5 341.7 480.9 340.6 480.3 339.5 479.7 338.4 479 337.4 478.4 336.3 477.7 335.2 477 334.2 476.3 333.2 475.6 332.2 474.9 331.1 474.1 330.1 473.3 329.2 472.6 328.2 471.8 327.2 470.9 326.3 470.1 325.4 469.3 324.4 468.4 323.5 467.5 322.6 466.6 321.8 465.7 320.9 464.8 320.1 463.9 319.2 462.9 318.4 462 317.6 461 316.8 460 316 459 315.3 458 314.5 457 313.8 456 313.1 454.9 312.4 453.9 311.7 452.8 311 451.7 310.4 450.6 309.8 449.5 309.2 448.4 308.6 447.3 308 446.2 307.4 445.1 306.9 443.9 306.3 442.8 305.8 441.6 305.3 440.4 304.9 439.3 304.4 438.1 304 436.9 303.5 435.7 303.1 434.5 302.7 433.3 302.4 432.1 302 430.8 301.7 429.6 301.4 428.4 301.1 427.1 300.8 425.9 300.5 424.7 300.3 423.4 300.1 422.2 299.9 420.9 299.7 419.6 299.5 418.4 299.4 417.1 299.2 415.8 299.1 414.6 299 413.3 299 412 298.9 410.8 298.9 409.5 298.9 408.2 298.9 406.9 298.9 405.7 298.9 404.4 299 403.1 299 401.8 299.1 400.6 299.3 399.3 299.4 398 299.5 396.7 299.7 395.5 299.9 394.2 300.1 393 300.3 391.7 300.6 390.4 300.8 389.2 301.1 388 301.4 386.7 301.7 385.5 302 384.2 302.4 383 302.7 381.8 303.1 380.6 303.5 379.4 304 378.2 304.4 377 304.8 375.8 305.3 374.6 305.8 373.4 306.3 372.3 306.8 371.1 307.4 369.9 307.9 368.8 308.5 367.7 309.1 366.5 309.7 365.4 310.3 364.3 311 363.2 311.6 362.1 312.3 361 313 360 313.7 358.9 314.4 357.9 315.1 356.8 315.9 355.8 316.6 354.8 317.4 353.8 318.2 352.8 319 351.8 319.8 350.9 320.6 349.9 321.5 349 322.3 348 323.2 347.1 324.1 346.2 325 345.3 325.9Z" fill="#f2cf8e"/><g clip-path="url(#mc)"><path d="M753.1 374.6 753.8 380.4 754.5 386.2 755 392.1 755.3 397.9 755.6 403.8 755.8 409.7 755.9 415.6 755.8 421.6 755.7 427.5 755.4 433.5 755 439.5 754.5 445.4 753.9 451.4 753.1 457.4 752.3 463.4 751.3 469.4 750.2 475.4 749 481.4 747.7 487.3 746.3 493.3 744.7 499.3 743 505.2 741.2 511.1 739.3 517 737.3 522.9 735.2 528.8 732.9 534.6 730.5 540.4 728 546.2 725.4 551.9 722.7 557.6 719.8 563.3 716.9 568.9 713.8 574.4 710.6 580 707.3 585.4 703.9 590.9 700.3 596.2 696.7 601.6 692.9 606.8 689.1 612 685.1 617.1 681 622.2 676.9 627.2 672.6 632.1 668.2 637 663.7 641.8 659.1 646.5 654.4 651.1 649.7 655.6 644.8 660.1 639.8 664.4 634.8 668.7 629.6 672.9 624.4 677 619.1 680.9 613.7 684.8 608.2 688.6 602.7 692.3 597 695.9 591.3 699.4 585.6 702.8 579.7 706.1 573.8 709.2 567.8 712.3 561.8 715.2 555.7 718 549.6 720.7 543.4 723.3 537.1 725.8 530.8 728.2 524.5 730.4 518.1 732.5 511.7 734.5 505.2 736.4 498.7 738.1 492.2 739.7 485.6 741.2 479.1 742.6 472.5 743.8 465.9 744.9 459.2 745.9 452.6 746.8 445.9 747.5 439.3 748.1 432.6 748.6 425.9 748.9 419.3 749.1 412.6 749.2 405.9 749.2 399.3 749 392.7 748.7 386.1 748.3 379.5 747.7 372.9 747 366.3 746.2 359.8 745.3 353.3 744.3 346.9 743.1 340.5 741.8 334.1 740.4 327.7 738.9 321.4 737.2 315.2 735.4 309 733.6 302.8 731.6 296.7 729.5 290.7 727.2 284.7 724.9 278.8 722.4 272.9 719.9 267.1 717.2 261.3 714.5 255.7 711.6 250.1 708.6 244.6 705.6 239.1 702.4 233.7 699.1 228.4 695.8 223.2 692.3 218.1 688.8 213 685.1 208 681.4 203.2 677.6 198.4 673.7 193.7 669.8 189 665.7 184.5 661.6 180.1 657.4 175.7 653.1 171.5 648.8 167.3 644.4 163.2 639.9 159.3 635.4 155.4 630.8 151.7 626.1 148 621.4 144.4 616.6 141 611.8 137.6 606.9 134.3 602 131.2 597 128.1 591.9 125.1 586.9 122.3 581.8 119.5 576.6 116.9 571.4 114.4 566.2 111.9 560.9 109.6 555.6 107.4 550.3 105.2 545 103.2 539.6 101.3 534.2 99.5 528.8 97.8 523.3 96.2 517.9 94.7 512.4 93.3 506.9 92 501.4 90.8 495.9 89.7 490.4 88.7 484.9 87.8 479.3 87 473.8 86.4 468.3 85.8 462.7 85.3 457.2 84.9 451.7 84.6 446.1 84.4 440.6 84.4 435.1 84.4 429.6 84.5 424.1 84.7 418.6 85 413.1 85.3 407.7 85.8 402.3 86.4 396.8 87.1 391.4 87.8 386.1 88.7 380.7 89.6 375.4 90.6 370.1 91.7 364.8 92.9 359.5 94.2 354.3 95.6 349.1 97.1 343.9 98.6 338.8 100.2 333.7 101.9 328.6 103.7 323.6 105.6 318.6 107.5 313.6 109.5 308.7 111.6 303.8 113.8 299 116.1 294.2 118.4 289.4 120.8 284.7 123.3 280 125.8 275.4 128.4 270.8 131.1 266.3 133.9 261.8 136.7 257.3 139.6 252.9 142.5 248.6 145.5 244.3 148.6 240.1 151.8 235.9 155 231.7 158.2 227.6 161.6 223.6 165 219.6 168.4 215.7 171.9 211.9 175.5 208 179.1 204.3 182.8 200.6 186.5 197 190.3 193.4 194.1 189.9 198 186.4 201.9 183 205.9 179.7 209.9 176.4 213.9 173.2 218.1 170 222.2 167 226.4 163.9 230.7 161 235 158.1 239.3 155.3 243.7 152.5 248.1 149.8 252.5 147.2 257 144.6 261.5 142.1 266.1 139.7 270.6 137.3 275.3 135 279.9 132.8 284.6 130.6 289.3 128.5 294.1 126.5 298.8 124.6 303.6 122.7 308.5 120.9 313.3 119.2 318.2 117.5 323.1 115.9 328 114.4 332.9 112.9 337.9 111.6 342.9 110.3 347.9 109 352.9 107.9 357.9 106.8 363 105.8 368.1 104.8 373.1 104 378.2 103.2 383.3 102.5 388.4 101.9 393.6 101.3 398.7 100.8 403.8 100.4 409 100.1 414.1 99.8 419.3 99.6 424.5 99.5 429.6 99.5 434.8 99.6 440 99.7 445.1 99.9 450.3 100.2 455.4 100.5 460.6 101 465.8 101.5 470.9 102.1 476 102.8 481.2 103.5 486.3 104.3 491.4 105.2 496.5 106.2 501.6 107.3 506.7 108.4 511.7 109.7 516.8 111 521.8 112.3 526.8 113.8 531.8 115.3 536.7 116.9 541.7 118.6 546.6 120.4 551.5 122.2 556.4 124.2 561.2 126.2 566 128.2 570.8 130.4 575.6 132.6 580.3 135 585 137.3 589.6 139.8 594.2 142.4 598.8 145 603.4 147.7 607.9 150.5 612.3 153.3 616.8 156.2 621.2 159.2 625.5 162.3 629.8 165.5 634 168.7 638.2 172 642.4 175.4 646.4 178.8 650.5 182.4 654.5 186 658.4 189.6 662.3 193.4 666.1 197.2 669.8 201.1 673.5 205 677.2 209 680.7 213.1 684.2 217.3 687.7 221.5 691 225.8 694.3 230.1 697.6 234.6 700.7 239 703.8 243.6 706.8 248.2 709.7 252.9 712.6 257.6 715.4 262.4 718.1 267.2 720.7 272.1 723.2 277.1 725.7 282.1 728 287.2 730.3 292.3 732.5 297.5 734.6 302.7 736.6 308 738.5 313.3 740.3 318.7 742 324.1 743.7 329.6 745.2 335.1 746.6 340.6 748 346.2 749.2 351.8 750.3 357.5 751.4 363.2 752.3 368.9 753.1 374.6ZM749.1 374.7 748.3 369 747.4 363.4 746.4 357.8 745.3 352.2 744.1 346.6 742.8 341.1 741.3 335.6 739.8 330.2 738.2 324.8 736.5 319.4 734.7 314.1 732.9 308.9 730.9 303.6 728.8 298.5 726.7 293.3 724.4 288.3 722.1 283.3 719.7 278.3 717.2 273.4 714.6 268.5 712 263.7 709.2 259 706.4 254.3 703.5 249.7 700.6 245.1 697.5 240.6 694.4 236.2 691.2 231.8 688 227.5 684.6 223.3 681.2 219.1 677.8 215 674.3 210.9 670.7 206.9 667 203 663.3 199.2 659.5 195.4 655.7 191.7 651.8 188.1 647.9 184.5 643.9 181 639.9 177.6 635.8 174.3 631.6 171 627.4 167.8 623.2 164.7 618.9 161.6 614.6 158.6 610.2 155.7 605.8 152.9 601.3 150.1 596.8 147.5 592.3 144.9 587.7 142.3 583.1 139.9 578.5 137.5 573.8 135.2 569.1 133 564.4 130.9 559.6 128.8 554.8 126.8 550 124.9 545.2 123.1 540.3 121.3 535.4 119.6 530.5 118 525.6 116.5 520.6 115.1 515.6 113.7 510.7 112.4 505.7 111.2 500.6 110.1 495.6 109 490.6 108.1 485.5 107.2 480.4 106.3 475.4 105.6 470.3 104.9 465.2 104.3 460.1 103.8 455 103.4 449.9 103 444.8 102.7 439.6 102.5 434.5 102.4 429.4 102.3 424.3 102.4 419.2 102.5 414.1 102.6 409 102.9 403.9 103.2 398.8 103.6 393.7 104.1 388.6 104.7 383.6 105.3 378.5 106 373.5 106.8 368.5 107.6 363.4 108.5 358.4 109.5 353.4 110.6 348.5 111.7 343.5 113 338.6 114.3 333.7 115.6 328.8 117 323.9 118.6 319.1 120.1 314.2 121.8 309.4 123.5 304.7 125.3 299.9 127.1 295.2 129.1 290.5 131.1 285.8 133.1 281.2 135.3 276.6 137.5 272 139.7 267.5 142.1 263 144.5 258.5 147 254 149.5 249.6 152.1 245.3 154.8 241 157.5 236.7 160.3 232.4 163.2 228.2 166.1 224.1 169.1 220 172.2 215.9 175.3 211.9 178.5 207.9 181.7 203.9 185 200.1 188.4 196.2 191.8 192.4 195.3 188.7 198.8 185 202.4 181.4 206.1 177.8 209.8 174.3 213.6 170.8 217.4 167.4 221.3 164.1 225.2 160.8 229.2 157.6 233.3 154.4 237.4 151.3 241.5 148.2 245.7 145.2 250 142.3 254.3 139.5 258.6 136.7 263 134 267.5 131.3 272 128.7 276.5 126.2 281.1 123.8 285.7 121.4 290.4 119.1 295.1 116.9 299.8 114.7 304.6 112.7 309.5 110.7 314.4 108.7 319.3 106.9 324.2 105.1 329.2 103.5 334.2 101.9 339.3 100.4 344.3 98.9 349.5 97.6 354.6 96.3 359.8 95.1 365 94 370.2 93 375.4 92.1 380.7 91.3 386 90.5 391.3 89.9 396.7 89.3 402 88.9 407.4 88.5 412.8 88.2 418.2 88 423.6 87.9 429.1 87.9 434.5 88 440 88.2 445.4 88.5 450.9 88.9 456.4 89.4 461.8 89.9 467.3 90.6 472.8 91.4 478.3 92.3 483.7 93.3 489.2 94.4 494.6 95.6 500.1 96.8 505.5 98.2 510.9 99.7 516.4 101.3 521.7 103 527.1 104.8 532.5 106.7 537.8 108.7 543.1 110.8 548.4 113 553.6 115.3 558.9 117.8 564.1 120.3 569.2 122.9 574.4 125.6 579.4 128.5 584.5 131.4 589.5 134.4 594.5 137.5 599.4 140.8 604.2 144.1 609.1 147.5 613.8 151.1 618.5 154.7 623.2 158.4 627.8 162.3 632.4 166.2 636.8 170.2 641.2 174.3 645.6 178.5 649.9 182.8 654.1 187.2 658.2 191.7 662.3 196.3 666.3 200.9 670.2 205.7 674 210.5 677.8 215.4 681.4 220.4 685 225.5 688.5 230.6 691.9 235.9 695.2 241.2 698.4 246.6 701.6 252 704.6 257.6 707.5 263.2 710.3 268.8 713.1 274.6 715.7 280.4 718.2 286.2 720.6 292.1 722.9 298.1 725.1 304.1 727.2 310.2 729.1 316.3 731 322.5 732.7 328.7 734.4 335 735.9 341.3 737.3 347.7 738.5 354 739.7 360.4 740.7 366.9 741.6 373.3 742.4 379.8 743.1 386.3 743.6 392.9 744 399.4 744.3 406 744.5 412.5 744.5 419.1 744.4 425.7 744.2 432.3 743.9 438.9 743.4 445.4 742.8 452 742.1 458.6 741.2 465.1 740.3 471.6 739.2 478.2 737.9 484.6 736.6 491.1 735.1 497.5 733.5 504 731.8 510.3 730 516.7 728 523 725.9 529.2 723.7 535.5 721.4 541.6 719 547.7 716.4 553.8 713.7 559.8 710.9 565.8 708 571.7 705 577.5 701.9 583.3 698.7 589 695.3 594.6 691.9 600.2 688.4 605.6 684.7 611.1 681 616.4 677.1 621.6 673.2 626.8 669.2 631.9 665 636.9 660.8 641.8 656.5 646.6 652.1 651.3 647.7 655.9 643.1 660.5 638.5 664.9 633.8 669.2 629 673.5 624.1 677.6 619.2 681.6 614.2 685.5 609.1 689.3 604 693.1 598.8 696.7 593.6 700.1 588.3 703.5 582.9 706.8 577.5 710 572.1 713 566.6 715.9 561 718.8 555.4 721.5 549.8 724.1 544.1 726.5 538.5 728.9 532.7 731.1 527 733.3 521.2 735.3 515.4 737.2 509.6 738.9 503.7 740.6 497.9 742.1 492 743.6 486.1 744.9 480.2 746.1 474.3 747.2 468.4 748.1 462.4 749 456.5 749.7 450.6 750.3 444.7 750.8 438.8 751.2 432.9 751.5 427 751.7 421.1 751.7 415.2 751.7 409.4 751.5 403.6 751.3 397.8 750.9 392 750.4 386.2 749.8 380.5 749.1 374.7ZM760.2 374.5 760.9 380.4 761.5 386.3 762.1 392.2 762.5 398.2 762.8 404.2 763 410.3 763.1 416.3 763 422.4 762.9 428.4 762.6 434.5 762.2 440.6 761.7 446.7 761.1 452.9 760.4 459 759.5 465.1 758.6 471.2 757.5 477.3 756.3 483.4 754.9 489.6 753.5 495.7 751.9 501.7 750.2 507.8 748.4 513.9 746.5 519.9 744.4 525.9 742.2 531.9 739.9 537.9 737.5 543.8 735 549.7 732.3 555.6 729.5 561.4 726.6 567.2 723.6 572.9 720.5 578.6 717.2 584.3 713.8 589.9 710.4 595.4 706.8 600.9 703.1 606.4 699.2 611.7 695.3 617.1 691.3 622.3 687.1 627.5 682.8 632.6 678.5 637.7 674 642.6 669.4 647.5 664.7 652.3 660 657 655.1 661.7 650.1 666.2 645 670.7 639.9 675.1 634.6 679.4 629.3 683.6 623.8 687.6 618.3 691.6 612.7 695.5 607.1 699.3 601.3 703 595.5 706.5 589.6 710 583.6 713.4 577.6 716.6 571.5 719.7 565.3 722.7 559.1 725.6 552.8 728.4 546.4 731 540.1 733.6 533.6 736 527.1 738.3 520.6 740.4 514 742.4 507.4 744.4 500.8 746.1 494.1 747.8 487.4 749.3 480.7 750.7 473.9 752 467.2 753.1 460.4 754.1 453.6 755 446.8 755.7 440 756.3 433.2 756.8 426.3 757.1 419.5 757.4 412.7 757.4 405.9 757.4 399.1 757.2 392.3 756.9 385.6 756.5 378.8 755.9 372.1 755.2 365.4 754.4 358.8 753.4 352.1 752.3 345.5 751.1 339 749.8 332.4 748.3 326 746.8 319.5 745.1 313.1 743.3 306.8 741.3 300.5 739.3 294.3 737.1 288.1 734.8 282 732.4 275.9 729.9 269.9 727.3 264 724.5 258.1 721.7 252.4 718.8 246.6 715.7 241 712.6 235.4 709.3 230 706 224.6 702.5 219.2 699 214 695.4 208.8 691.6 203.8 687.8 198.8 683.9 193.9 680 189.1 675.9 184.4 671.7 179.8 667.5 175.2 663.2 170.8 658.9 166.5 654.4 162.2 649.9 158.1 645.3 154.1 640.7 150.1 636 146.3 631.2 142.6 626.3 138.9 621.5 135.4 616.5 132 611.5 128.7 606.5 125.5 601.4 122.4 596.2 119.3 591.1 116.5 585.8 113.7 580.6 111 575.3 108.4 569.9 105.9 564.5 103.6 559.1 101.3 553.7 99.1 548.2 97.1 542.7 95.2 537.2 93.3 531.7 91.6 526.1 90 520.6 88.5 515 87.1 509.4 85.7 503.8 84.5 498.1 83.5 492.5 82.5 486.9 81.6 481.2 80.8 475.6 80.1 469.9 79.5 464.3 79 458.6 78.7 453 78.4 447.3 78.2 441.7 78.1 436.1 78.2 430.5 78.3 424.9 78.5 419.3 78.8 413.7 79.2 408.2 79.7 402.6 80.3 397.1 81 391.6 81.8 386.1 82.7 380.6 83.6 375.2 84.7 369.8 85.8 364.4 87.1 359.1 88.4 353.7 89.8 348.5 91.3 343.2 92.9 338 94.5 332.8 96.3 327.6 98.1 322.5 100 317.4 102 312.3 104.1 307.3 106.2 302.4 108.5 297.4 110.8 292.5 113.1 287.7 115.6 282.9 118.1 278.1 120.7 273.4 123.4 268.8 126.1 264.2 128.9 259.6 131.8 255.1 134.8 250.6 137.8 246.2 140.9 241.8 144 237.5 147.2 233.2 150.5 229 153.8 224.9 157.2 220.8 160.7 216.7 164.2 212.8 167.8 208.8 171.4 205 175.1 201.1 178.8 197.4 182.6 193.7 186.4 190.1 190.3 186.5 194.3 183 198.3 179.5 202.3 176.1 206.4 172.8 210.6 169.5 214.8 166.3 219 163.2 223.3 160.1 227.6 157.1 232 154.2 236.4 151.3 240.8 148.5 245.3 145.7 249.8 143.1 254.4 140.5 259 137.9 263.6 135.5 268.3 133 273 130.7 277.7 128.5 282.5 126.3 287.3 124.1 292.1 122.1 296.9 120.1 301.8 118.2 306.7 116.4 311.7 114.6 316.6 112.9 321.6 111.3 326.6 109.7 331.7 108.3 336.7 106.9 341.8 105.5 346.9 104.3 352 103.1 357.1 102 362.2 101 367.4 100 372.5 99.2 377.7 98.4 382.9 97.6 388.1 97 393.3 96.4 398.6 95.9 403.8 95.5 409 95.2 414.3 94.9 419.5 94.7 424.8 94.6 430 94.6 435.3 94.6 440.5 94.8 445.8 95 451 95.2 456.3 95.6 461.5 96 466.8 96.6 472 97.2 477.2 97.8 482.5 98.6 487.7 99.4 492.9 100.4 498.1 101.4 503.2 102.4 508.4 103.6 513.6 104.8 518.7 106.1 523.8 107.5 528.9 109 534 110.6 539 112.2 544.1 113.9 549.1 115.7 554.1 117.6 559 119.5 564 121.6 568.9 123.7 573.7 125.9 578.6 128.1 583.4 130.5 588.2 132.9 592.9 135.4 597.6 138 602.3 140.7 606.9 143.4 611.5 146.2 616.1 149.1 620.6 152.1 625.1 155.1 629.5 158.3 633.9 161.5 638.2 164.8 642.5 168.1 646.7 171.5 650.9 175.1 655 178.6 659.1 182.3 663.1 186 667 189.8 670.9 193.7 674.8 197.6 678.5 201.7 682.2 205.7 685.9 209.9 689.5 214.1 693 218.4 696.4 222.8 699.8 227.2 703.1 231.7 706.3 236.3 709.5 240.9 712.6 245.6 715.6 250.4 718.5 255.2 721.3 260 724.1 265 726.8 270 729.4 275 731.9 280.1 734.3 285.3 736.6 290.5 738.9 295.8 741 301.1 743.1 306.5 745.1 311.9 746.9 317.4 748.7 322.9 750.4 328.5 752 334.1 753.4 339.8 754.8 345.4 756.1 351.2 757.3 356.9 758.3 362.8 759.3 368.6 760.2 374.5ZM756.1 374.6 755.3 368.8 754.4 363 753.3 357.2 752.2 351.5 750.9 345.9 749.6 340.2 748.1 334.7 746.5 329.1 744.9 323.6 743.1 318.1 741.3 312.7 739.4 307.4 737.3 302 735.2 296.8 733 291.6 730.7 286.4 728.3 281.3 725.9 276.2 723.3 271.2 720.7 266.3 717.9 261.4 715.1 256.6 712.2 251.8 709.3 247.1 706.2 242.4 703.1 237.9 699.9 233.3 696.7 228.9 693.3 224.5 689.9 220.2 686.5 215.9 682.9 211.7 679.3 207.6 675.7 203.6 671.9 199.6 668.2 195.7 664.3 191.9 660.4 188.1 656.4 184.4 652.4 180.8 648.3 177.2 644.2 173.7 640 170.3 635.8 167 631.5 163.8 627.2 160.6 622.8 157.5 618.4 154.5 613.9 151.5 609.4 148.6 604.9 145.9 600.3 143.1 595.7 140.5 591 137.9 586.3 135.4 581.6 133 576.9 130.7 572.1 128.5 567.2 126.3 562.4 124.2 557.5 122.2 552.6 120.2 547.7 118.4 542.7 116.6 537.7 114.9 532.7 113.3 527.7 111.7 522.6 110.3 517.6 108.9 512.5 107.6 507.4 106.4 502.3 105.2 497.2 104.1 492 103.2 486.9 102.2 481.7 101.4 476.6 100.7 471.4 100 466.2 99.4 461 98.9 455.8 98.4 450.6 98.1 445.4 97.8 440.2 97.6 435 97.5 429.8 97.4 424.6 97.4 419.4 97.5 414.2 97.7 409 98 403.8 98.3 398.6 98.7 393.5 99.2 388.3 99.8 383.2 100.4 378 101.1 372.9 101.9 367.8 102.8 362.7 103.7 357.6 104.7 352.5 105.8 347.4 107 342.4 108.2 337.4 109.6 332.4 110.9 327.4 112.4 322.5 113.9 317.5 115.5 312.6 117.2 307.7 119 302.9 120.8 298 122.7 293.2 124.6 288.4 126.7 283.7 128.8 279 130.9 274.3 133.2 269.6 135.5 265 137.9 260.4 140.3 255.9 142.8 251.4 145.4 246.9 148.1 242.4 150.8 238 153.6 233.7 156.4 229.4 159.3 225.1 162.3 220.8 165.3 216.6 168.5 212.5 171.6 208.4 174.9 204.3 178.2 200.3 181.5 196.4 184.9 192.5 188.4 188.6 192 184.8 195.6 181.1 199.2 177.4 202.9 173.7 206.7 170.1 210.6 166.6 214.4 163.1 218.4 159.7 222.4 156.4 226.5 153.1 230.6 149.8 234.7 146.6 239 143.5 243.2 140.5 247.6 137.5 251.9 134.6 256.4 131.8 260.8 129 265.4 126.3 269.9 123.6 274.6 121.1 279.2 118.6 283.9 116.1 288.7 113.8 293.5 111.5 298.3 109.3 303.2 107.2 308.1 105.2 313.1 103.2 318.1 101.3 323.1 99.5 328.2 97.8 333.3 96.2 338.4 94.6 343.6 93.1 348.8 91.7 354.1 90.4 359.3 89.2 364.6 88.1 369.9 87.1 375.3 86.1 380.7 85.2 386.1 84.5 391.5 83.8 396.9 83.2 402.4 82.7 407.9 82.3 413.4 82 418.9 81.8 424.4 81.7 430 81.7 435.5 81.8 441.1 82 446.6 82.2 452.2 82.6 457.8 83.1 463.4 83.7 469 84.4 474.6 85.2 480.1 86 485.7 87 491.3 88.1 496.9 89.3 502.4 90.6 508 92 513.5 93.5 519 95.1 524.5 96.9 530 98.7 535.5 100.6 540.9 102.6 546.4 104.8 551.8 107 557.1 109.4 562.5 111.8 567.8 114.4 573.1 117 578.3 119.8 583.5 122.7 588.7 125.6 593.8 128.7 598.9 131.9 603.9 135.2 608.9 138.6 613.8 142.1 618.7 145.7 623.5 149.4 628.3 153.2 633 157.1 637.6 161.1 642.2 165.1 646.7 169.3 651.2 173.6 655.6 178 659.9 182.5 664.1 187 668.3 191.7 672.4 196.4 676.4 201.3 680.3 206.2 684.2 211.2 687.9 216.3 691.6 221.5 695.2 226.8 698.7 232.1 702 237.5 705.3 243 708.6 248.6 711.7 254.3 714.7 260 717.6 265.8 720.4 271.6 723 277.5 725.6 283.5 728.1 289.6 730.5 295.7 732.7 301.8 734.9 308 736.9 314.3 738.8 320.6 740.6 327 742.2 333.4 743.8 339.8 745.2 346.3 746.5 352.8 747.7 359.4 748.8 366 749.7 372.6 750.5 379.2 751.2 385.9 751.8 392.5 752.2 399.2 752.5 405.9 752.7 412.6 752.7 419.4 752.6 426.1 752.4 432.8 752.1 439.6 751.6 446.3 751 453 750.3 459.7 749.4 466.4 748.4 473.1 747.3 479.8 746 486.4 744.7 493 743.2 499.6 741.5 506.2 739.8 512.7 737.9 519.2 735.9 525.6 733.7 532 731.5 538.4 729.1 544.7 726.6 550.9 724 557.1 721.3 563.3 718.4 569.4 715.5 575.4 712.4 581.4 709.2 587.3 705.9 593.1 702.5 598.9 698.9 604.5 695.3 610.1 691.6 615.7 687.7 621.1 683.8 626.5 679.8 631.8 675.6 637 671.4 642.1 667.1 647.1 662.7 652 658.2 656.8 653.6 661.5 649 666.1 644.2 670.7 639.4 675.1 634.5 679.4 629.5 683.6 624.5 687.7 619.4 691.7 614.2 695.6 608.9 699.4 603.6 703.1 598.2 706.6 592.8 710.1 587.3 713.4 581.8 716.6 576.2 719.7 570.6 722.7 564.9 725.6 559.2 728.3 553.5 731 547.7 733.5 541.8 735.9 536 738.2 530.1 740.3 524.2 742.4 518.3 744.3 512.3 746.1 506.3 747.8 500.3 749.3 494.3 750.8 488.3 752.1 482.3 753.3 476.2 754.4 470.2 755.4 464.1 756.2 458.1 757 452 757.6 446 758.1 440 758.5 433.9 758.7 427.9 758.9 421.9 758.9 415.9 758.9 409.9 758.7 404 758.4 398.1 758 392.1 757.5 386.3 756.9 380.4 756.1 374.6ZM767.2 374.3 768 380.3 768.7 386.3 769.2 392.4 769.7 398.5 770 404.7 770.2 410.8 770.3 417 770.3 423.2 770.1 429.4 769.9 435.6 769.5 441.8 769 448 768.4 454.3 767.7 460.5 766.8 466.8 765.8 473 764.7 479.3 763.5 485.5 762.2 491.8 760.7 498 759.1 504.2 757.4 510.4 755.6 516.6 753.6 522.8 751.5 528.9 749.3 535 747 541.1 744.5 547.2 741.9 553.2 739.2 559.2 736.4 565.2 733.4 571.1 730.4 577 727.2 582.8 723.9 588.6 720.5 594.3 716.9 600 713.2 605.6 709.5 611.2 705.6 616.7 701.5 622.1 697.4 627.5 693.2 632.8 688.8 638.1 684.4 643.2 679.8 648.3 675.1 653.3 670.4 658.2 665.5 663.1 660.5 667.8 655.4 672.5 650.3 677 645 681.5 639.6 685.9 634.2 690.2 628.6 694.4 623 698.4 617.3 702.4 611.5 706.3 605.6 710.1 599.6 713.7 593.6 717.3 587.5 720.7 581.3 724 575.1 727.2 568.8 730.3 562.4 733.2 556 736.1 549.5 738.8 543 741.4 536.4 743.8 529.8 746.2 523.1 748.4 516.4 750.4 509.6 752.4 502.9 754.2 496 755.9 489.2 757.5 482.3 758.9 475.4 760.2 468.5 761.3 461.6 762.3 454.6 763.2 447.7 764 440.7 764.6 433.7 765.1 426.8 765.4 419.8 765.6 412.8 765.7 405.9 765.7 398.9 765.5 392 765.2 385.1 764.7 378.2 764.1 371.3 763.4 364.5 762.5 357.7 761.6 350.9 760.4 344.2 759.2 337.5 757.8 330.8 756.3 324.2 754.7 317.6 753 311.1 751.1 304.6 749.1 298.2 747 291.8 744.8 285.5 742.4 279.3 740 273.1 737.4 267 734.7 260.9 731.9 254.9 729 249 726 243.2 722.8 237.4 719.6 231.8 716.3 226.2 712.8 220.7 709.3 215.2 705.7 209.9 702 204.6 698.2 199.5 694.3 194.4 690.3 189.4 686.2 184.5 682 179.7 677.8 175 673.5 170.4 669.1 165.9 664.6 161.5 660 157.2 655.4 153 650.7 148.8 646 144.8 641.1 140.9 636.3 137.1 631.3 133.5 626.3 129.9 621.3 126.4 616.2 123 611 119.7 605.8 116.6 600.5 113.5 595.2 110.6 589.9 107.8 584.5 105 579.1 102.4 573.6 99.9 568.1 97.5 562.6 95.2 557.1 93 551.5 91 545.9 89 540.3 87.2 534.6 85.4 528.9 83.8 523.2 82.2 517.5 80.8 511.8 79.5 506.1 78.3 500.4 77.2 494.6 76.2 488.9 75.3 483.1 74.5 477.3 73.9 471.6 73.3 465.8 72.8 460.1 72.4 454.3 72.2 448.6 72 442.8 71.9 437.1 72 431.4 72.1 425.7 72.3 420 72.7 414.3 73.1 408.6 73.6 403 74.3 397.3 75 391.7 75.8 386.2 76.7 380.6 77.7 375.1 78.8 369.6 80 364.1 81.2 358.6 82.6 353.2 84 347.8 85.6 342.5 87.2 337.1 88.9 331.9 90.7 326.6 92.6 321.4 94.5 316.2 96.5 311.1 98.7 306 100.9 300.9 103.1 295.9 105.5 290.9 107.9 286 110.4 281.1 113 276.3 115.7 271.5 118.4 266.8 121.2 262.1 124 257.4 127 252.8 130 248.3 133.1 243.8 136.2 239.3 139.4 235 142.7 230.6 146 226.4 149.4 222.1 152.9 218 156.4 213.9 160 209.8 163.6 205.8 167.3 201.9 171.1 198 174.9 194.2 178.7 190.4 182.6 186.7 186.6 183.1 190.6 179.5 194.7 176 198.8 172.6 203 169.2 207.2 165.9 211.5 162.6 215.8 159.4 220.1 156.3 224.5 153.3 229 150.3 233.5 147.3 238 144.5 242.5 141.7 247.1 139 251.8 136.3 256.5 133.8 261.2 131.3 265.9 128.8 270.7 126.4 275.5 124.1 280.4 121.9 285.2 119.8 290.1 117.7 295.1 115.7 300 113.7 305 111.9 310.1 110.1 315.1 108.3 320.2 106.7 325.3 105.1 330.4 103.6 335.5 102.2 340.7 100.9 345.8 99.6 351 98.4 356.2 97.3 361.5 96.2 366.7 95.2 371.9 94.4 377.2 93.5 382.5 92.8 387.8 92.1 393.1 91.6 398.4 91.1 403.7 90.6 409 90.3 414.4 90 419.7 89.8 425 89.7 430.4 89.7 435.7 89.7 441.1 89.8 446.4 90 451.8 90.3 457.1 90.7 462.5 91.1 467.8 91.7 473.1 92.3 478.4 93 483.7 93.7 489 94.6 494.3 95.5 499.6 96.5 504.9 97.6 510.1 98.8 515.4 100 520.6 101.3 525.8 102.7 531 104.2 536.2 105.8 541.3 107.5 546.4 109.2 551.5 111 556.6 112.9 561.7 114.9 566.7 117 571.7 119.1 576.7 121.3 581.6 123.6 586.5 126 591.4 128.5 596.2 131 601 133.6 605.8 136.3 610.5 139.1 615.2 142 619.8 144.9 624.4 147.9 629 151 633.5 154.2 637.9 157.5 642.4 160.8 646.7 164.2 651 167.7 655.3 171.3 659.5 174.9 663.7 178.6 667.7 182.4 671.8 186.3 675.8 190.2 679.7 194.2 683.5 198.3 687.3 202.5 691 206.7 694.7 211 698.3 215.4 701.8 219.8 705.3 224.3 708.6 228.9 711.9 233.5 715.2 238.2 718.3 243 721.4 247.8 724.4 252.7 727.3 257.7 730.1 262.7 732.9 267.8 735.5 273 738.1 278.2 740.6 283.4 743 288.7 745.3 294.1 747.5 299.5 749.6 305 751.6 310.5 753.6 316.1 755.4 321.7 757.1 327.4 758.7 333.1 760.3 338.9 761.7 344.7 763 350.5 764.2 356.4 765.3 362.3 766.3 368.3 767.2 374.3ZM763.2 374.4 762.3 368.5 761.3 362.6 760.2 356.7 759.1 350.9 757.8 345.1 756.4 339.4 754.9 333.7 753.3 328 751.6 322.4 749.8 316.9 747.9 311.3 745.9 305.9 743.8 300.5 741.6 295.1 739.4 289.8 737 284.5 734.5 279.3 732 274.1 729.4 269.1 726.7 264 723.9 259 721 254.1 718.1 249.3 715 244.5 711.9 239.8 708.7 235.1 705.5 230.5 702.1 226 698.7 221.5 695.3 217.1 691.7 212.8 688.1 208.5 684.4 204.3 680.7 200.2 676.9 196.2 673 192.2 669.1 188.3 665.1 184.5 661 180.7 656.9 177 652.8 173.4 648.6 169.9 644.3 166.4 640 163.1 635.6 159.8 631.2 156.5 626.7 153.4 622.2 150.3 617.7 147.3 613.1 144.4 608.5 141.6 603.8 138.8 599.1 136.1 594.3 133.5 589.5 131 584.7 128.6 579.9 126.2 575 123.9 570.1 121.7 565.1 119.6 560.2 117.5 555.2 115.6 550.1 113.7 545.1 111.9 540 110.2 534.9 108.5 529.8 107 524.7 105.5 519.5 104.1 514.3 102.8 509.1 101.5 503.9 100.4 498.7 99.3 493.5 98.3 488.3 97.4 483 96.5 477.7 95.8 472.5 95.1 467.2 94.5 461.9 93.9 456.6 93.5 451.3 93.1 446.1 92.9 440.8 92.7 435.5 92.5 430.2 92.5 424.9 92.5 419.6 92.6 414.3 92.8 409 93.1 403.8 93.4 398.5 93.8 393.2 94.3 388 94.9 382.7 95.6 377.5 96.3 372.3 97.1 367.1 98 361.9 98.9 356.7 100 351.6 101.1 346.4 102.3 341.3 103.5 336.2 104.9 331.1 106.3 326 107.8 321 109.3 316 111 311 112.7 306 114.4 301.1 116.3 296.1 118.2 291.3 120.2 286.4 122.3 281.6 124.4 276.8 126.6 272 128.9 267.3 131.2 262.6 133.7 257.9 136.1 253.3 138.7 248.7 141.3 244.1 144 239.6 146.8 235.1 149.6 230.7 152.5 226.3 155.5 221.9 158.5 217.6 161.6 213.3 164.7 209.1 168 205 171.3 200.8 174.6 196.7 178 192.7 181.5 188.7 185 184.8 188.6 180.9 192.3 177.1 196 173.3 199.8 169.6 203.6 166 207.5 162.4 211.5 158.8 215.5 155.4 219.6 151.9 223.7 148.6 227.9 145.3 232.1 142 236.4 138.9 240.8 135.8 245.2 132.7 249.6 129.8 254.1 126.8 258.7 124 263.3 121.2 267.9 118.6 272.6 115.9 277.3 113.4 282.1 110.9 287 108.5 291.9 106.2 296.8 103.9 301.7 101.8 306.8 99.7 311.8 97.7 316.9 95.7 322 93.9 327.2 92.1 332.4 90.4 337.6 88.9 342.9 87.3 348.2 85.9 353.5 84.6 358.9 83.3 364.3 82.2 369.7 81.1 375.1 80.1 380.6 79.2 386.1 78.4 391.7 77.7 397.2 77.1 402.8 76.6 408.3 76.2 414 75.9 419.6 75.6 425.2 75.5 430.9 75.5 436.5 75.6 442.2 75.7 447.9 76 453.5 76.4 459.2 76.9 464.9 77.4 470.6 78.1 476.3 78.9 482 79.8 487.7 80.8 493.4 81.9 499.1 83.1 504.8 84.4 510.4 85.8 516.1 87.3 521.7 89 527.3 90.7 532.9 92.5 538.5 94.5 544.1 96.5 549.6 98.7 555.1 101 560.6 103.4 566.1 105.8 571.5 108.4 576.9 111.1 582.2 113.9 587.6 116.9 592.8 119.9 598.1 123 603.3 126.3 608.4 129.6 613.5 133 618.5 136.6 623.5 140.3 628.5 144 633.4 147.9 638.2 151.8 642.9 155.9 647.6 160.1 652.2 164.3 656.8 168.7 661.3 173.2 665.7 177.7 670.1 182.4 674.3 187.1 678.5 192 682.6 196.9 686.6 201.9 690.6 207 694.4 212.2 698.2 217.5 701.9 222.9 705.4 228.3 708.9 233.9 712.3 239.5 715.6 245.2 718.8 250.9 721.8 256.8 724.8 262.7 727.7 268.7 730.4 274.7 733.1 280.8 735.6 287 738.1 293.2 740.4 299.5 742.6 305.8 744.6 312.2 746.6 318.7 748.4 325.2 750.2 331.7 751.8 338.3 753.2 344.9 754.6 351.6 755.8 358.3 756.9 365 757.9 371.8 758.7 378.6 759.4 385.4 760 392.2 760.4 399 760.7 405.9 760.9 412.8 761 419.6 760.9 426.5 760.7 433.4 760.3 440.3 759.9 447.2 759.2 454 758.5 460.9 757.6 467.7 756.6 474.6 755.5 481.4 754.2 488.2 752.8 494.9 751.3 501.7 749.6 508.4 747.8 515 745.9 521.7 743.8 528.3 741.6 534.8 739.3 541.3 736.9 547.8 734.3 554.2 731.7 560.5 728.9 566.8 725.9 573 722.9 579.2 719.8 585.3 716.5 591.3 713.1 597.3 709.6 603.1 706 608.9 702.3 614.7 698.5 620.3 694.5 625.9 690.5 631.4 686.4 636.8 682.2 642.1 677.8 647.3 673.4 652.4 668.9 657.4 664.3 662.3 659.6 667.1 654.8 671.9 650 676.5 645 681 640 685.4 634.9 689.7 629.8 693.9 624.5 698 619.2 701.9 613.9 705.8 608.4 709.5 602.9 713.2 597.4 716.7 591.8 720.1 586.1 723.3 580.4 726.5 574.7 729.5 568.9 732.5 563 735.3 557.1 737.9 551.2 740.5 545.2 742.9 539.3 745.2 533.2 747.4 527.2 749.5 521.1 751.5 515 753.3 508.9 755 502.8 756.6 496.7 758 490.5 759.4 484.3 760.6 478.2 761.7 472 762.6 465.8 763.5 459.6 764.2 453.5 764.9 447.3 765.3 441.1 765.7 435 766 428.8 766.1 422.7 766.2 416.6 766.1 410.5 765.9 404.4 765.6 398.4 765.1 392.3 764.6 386.3 763.9 380.3 763.2 374.4ZM774.3 374.1 775.1 380.2 775.8 386.4 776.4 392.6 776.8 398.8 777.2 405.1 777.4 411.3 777.5 417.6 777.5 424 777.4 430.3 777.2 436.6 776.8 443 776.3 449.3 775.7 455.7 775 462.1 774.1 468.5 773.1 474.9 772 481.2 770.8 487.6 769.4 494 768 500.4 766.4 506.7 764.6 513 762.8 519.4 760.8 525.7 758.7 531.9 756.4 538.2 754 544.4 751.5 550.6 748.9 556.8 746.2 562.9 743.3 569 740.3 575.1 737.2 581.1 733.9 587 730.6 592.9 727.1 598.8 723.5 604.6 719.7 610.4 715.9 616.1 711.9 621.7 707.8 627.2 703.6 632.7 699.3 638.2 694.9 643.5 690.3 648.8 685.7 654 680.9 659.1 676 664.1 671.1 669.1 666 674 660.8 678.7 655.5 683.4 650.1 688 644.7 692.5 639.1 696.9 633.4 701.1 627.7 705.3 621.8 709.4 615.9 713.3 609.9 717.2 603.8 720.9 597.7 724.6 591.4 728.1 585.1 731.4 578.8 734.7 572.3 737.9 565.8 740.9 559.3 743.8 552.6 746.6 546 749.2 539.2 751.7 532.5 754.1 525.6 756.4 518.8 758.5 511.9 760.5 504.9 762.3 498 764.1 491 765.7 483.9 767.1 476.9 768.4 469.8 769.6 462.7 770.6 455.6 771.5 448.5 772.3 441.4 772.9 434.3 773.4 427.2 773.8 420.1 774 412.9 774.1 405.8 774 398.7 773.8 391.7 773.5 384.6 773 377.6 772.4 370.5 771.6 363.6 770.7 356.6 769.7 349.7 768.6 342.8 767.3 335.9 765.9 329.1 764.4 322.4 762.7 315.7 760.9 309 759 302.4 756.9 295.8 754.8 289.3 752.5 282.9 750.1 276.5 747.6 270.2 744.9 264 742.1 257.8 739.3 251.7 736.3 245.7 733.2 239.7 730 233.9 726.7 228.1 723.3 222.4 719.7 216.7 716.1 211.2 712.4 205.8 708.6 200.4 704.7 195.1 700.7 190 696.6 184.9 692.4 179.9 688.2 175 683.8 170.2 679.4 165.5 674.9 160.9 670.3 156.4 665.7 152.1 660.9 147.8 656.1 143.6 651.3 139.5 646.4 135.6 641.4 131.7 636.3 128 631.2 124.3 626 120.8 620.8 117.3 615.5 114 610.2 110.8 604.8 107.7 599.4 104.7 594 101.9 588.5 99.1 582.9 96.4 577.4 93.9 571.8 91.5 566.1 89.2 560.4 86.9 554.7 84.8 549 82.9 543.3 81 537.5 79.2 531.7 77.6 525.9 76 520.1 74.6 514.3 73.3 508.4 72.1 502.6 70.9 496.7 69.9 490.8 69.1 485 68.3 479.1 67.6 473.2 67 467.4 66.6 461.5 66.2 455.6 65.9 449.8 65.8 443.9 65.7 438.1 65.8 432.2 65.9 426.4 66.2 420.6 66.5 414.8 67 409.1 67.6 403.3 68.2 397.6 68.9 391.9 69.8 386.2 70.7 380.5 71.7 374.9 72.9 369.3 74.1 363.7 75.4 358.2 76.8 352.7 78.3 347.2 79.8 341.7 81.5 336.3 83.2 330.9 85.1 325.6 87 320.3 89 315 91.1 309.8 93.2 304.6 95.5 299.5 97.8 294.4 100.2 289.3 102.7 284.3 105.3 279.3 107.9 274.4 110.6 269.6 113.4 264.7 116.2 260 119.2 255.2 122.2 250.6 125.2 246 128.4 241.4 131.6 236.9 134.8 232.4 138.2 228 141.6 223.7 145 219.4 148.5 215.2 152.1 211 155.8 206.9 159.5 202.8 163.2 198.8 167.1 194.9 170.9 191 174.9 187.2 178.9 183.4 182.9 179.7 187 176.1 191.1 172.5 195.3 169 199.6 165.6 203.9 162.2 208.2 158.9 212.6 155.7 217 152.5 221.5 149.4 226 146.4 230.6 143.4 235.2 140.5 239.8 137.7 244.5 134.9 249.2 132.2 253.9 129.6 258.7 127.1 263.6 124.6 268.4 122.2 273.3 119.9 278.2 117.6 283.2 115.4 288.2 113.3 293.2 111.2 298.3 109.3 303.3 107.4 308.4 105.5 313.6 103.8 318.7 102.1 323.9 100.5 329.1 99 334.3 97.6 339.5 96.2 344.8 94.9 350.1 93.7 355.4 92.5 360.7 91.5 366 90.5 371.4 89.6 376.7 88.7 382.1 88 387.5 87.3 392.8 86.7 398.2 86.2 403.7 85.8 409.1 85.4 414.5 85.1 419.9 84.9 425.3 84.8 430.8 84.8 436.2 84.8 441.6 84.9 447.1 85.1 452.5 85.4 457.9 85.8 463.4 86.2 468.8 86.8 474.2 87.4 479.6 88.1 485 88.8 490.4 89.7 495.8 90.6 501.2 91.7 506.5 92.8 511.9 93.9 517.2 95.2 522.5 96.6 527.8 98 533.1 99.5 538.4 101.1 543.6 102.8 548.8 104.5 554 106.4 559.2 108.3 564.3 110.3 569.4 112.4 574.5 114.6 579.6 116.8 584.6 119.1 589.6 121.6 594.6 124.1 599.5 126.6 604.4 129.3 609.2 132 614 134.9 618.8 137.8 623.5 140.8 628.2 143.8 632.9 147 637.5 150.2 642 153.5 646.5 156.9 651 160.3 655.4 163.9 659.7 167.5 664 171.2 668.2 175 672.4 178.8 676.5 182.7 680.6 186.7 684.6 190.8 688.5 195 692.4 199.2 696.2 203.5 699.9 207.9 703.6 212.3 707.2 216.8 710.7 221.4 714.2 226 717.6 230.8 720.9 235.5 724.1 240.4 727.2 245.3 730.3 250.3 733.3 255.4 736.2 260.5 739 265.7 741.7 270.9 744.3 276.2 746.9 281.5 749.3 287 751.7 292.4 754 297.9 756.1 303.5 758.2 309.2 760.2 314.8 762.1 320.6 763.8 326.3 765.5 332.2 767.1 338 768.5 343.9 769.9 349.9 771.2 355.9 772.3 361.9 773.3 368 774.3 374.1ZM770.2 374.2 769.3 368.2 768.3 362.2 767.2 356.2 766 350.3 764.6 344.4 763.2 338.5 761.6 332.7 760 327 758.2 321.2 756.4 315.6 754.4 310 752.4 304.4 750.3 298.9 748 293.4 745.7 288 743.3 282.6 740.8 277.3 738.2 272.1 735.5 266.9 732.7 261.8 729.8 256.7 726.9 251.7 723.9 246.8 720.8 241.9 717.6 237.1 714.3 232.3 711 227.7 707.6 223.1 704.1 218.5 700.6 214 696.9 209.6 693.2 205.3 689.5 201.1 685.7 196.9 681.8 192.8 677.8 188.7 673.8 184.8 669.7 180.9 665.6 177.1 661.4 173.3 657.2 169.7 652.9 166.1 648.5 162.6 644.1 159.1 639.7 155.8 635.2 152.5 630.6 149.3 626 146.2 621.4 143.1 616.7 140.2 612 137.3 607.2 134.5 602.4 131.8 597.6 129.1 592.7 126.6 587.8 124.1 582.9 121.7 577.9 119.4 572.9 117.2 567.9 115 562.8 112.9 557.7 110.9 552.6 109 547.5 107.2 542.3 105.5 537.1 103.8 531.9 102.2 526.7 100.7 521.4 99.3 516.2 98 510.9 96.7 505.6 95.5 500.3 94.4 495 93.4 489.6 92.5 484.3 91.6 478.9 90.9 473.6 90.2 468.2 89.6 462.8 89 457.5 88.6 452.1 88.2 446.7 87.9 441.3 87.7 435.9 87.6 430.6 87.6 425.2 87.6 419.8 87.7 414.4 87.9 409.1 88.2 403.7 88.5 398.3 89 393 89.5 387.6 90.1 382.3 90.7 377 91.5 371.7 92.3 366.4 93.2 361.1 94.2 355.9 95.2 350.6 96.4 345.4 97.6 340.2 98.9 335 100.2 329.8 101.6 324.7 103.2 319.5 104.7 314.4 106.4 309.4 108.1 304.3 109.9 299.3 111.8 294.3 113.8 289.3 115.8 284.4 117.9 279.5 120.1 274.6 122.3 269.7 124.6 264.9 127 260.1 129.5 255.4 132 250.7 134.6 246 137.3 241.4 140 236.8 142.8 232.2 145.7 227.7 148.6 223.2 151.6 218.8 154.7 214.4 157.8 210.1 161 205.8 164.3 201.5 167.7 197.3 171.1 193.2 174.5 189.1 178.1 185 181.7 181 185.3 177.1 189 173.2 192.8 169.3 196.7 165.6 200.6 161.8 204.5 158.2 208.5 154.6 212.6 151 216.8 147.5 221 144.1 225.2 140.7 229.5 137.4 233.9 134.2 238.3 131.1 242.8 128 247.3 124.9 251.9 122 256.5 119.1 261.2 116.2 265.9 113.5 270.7 110.8 275.5 108.2 280.4 105.7 285.3 103.2 290.2 100.9 295.2 98.6 300.3 96.3 305.4 94.2 310.5 92.2 315.7 90.2 320.9 88.3 326.2 86.5 331.5 84.8 336.8 83.1 342.2 81.6 347.5 80.1 353 78.7 358.4 77.4 363.9 76.2 369.5 75.1 375 74.1 380.6 73.2 386.2 72.4 391.8 71.7 397.5 71 403.1 70.5 408.8 70.1 414.5 69.7 420.2 69.5 426 69.3 431.7 69.3 437.5 69.3 443.3 69.5 449.1 69.8 454.9 70.1 460.7 70.6 466.5 71.2 472.3 71.9 478.1 72.6 483.9 73.5 489.7 74.5 495.5 75.6 501.3 76.8 507.1 78.2 512.9 79.6 518.6 81.1 524.4 82.8 530.1 84.5 535.8 86.4 541.5 88.4 547.2 90.4 552.9 92.6 558.5 94.9 564.1 97.3 569.7 99.9 575.2 102.5 580.7 105.2 586.2 108.1 591.6 111.1 597 114.1 602.4 117.3 607.7 120.6 612.9 124 618.1 127.5 623.3 131.1 628.4 134.8 633.5 138.6 638.4 142.6 643.4 146.6 648.2 150.7 653 155 657.8 159.3 662.4 163.8 667 168.3 671.6 173 676 177.7 680.4 182.5 684.7 187.5 688.9 192.5 693 197.6 697 202.8 701 208.1 704.8 213.5 708.6 219 712.2 224.5 715.8 230.2 719.3 235.9 722.6 241.7 725.9 247.6 729 253.6 732.1 259.6 735 265.7 737.9 271.9 740.6 278.1 743.2 284.4 745.7 290.7 748.1 297.2 750.3 303.6 752.5 310.2 754.5 316.8 756.4 323.4 758.1 330.1 759.8 336.8 761.3 343.6 762.7 350.4 763.9 357.2 765 364.1 766 371 766.9 377.9 767.6 384.9 768.2 391.9 768.7 398.8 769 405.9 769.2 412.9 769.3 419.9 769.2 426.9 769 434 768.6 441 768.2 448 767.5 455.1 766.8 462.1 765.9 469.1 764.9 476 763.7 483 762.4 490 761 496.9 759.4 503.7 757.7 510.6 755.8 517.4 753.9 524.2 751.8 530.9 749.6 537.6 747.2 544.3 744.7 550.9 742.1 557.4 739.4 563.9 736.5 570.3 733.5 576.7 730.4 583 727.2 589.2 723.8 595.4 720.4 601.4 716.8 607.4 713.1 613.4 709.3 619.2 705.4 625 701.4 630.7 697.3 636.3 693 641.8 688.7 647.2 684.3 652.5 679.8 657.7 675.1 662.8 670.4 667.9 665.6 672.8 660.7 677.6 655.8 682.3 650.7 686.9 645.6 691.4 640.4 695.8 635.1 700.1 629.7 704.2 624.3 708.3 618.8 712.2 613.3 716 607.7 719.7 602 723.3 596.2 726.7 590.5 730.1 584.6 733.3 578.7 736.4 572.8 739.3 566.8 742.2 560.8 744.9 554.7 747.5 548.7 750 542.5 752.3 536.4 754.6 530.2 756.7 524 758.6 517.8 760.5 511.5 762.2 505.3 763.8 499 765.3 492.7 766.6 486.4 767.9 480.1 769 473.8 769.9 467.5 770.8 461.2 771.5 454.9 772.1 448.6 772.6 442.3 773 436 773.2 429.8 773.4 423.5 773.4 417.3 773.3 411 773.1 404.8 772.7 398.7 772.3 392.5 771.7 386.4 771 380.3 770.2 374.2Z" fill="#6f5f34" fill-rule="nonzero"/><path d="M219.7 386.5 217.7 381.8 215.9 377 214.2 372.1 212.7 367 211.3 362 210.1 356.8 209 351.5 208.1 346.2 207.4 340.7 206.9 335.3 206.5 329.7 206.3 324.1 206.3 318.5 206.5 312.8 206.9 307.1 207.5 301.3 208.2 295.6 209.2 289.8 210.4 284 211.8 278.2 213.3 272.4 215.1 266.6 217.1 260.8 219.2 255.1 221.6 249.4 224.2 243.7 226.9 238.1 229.9 232.5 233.1 227 236.4 221.5 240 216.1 243.7 210.8 247.6 205.6 251.8 200.5 256 195.5 260.5 190.6 265.2 185.8 270 181.1 274.9 176.5 280.1 172.1 285.4 167.8 290.8 163.6 296.4 159.6 302.1 155.7 308 152 314 148.5 320.1 145.1 326.4 141.9 332.8 138.8 339.2 136 345.8 133.3 352.5 130.8 359.2 128.5 366.1 126.3 373 124.4 380 122.7 387 121.2 394.1 119.8 401.2 118.7 408.4 117.8 415.7 117.1 422.9 116.6 430.2 116.4 437.4 116.3 444.7 116.4 452 116.8 459.2 117.4 466.5 118.2 473.7 119.2 480.9 120.5 488 121.9 495.1 123.6 502.1 125.5 509 127.6 515.9 129.9 522.7 132.4 529.4 135.1 536 138.1 542.5 141.2 548.9 144.5 555.1 148.1 561.2 151.8 567.2 155.7 573.1 159.8 578.8 164.1 584.3 168.5 589.7 173.2 594.9 178 599.9 182.9 604.7 188 609.4 193.3 613.8 198.7 618.1 204.2 622.1 209.9 625.9 215.7 629.5 221.6 632.9 227.6 636.1 233.7 639 239.9 641.7 246.2 644.2 252.5 646.4 259 648.4 265.5 650.1 272 651.6 278.5 652.9 285.1 653.9 291.8 654.7 298.4 655.2 305 655.5 311.7 655.5 318.3 655.3 324.9 654.9 331.4 654.2 337.9 653.3 344.4 652.1 350.8 650.8 357.1 649.2 363.4 647.4 369.6 645.4 375.7 643.2 381.7 640.8 387.5 638.2 393.3 635.5 399 632.5 404.5 629.4 409.9 626.1 415.1 622.7 420.3 619.1 425.2 615.4 430.1 611.6 434.7 607.6 439.2 603.5 443.6 599.4 447.8 595.1 451.8 590.7 455.7 586.3 459.4 581.8 462.9 577.2 466.2 572.6 469.4 568 472.5 563.3 475.3 558.5 478 553.8 480.6 549 483 544.3 485.2 539.5 487.3 534.7 489.2 530 491 525.3 492.6 520.6 494.1 515.9 495.5 511.3 496.7 506.7 497.8 502.1 498.8 497.6 499.7 493.1 500.4 488.7 501.1 484.4 501.6 480.1 502.1 475.8 502.5 471.7 502.7 467.6 502.9 463.5 503.1 459.5 503.1 455.6 503.1 451.7 503 447.9 502.9 444.2 502.7 440.5 502.5 436.9 502.2 433.3 501.9 429.8 501.6 426.3 501.2 422.9 500.8 419.6 500.4 416.3 499.9 413 499.4 409.8 498.9 406.6 498.4 403.4 497.9 400.3 497.4 397.2 496.8 394.1 496.2 391 495.7 387.9 495.1 384.9 494.5 381.9 493.9 378.9 493.3 375.8 492.7 372.8 492 369.8 491.4 366.8 490.7 363.7 490 360.7 489.3 357.6 488.6 354.5 487.8 351.4 487.1 348.3 486.2 345.2 485.4 342 484.5 338.8 483.6 335.6 482.7 332.4 481.7 329.2 480.6 325.9 479.5 322.6 478.3 319.2 477.1 315.9 475.8 312.5 474.5 309.1 473 305.7 471.5 302.3 469.9 298.9 468.3 295.4 466.5 292 464.6 288.5 462.7 285.1 460.6 281.6 458.5 278.2 456.2 274.8 453.9 271.4 451.4 268 448.8 264.6 446.1 261.3 443.3 258 440.3 254.8 437.3 251.6 434.1 248.5 430.8 245.4 427.4 242.4 423.8 239.5 420.1 236.7 416.3 233.9 412.4 231.3 408.4 228.7 404.2 226.3 400 224 395.6 221.7 391.1 219.7 386.5Z" fill="none" stroke="#dc8b64" stroke-width="3.0" stroke-linejoin="round" opacity="1.0"/><path d="M180.9 387.5 183.9 381.8 187 376.3 190.3 370.9 193.7 365.6 197.1 360.5 200.7 355.6 204.4 350.8 208.2 346.2 212 341.7 216 337.4 220 333.2 224 329.2 228.2 325.4 232.3 321.7 236.6 318.1 240.8 314.8 245.1 311.5 249.4 308.5 253.8 305.5 258.1 302.7 262.5 300.1 266.8 297.6 271.2 295.3 275.6 293.1 279.9 291 284.3 289 288.6 287.2 292.9 285.5 297.2 284 301.4 282.5 305.6 281.2 309.8 279.9 313.9 278.8 318 277.8 322.1 276.9 326.1 276.1 330.1 275.4 334 274.7 337.8 274.2 341.6 273.7 345.4 273.3 349.1 272.9 352.8 272.7 356.4 272.5 359.9 272.3 363.4 272.3 366.9 272.2 370.3 272.2 373.6 272.3 376.9 272.4 380.2 272.5 383.4 272.7 386.5 272.9 389.7 273.1 392.8 273.4 395.8 273.7 398.8 274 401.8 274.3 404.7 274.6 407.7 275 410.6 275.3 413.4 275.7 416.3 276.1 419.1 276.5 422 276.9 424.8 277.3 427.6 277.8 430.4 278.2 433.3 278.6 436.1 279.1 438.9 279.6 441.8 280.1 444.6 280.6 447.5 281.1 450.4 281.6 453.3 282.2 456.2 282.7 459.2 283.3 462.1 284 465.2 284.6 468.2 285.3 471.3 286 474.4 286.8 477.5 287.6 480.7 288.4 483.9 289.3 487.2 290.3 490.5 291.3 493.8 292.3 497.2 293.5 500.6 294.7 504 295.9 507.5 297.3 511 298.7 514.5 300.2 518.1 301.9 521.7 303.6 525.3 305.3 528.9 307.2 532.6 309.3 536.2 311.4 539.9 313.6 543.6 315.9 547.3 318.4 551 321 554.7 323.7 558.4 326.6 562.1 329.6 565.7 332.7 569.3 336 572.9 339.4 576.5 342.9 580 346.6 583.5 350.5 586.9 354.5 590.2 358.6 593.5 362.9 596.7 367.4 599.8 372 602.8 376.8 605.8 381.7 608.6 386.7 611.3 392 613.9 397.3 616.3 402.9 618.6 408.5 620.8 414.3 622.8 420.3 624.6 426.4 626.3 432.6 627.8 438.9 629.1 445.4 630.2 452 631.1 458.7 631.8 465.5 632.2 472.4 632.5 479.4 632.5 486.4 632.3 493.6 631.8 500.8 631.1 508.1 630.2 515.4 628.9 522.8 627.4 530.2 625.7 537.7 623.7 545.1 621.3 552.5 618.7 559.9 615.9 567.3 612.7 574.7 609.3 582 605.6 589.2 601.5 596.4 597.2 603.5 592.7 610.4 587.8 617.3 582.7 624 577.3 630.6 571.6 637 565.7 643.3 559.5 649.4 553 655.2 546.3 660.9 539.4 666.4 532.2 671.6 524.9 676.6 517.3 681.3 509.5 685.8 501.5 690 493.4 693.9 485.1 697.6 476.7 700.9 468.1 703.9 459.4 706.6 450.6 709 441.7 711.1 432.7 712.8 423.7 714.2 414.6 715.2 405.5 716 396.4 716.3 387.2 716.4 378.1 716 369.1 715.4 360 714.4 351 713.1 342.2 711.4 333.3 709.4 324.6 707.1 316.1 704.5 307.6 701.5 299.3 698.3 291.2 694.7 283.2 690.9 275.4 686.8 267.8 682.4 260.4 677.8 253.2 672.8 246.2 667.7 239.5 662.3 233 656.7 226.7 650.9 220.7 644.9 215 638.8 209.5 632.4 204.2 625.9 199.3 619.2 194.6 612.4 190.2 605.5 186 598.5 182.2 591.3 178.6 584.1 175.3 576.8 172.3 569.4 169.6 562 167.1 554.6 164.9 547.1 163 539.6 161.4 532 160 524.5 158.9 517 158.1 509.5 157.5 502.1 157.1 494.7 157 487.3 157.2 480 157.5 472.7 158.1 465.6 159 458.5 160 451.5 161.3 444.5 162.7 437.7 164.4 431 166.2 424.4 168.3 417.9 170.5 411.6 172.9 405.4 175.4 399.3 178.1 393.3 180.9 387.5Z" fill="none" stroke="#dc8b64" stroke-width="3.0" stroke-linejoin="round" opacity="1.0"/><path d="M110 389.3 110.5 381.8 111.3 374.4 112.4 367 113.7 359.6 115.3 352.3 117.1 345 119.1 337.8 121.4 330.7 123.9 323.6 126.7 316.7 129.6 309.8 132.8 303.1 136.2 296.4 139.8 289.9 143.6 283.5 147.5 277.2 151.7 271.1 156 265.1 160.6 259.2 165.2 253.5 170.1 248 175.1 242.6 180.2 237.4 185.5 232.3 190.9 227.5 196.5 222.8 202.1 218.3 207.9 213.9 213.7 209.8 219.7 205.8 225.8 202.1 231.9 198.5 238.1 195.1 244.4 191.9 250.7 188.9 257.1 186.1 263.5 183.6 270 181.2 276.5 179 283 177 289.6 175.2 296.1 173.6 302.7 172.2 309.2 171 315.8 170 322.3 169.2 328.8 168.6 335.3 168.2 341.7 168 348.1 167.9 354.4 168.1 360.7 168.4 366.9 168.9 373 169.6 379.1 170.5 385.1 171.5 391 172.7 396.8 174.1 402.5 175.6 408.1 177.3 413.7 179.1 419.1 181.1 424.4 183.2 429.5 185.5 434.6 187.9 439.5 190.4 444.3 193 449 195.8 453.5 198.6 458 201.6 462.2 204.7 466.4 207.9 470.3 211.1 474.2 214.5 477.9 217.9 481.5 221.4 484.9 224.9 488.1 228.5 491.3 232.2 494.3 235.9 497.1 239.7 499.8 243.5 502.3 247.3 504.8 251.2 507 255.1 509.2 259 511.2 262.9 513 266.8 514.8 270.7 516.4 274.6 517.9 278.5 519.3 282.4 520.5 286.3 521.7 290.2 522.7 294 523.6 297.9 524.4 301.7 525.2 305.4 525.8 309.1 526.3 312.8 526.8 316.5 527.2 320.1 527.5 323.7 527.7 327.3 527.9 330.8 528 334.2 528 337.7 528 341 528 344.4 527.8 347.7 527.7 350.9 527.5 354.2 527.3 357.3 527 360.5 526.7 363.6 526.4 366.7 526 369.7 525.7 372.8 525.3 375.8 524.9 378.7 524.4 381.7 524 384.6 523.5 387.6 523.1 390.5 522.6 393.4 522.1 396.3 521.6 399.2 521.1 402.1 520.5 405 520 407.9 519.4 410.8 518.9 413.8 518.3 416.7 517.7 419.7 517 422.7 516.4 425.7 515.7 428.8 515 431.8 514.3 435 513.5 438.1 512.7 441.3 511.8 444.5 510.9 447.7 510 451 508.9 454.4 507.9 457.7 506.7 461.2 505.5 464.6 504.3 468.1 502.9 471.6 501.5 475.2 500 478.8 498.4 482.5 496.7 486.2 494.9 489.9 493 493.6 490.9 497.4 488.8 501.2 486.6 505 484.2 508.8 481.7 512.7 479 516.5 476.3 520.4 473.3 524.2 470.3 528.1 467.1 531.9 463.7 535.7 460.2 539.5 456.6 543.3 452.8 547 448.8 550.6 444.7 554.2 440.4 557.8 436 561.3 431.4 564.6 426.7 568 421.8 571.2 416.7 574.3 411.5 577.3 406.2 580.1 400.7 582.9 395 585.5 389.2 588 383.3 590.3 377.3 592.4 371.1 594.4 364.9 596.2 358.5 597.8 352 599.3 345.4 600.5 338.7 601.5 332 602.3 325.2 602.9 318.3 603.3 311.4 603.4 304.4 603.4 297.4 603 290.4 602.5 283.4 601.7 276.4 600.6 269.4 599.3 262.4 597.7 255.4 595.9 248.5 593.9 241.7 591.5 234.9 589 228.2 586.2 221.6 583.1 215.1 579.8 208.7 576.2 202.4 572.5 196.3 568.4 190.3 564.2 184.5 559.7 178.8 555 173.3 550.1 168 545 162.9 539.6 158 534.1 153.3 528.4 148.8 522.5 144.5 516.5 140.4 510.3 136.6 503.9 133 497.4 129.7 490.8 126.6 484 123.8 477.1 121.2 470.1 118.8 463.1 116.8 455.9 115 448.7 113.4 441.4 112.1 434 111.1 426.6 110.4 419.2 109.9 411.7 109.6 404.2 109.7 396.8 110 389.3Z" fill="none" stroke="#ad909e" stroke-width="3.0" stroke-linejoin="round" opacity="1.0"/><path d="M292.4 384.6 293.1 381.8 293.8 378.9 294.5 376.1 295.2 373.3 295.9 370.5 296.6 367.7 297.3 365 298 362.2 298.7 359.5 299.5 356.8 300.2 354 301 351.3 301.8 348.6 302.6 345.8 303.4 343.1 304.2 340.3 305.1 337.5 306 334.7 306.9 331.9 307.8 329.1 308.8 326.3 309.8 323.4 310.9 320.5 312 317.6 313.1 314.7 314.3 311.7 315.6 308.7 316.9 305.7 318.2 302.7 319.7 299.6 321.2 296.6 322.7 293.5 324.4 290.4 326.1 287.2 327.9 284.1 329.8 281 331.8 277.8 333.9 274.6 336.1 271.4 338.4 268.3 340.8 265.1 343.2 261.9 345.8 258.8 348.5 255.6 351.4 252.5 354.3 249.3 357.3 246.3 360.5 243.2 363.8 240.2 367.2 237.2 370.7 234.2 374.4 231.3 378.1 228.5 382 225.7 386.1 222.9 390.2 220.3 394.5 217.7 398.8 215.2 403.4 212.7 408 210.4 412.7 208.2 417.6 206 422.6 204 427.6 202 432.8 200.2 438.1 198.5 443.6 197 449.1 195.5 454.7 194.2 460.4 193.1 466.2 192 472 191.2 478 190.5 484 189.9 490.1 189.5 496.3 189.3 502.6 189.3 508.8 189.4 515.2 189.7 521.6 190.2 528 190.9 534.5 191.8 540.9 192.8 547.4 194.1 553.9 195.6 560.5 197.2 567 199.1 573.5 201.2 580 203.5 586.4 206 592.8 208.7 599.2 211.6 605.6 214.7 611.8 218.1 618 221.7 624.2 225.4 630.2 229.4 636.2 233.6 642 238.1 647.8 242.7 653.4 247.5 658.9 252.6 664.2 257.8 669.4 263.3 674.5 268.9 679.4 274.7 684.1 280.8 688.6 287 692.9 293.4 697.1 299.9 701 306.7 704.7 313.6 708.2 320.6 711.4 327.8 714.4 335.1 717.2 342.6 719.7 350.2 721.9 357.9 723.8 365.7 725.5 373.6 726.9 381.6 728 389.7 728.9 397.9 729.4 406.1 729.6 414.3 729.5 422.6 729.1 430.9 728.4 439.1 727.4 447.4 726 455.7 724.4 464 722.4 472.2 720.2 480.3 717.6 488.4 714.7 496.4 711.5 504.3 707.9 512.1 704.1 519.7 700 527.2 695.6 534.6 690.9 541.9 686 548.9 680.8 555.8 675.3 562.5 669.6 568.9 663.6 575.2 657.4 581.2 650.9 587 644.3 592.6 637.5 597.9 630.4 602.9 623.2 607.7 615.9 612.2 608.4 616.4 600.8 620.4 593 624 585.1 627.4 577.2 630.5 569.1 633.2 561.1 635.7 552.9 637.9 544.7 639.7 536.5 641.3 528.3 642.6 520.1 643.5 511.9 644.2 503.8 644.6 495.7 644.7 487.6 644.5 479.6 644.1 471.7 643.4 463.9 642.4 456.2 641.2 448.6 639.7 441.1 637.9 433.8 636 426.6 633.8 419.6 631.4 412.7 628.8 405.9 626 399.4 623 393 619.8 386.8 616.4 380.7 612.9 374.9 609.3 369.3 605.5 363.8 601.5 358.6 597.5 353.5 593.3 348.6 589.1 344 584.7 339.5 580.3 335.2 575.8 331.2 571.2 327.3 566.6 323.6 561.9 320.2 557.2 316.9 552.4 313.8 547.6 310.9 542.9 308.1 538.1 305.6 533.3 303.2 528.5 301 523.7 298.9 518.9 297.1 514.2 295.3 509.5 293.8 504.8 292.3 500.1 291.1 495.5 289.9 491 288.9 486.5 288 482 287.2 477.6 286.6 473.2 286 469 285.5 464.7 285.2 460.6 284.9 456.5 284.8 452.4 284.7 448.5 284.7 444.6 284.7 440.7 284.8 437 285 433.3 285.3 429.6 285.6 426.1 285.9 422.5 286.3 419.1 286.7 415.7 287.2 412.4 287.7 409.1 288.2 405.9 288.7 402.7 289.3 399.6 289.9 396.5 290.5 393.5 291.1 390.5 291.8 387.6 292.4 384.6Z" fill="none" stroke="#ad909e" stroke-width="3.0" stroke-linejoin="round" opacity="1.0"/><path d="M407 381.29999999999995L407 119" stroke="#c9c65a" stroke-width="1"/><path d="M407 381.29999999999995L793 373" stroke="#d9b050" stroke-width="1"/><path d="M407 381.29999999999995L347.79999999999995 204.60000000000002" stroke="#5fa5c0" stroke-width="1.5"/><path d="M163.7 173.1 167.5 169.5 171.3 166.1 175.1 162.7 179 159.3 182.9 156.1 186.9 152.8 190.9 149.6 195 146.5 199 143.4 203.2 140.4 207.3 137.5 211.5 134.5 215.8 131.7 220 128.9 224.3 126.2 228.7 123.5 233 120.9 237.5 118.3 241.9 115.8 246.4 113.4 250.9 111 255.4 108.7 259.9 106.4 264.5 104.2 269.1 102.1 273.8 100 278.4 98 283.1 96 287.8 94.1 292.6 92.3 297.3 90.5 302.1 88.8 306.9 87.2 311.7 85.6 316.6 84.1 321.5 82.6 326.3 81.2 331.2 79.9 336.1 78.6 341.1 77.4 346 76.3 351 75.2 356 74.2 361 73.2 366 72.4 371 71.5 376 70.8 381 70.1 386.1 69.5 391.1 68.9 396.2 68.5 401.3 68 406.3 67.7 411.4 67.4 416.5 67.2 421.6 67 426.7 67 431.8 66.9 436.9 67 442 67.1 447.1 67.3 452.2 67.5 457.3 67.9 462.3 68.3 467.4 68.7 472.5 69.2 477.6 69.8 482.7 70.5 487.7 71.2 492.8 72 497.8 72.9 502.9 73.8 507.9 74.9 512.9 75.9 518 77.1 522.9 78.3 527.9 79.6 532.9 80.9 537.8 82.4 542.8 83.8 547.7 85.4 552.6 87 557.5 88.7 562.3 90.5 567.2 92.4 572 94.3 576.8 96.2 581.6 98.3 586.3 100.4 591 102.6 595.7 104.8 600.4 107.2 605 109.6 609.6 112 614.2 114.6 618.7 117.2 623.3 119.8 627.7 122.6 632.2 125.4 636.6 128.2 640.9 131.2 645.3 134.2 649.6 137.3 653.8 140.4 658 143.6 662.2 146.9 666.3 150.2 670.4 153.7 674.4 157.1 678.4 160.7 682.3 164.3 686.2 167.9 690.1 171.7 693.9 175.5 697.6 179.3 701.3 183.3 704.9 187.2 708.5 191.3 712 195.4 715.4 199.6 718.8 203.8 722.2 208.1 725.4 212.5 728.6 216.9 731.8 221.3 734.9 225.9 737.9 230.5 740.8 235.1 743.7 239.8 746.5 244.6 749.2 249.4 751.9 254.2 754.5 259.1 757 264.1 759.4 269.1 761.8 274.2 764.1 279.3 766.3 284.4 768.4 289.7 770.5 294.9 772.4 300.2 774.3 305.6 776.1 310.9 777.8 316.4 779.4 321.8 781 327.3 782.4 332.9 783.8 338.5 785.1 344.1 786.2 349.8 787.3 355.4 788.3 361.2 789.2 366.9 790 372.7 790.7 378.5 791.3 384.3 791.8 390.2 792.2 396.1 792.5 402 792.7 407.9 792.9 413.8 792.9 419.8 792.8 425.8 792.6 431.7 792.3 437.7 791.9 443.8 791.4 449.8 790.7 455.8 790 461.8 789.2 467.9 788.2 473.9 787.2 479.9 786.1 486 784.8 492 783.4 498 782 504 780.4 510 778.7 516 776.9 522 775 527.9 773 533.9 770.8 539.8 768.6 545.7 766.2 551.5 763.8 557.4 761.2 563.2 758.6 569 755.8 574.7 752.9 580.4 749.9 586.1 746.8 591.8 743.6 597.4 740.3 602.9 736.9 608.4 733.4 613.9 729.7 619.3 726 624.6 722.2 629.9 718.3 635.2 469.5 429.5 470.4 428.5 471.2 427.4 472.1 426.4 472.9 425.3 473.7 424.3 474.5 423.2 475.3 422.1 476 421 476.8 419.9 477.5 418.8 478.2 417.7 478.9 416.5 479.5 415.4 480.2 414.2 480.8 413.1 481.4 411.9 482 410.7 482.5 409.5 483.1 408.3 483.6 407.1 484.1 405.9 484.6 404.7 485 403.5 485.5 402.2 485.9 401 486.3 399.7 486.7 398.5 487 397.3 487.3 396 487.7 394.7 488 393.5 488.2 392.2 488.5 391 488.7 389.7 488.9 388.4 489.1 387.1 489.3 385.9 489.4 384.6 489.5 383.3 489.6 382 489.7 380.8 489.8 379.5 489.8 378.2 489.9 376.9 489.8 375.7 489.8 374.4 489.8 373.1 489.7 371.8 489.6 370.6 489.5 369.3 489.4 368.1 489.2 366.8 489.1 365.5 488.9 364.3 488.7 363.1 488.4 361.8 488.2 360.6 487.9 359.4 487.6 358.1 487.3 356.9 487 355.7 486.6 354.5 486.2 353.3 485.9 352.1 485.4 350.9 485 349.7 484.6 348.6 484.1 347.4 483.6 346.3 483.1 345.1 482.6 344 482 342.8 481.5 341.7 480.9 340.6 480.3 339.5 479.7 338.4 479 337.4 478.4 336.3 477.7 335.2 477 334.2 476.3 333.2 475.6 332.2 474.9 331.1 474.1 330.1 473.3 329.2 472.6 328.2 471.8 327.2 470.9 326.3 470.1 325.4 469.3 324.4 468.4 323.5 467.5 322.6 466.6 321.8 465.7 320.9 464.8 320.1 463.9 319.2 462.9 318.4 462 317.6 461 316.8 460 316 459 315.3 458 314.5 457 313.8 456 313.1 454.9 312.4 453.9 311.7 452.8 311 451.7 310.4 450.6 309.8 449.5 309.2 448.4 308.6 447.3 308 446.2 307.4 445.1 306.9 443.9 306.3 442.8 305.8 441.6 305.3 440.4 304.9 439.3 304.4 438.1 304 436.9 303.5 435.7 303.1 434.5 302.7 433.3 302.4 432.1 302 430.8 301.7 429.6 301.4 428.4 301.1 427.1 300.8 425.9 300.5 424.7 300.3 423.4 300.1 422.2 299.9 420.9 299.7 419.6 299.5 418.4 299.4 417.1 299.2 415.8 299.1 414.6 299 413.3 299 412 298.9 410.8 298.9 409.5 298.9 408.2 298.9 406.9 298.9 405.7 298.9 404.4 299 403.1 299 401.8 299.1 400.6 299.3 399.3 299.4 398 299.5 396.7 299.7 395.5 299.9 394.2 300.1 393 300.3 391.7 300.6 390.4 300.8 389.2 301.1 388 301.4 386.7 301.7 385.5 302 384.2 302.4 383 302.7 381.8 303.1 380.6 303.5 379.4 304 378.2 304.4 377 304.8 375.8 305.3 374.6 305.8 373.4 306.3 372.3 306.8 371.1 307.4 369.9 307.9 368.8 308.5 367.7 309.1 366.5 309.7 365.4 310.3 364.3 311 363.2 311.6 362.1 312.3 361 313 360 313.7 358.9 314.4 357.9 315.1 356.8 315.9 355.8 316.6 354.8 317.4 353.8 318.2 352.8 319 351.8 319.8 350.9 320.6 349.9 321.5 349 322.3 348 323.2 347.1 324.1 346.2 325 345.3 325.9Z" fill="none" stroke="#4a3b16" stroke-width="30" opacity="0.22"/><path d="M163.7 173.1 167.5 169.5 171.3 166.1 175.1 162.7 179 159.3 182.9 156.1 186.9 152.8 190.9 149.6 195 146.5 199 143.4 203.2 140.4 207.3 137.5 211.5 134.5 215.8 131.7 220 128.9 224.3 126.2 228.7 123.5 233 120.9 237.5 118.3 241.9 115.8 246.4 113.4 250.9 111 255.4 108.7 259.9 106.4 264.5 104.2 269.1 102.1 273.8 100 278.4 98 283.1 96 287.8 94.1 292.6 92.3 297.3 90.5 302.1 88.8 306.9 87.2 311.7 85.6 316.6 84.1 321.5 82.6 326.3 81.2 331.2 79.9 336.1 78.6 341.1 77.4 346 76.3 351 75.2 356 74.2 361 73.2 366 72.4 371 71.5 376 70.8 381 70.1 386.1 69.5 391.1 68.9 396.2 68.5 401.3 68 406.3 67.7 411.4 67.4 416.5 67.2 421.6 67 426.7 67 431.8 66.9 436.9 67 442 67.1 447.1 67.3 452.2 67.5 457.3 67.9 462.3 68.3 467.4 68.7 472.5 69.2 477.6 69.8 482.7 70.5 487.7 71.2 492.8 72 497.8 72.9 502.9 73.8 507.9 74.9 512.9 75.9 518 77.1 522.9 78.3 527.9 79.6 532.9 80.9 537.8 82.4 542.8 83.8 547.7 85.4 552.6 87 557.5 88.7 562.3 90.5 567.2 92.4 572 94.3 576.8 96.2 581.6 98.3 586.3 100.4 591 102.6 595.7 104.8 600.4 107.2 605 109.6 609.6 112 614.2 114.6 618.7 117.2 623.3 119.8 627.7 122.6 632.2 125.4 636.6 128.2 640.9 131.2 645.3 134.2 649.6 137.3 653.8 140.4 658 143.6 662.2 146.9 666.3 150.2 670.4 153.7 674.4 157.1 678.4 160.7 682.3 164.3 686.2 167.9 690.1 171.7 693.9 175.5 697.6 179.3 701.3 183.3 704.9 187.2 708.5 191.3 712 195.4 715.4 199.6 718.8 203.8 722.2 208.1 725.4 212.5 728.6 216.9 731.8 221.3 734.9 225.9 737.9 230.5 740.8 235.1 743.7 239.8 746.5 244.6 749.2 249.4 751.9 254.2 754.5 259.1 757 264.1 759.4 269.1 761.8 274.2 764.1 279.3 766.3 284.4 768.4 289.7 770.5 294.9 772.4 300.2 774.3 305.6 776.1 310.9 777.8 316.4 779.4 321.8 781 327.3 782.4 332.9 783.8 338.5 785.1 344.1 786.2 349.8 787.3 355.4 788.3 361.2 789.2 366.9 790 372.7 790.7 378.5 791.3 384.3 791.8 390.2 792.2 396.1 792.5 402 792.7 407.9 792.9 413.8 792.9 419.8 792.8 425.8 792.6 431.7 792.3 437.7 791.9 443.8 791.4 449.8 790.7 455.8 790 461.8 789.2 467.9 788.2 473.9 787.2 479.9 786.1 486 784.8 492 783.4 498 782 504 780.4 510 778.7 516 776.9 522 775 527.9 773 533.9 770.8 539.8 768.6 545.7 766.2 551.5 763.8 557.4 761.2 563.2 758.6 569 755.8 574.7 752.9 580.4 749.9 586.1 746.8 591.8 743.6 597.4 740.3 602.9 736.9 608.4 733.4 613.9 729.7 619.3 726 624.6 722.2 629.9 718.3 635.2 469.5 429.5 470.4 428.5 471.2 427.4 472.1 426.4 472.9 425.3 473.7 424.3 474.5 423.2 475.3 422.1 476 421 476.8 419.9 477.5 418.8 478.2 417.7 478.9 416.5 479.5 415.4 480.2 414.2 480.8 413.1 481.4 411.9 482 410.7 482.5 409.5 483.1 408.3 483.6 407.1 484.1 405.9 484.6 404.7 485 403.5 485.5 402.2 485.9 401 486.3 399.7 486.7 398.5 487 397.3 487.3 396 487.7 394.7 488 393.5 488.2 392.2 488.5 391 488.7 389.7 488.9 388.4 489.1 387.1 489.3 385.9 489.4 384.6 489.5 383.3 489.6 382 489.7 380.8 489.8 379.5 489.8 378.2 489.9 376.9 489.8 375.7 489.8 374.4 489.8 373.1 489.7 371.8 489.6 370.6 489.5 369.3 489.4 368.1 489.2 366.8 489.1 365.5 488.9 364.3 488.7 363.1 488.4 361.8 488.2 360.6 487.9 359.4 487.6 358.1 487.3 356.9 487 355.7 486.6 354.5 486.2 353.3 485.9 352.1 485.4 350.9 485 349.7 484.6 348.6 484.1 347.4 483.6 346.3 483.1 345.1 482.6 344 482 342.8 481.5 341.7 480.9 340.6 480.3 339.5 479.7 338.4 479 337.4 478.4 336.3 477.7 335.2 477 334.2 476.3 333.2 475.6 332.2 474.9 331.1 474.1 330.1 473.3 329.2 472.6 328.2 471.8 327.2 470.9 326.3 470.1 325.4 469.3 324.4 468.4 323.5 467.5 322.6 466.6 321.8 465.7 320.9 464.8 320.1 463.9 319.2 462.9 318.4 462 317.6 461 316.8 460 316 459 315.3 458 314.5 457 313.8 456 313.1 454.9 312.4 453.9 311.7 452.8 311 451.7 310.4 450.6 309.8 449.5 309.2 448.4 308.6 447.3 308 446.2 307.4 445.1 306.9 443.9 306.3 442.8 305.8 441.6 305.3 440.4 304.9 439.3 304.4 438.1 304 436.9 303.5 435.7 303.1 434.5 302.7 433.3 302.4 432.1 302 430.8 301.7 429.6 301.4 428.4 301.1 427.1 300.8 425.9 300.5 424.7 300.3 423.4 300.1 422.2 299.9 420.9 299.7 419.6 299.5 418.4 299.4 417.1 299.2 415.8 299.1 414.6 299 413.3 299 412 298.9 410.8 298.9 409.5 298.9 408.2 298.9 406.9 298.9 405.7 298.9 404.4 299 403.1 299 401.8 299.1 400.6 299.3 399.3 299.4 398 299.5 396.7 299.7 395.5 299.9 394.2 300.1 393 300.3 391.7 300.6 390.4 300.8 389.2 301.1 388 301.4 386.7 301.7 385.5 302 384.2 302.4 383 302.7 381.8 303.1 380.6 303.5 379.4 304 378.2 304.4 377 304.8 375.8 305.3 374.6 305.8 373.4 306.3 372.3 306.8 371.1 307.4 369.9 307.9 368.8 308.5 367.7 309.1 366.5 309.7 365.4 310.3 364.3 311 363.2 311.6 362.1 312.3 361 313 360 313.7 358.9 314.4 357.9 315.1 356.8 315.9 355.8 316.6 354.8 317.4 353.8 318.2 352.8 319 351.8 319.8 350.9 320.6 349.9 321.5 349 322.3 348 323.2 347.1 324.1 346.2 325 345.3 325.9Z" fill="none" stroke="#3a2e10" stroke-width="12" opacity="0.5"/></g><path d="M489 390l3 0l0 -2l3 -3l-2 -4l0 -2l2 -3l-2 -2l0 -2l-3 0l0 2l3 -2l-2 -2l-2 -2l1 1l0 2l0 1l1 -2l-1 -1M489 390l-1 1l4 -1l-1 2l0 3l4 2l3 2l8 4l-2 6l-7 2l6 7l1 -9l-5 -3l7 -3l-3 -8l-3 -5l9 0l6 -4l14 -4l16 7l15 -6l14 -25l2 -36l-26 -23l4 29l22 -6l22 -8l-24 -21l2 29l20 17l12 20l2 36l-19 26l-11 17l-12 -20l23 3l29 0l-10 -26l42 26l-4 25l19 17l22 19l19 17l18 5l16 -2l-3 11l-10 9l2 12l12 11l-2 -12l-10 1l2 16l10 -5l4 -5l-6 -7l9 -3l9 4l5 -2l3 0l0 -5l-3 5l1 6l2 3l-1 2l3 2l-1 2l0 1l-1 2l-3 -2l-1 2l-4 -4l5 2l2 3l-3 -1l3 3l-3 1l0 -4l-4 2l0 -6l4 -3l3 0l-5 -4l6 2l2 -2l-4 -1l-4 1l2 4l1 5l3 -1l2 -2l0 -1l-2 -3l3 1l1 -2l0 -1l1 -2l0 -1l1 -2l0 -1l-1 -2l-5 1l4 -3l-4 -2l1 -5l3 -2l-6 -4l3 6l-6 3l2 7l-7 -5l5 -2l5 2l5 0l-4 -5l-9 -1l6 -5l2 -4l4 -2l4 -2l-8 -1l4 3l2 4l-6 -2l4 4l2 -2l4 2l2 -2l-3 -2l-5 -2M489 390l0 -2l3 0l5 -1l3 3l4 -6l11 2l3 12l-9 -2l-3 7l9 2l-11 4l6 6l-7 3l-7 6l-6 -4l-3 4l5 5l4 -5l-9 0l-1 -4l4 0l-1 -7l2 -3l6 1l2 -5l-1 -7l-5 4l-1 -4l3 -2l-5 0l2 2l6 0l5 -4l-7 -2l4 -3l0 -4l4 -2l5 6l9 8l4 15l5 18l23 -7l18 -6l-8 16l20 4l-13 14l-8 12l14 -2l-6 -10l-12 -4l-3 10l7 6l-12 2l-6 3l-6 -4l-7 -7l1 -5l-10 -2l-1 8l-2 2l-4 0l-2 -2l-2 2l-1 -1l0 -1l0 -3l-4 1l-1 -1l-1 -1l0 -1l-3 -1l-1 -1l2 -2l-1 3l2 1l1 1M492 390l5 -3l-2 -2l-2 -2l0 -2l3 -2l-1 -3l-4 1l2 -3l-3 0l0 1l3 -1l4 -2l-2 4l6 1l1 -6l-5 -2l-5 -1l0 -2l3 -4l2 4l-5 0l0 -3l3 -1l4 -2l5 3l-2 8l-5 1l-4 0l2 -1l-3 -3l-3 0l0 -2l3 0l-3 -1l0 1l3 2l-1 2l-1 1M492 390l-3 -2l0 -1l0 -2l1 -1l0 -2l0 -1l0 -2l3 0l3 0l5 -2l-4 6l-2 2l-4 1l2 -3l-3 -1l3 -1l-3 -2l0 -1l0 -2l0 -1l1 2l2 2l-3 -1l1 -1l-1 -1M492 390l4 3l-1 4M432 299l1 2l0 1l2 1l1 0l2 -2l2 1l2 1l2 1l2 1l2 2l2 -1l2 2l2 1l2 1l2 1l2 1l2 2l2 2l-3 -1l1 -1l1 -5l-3 3l-2 2l0 -3l-3 2l-1 -1l2 -2l-1 3l2 0l1 -2l0 -2l-4 0l3 -4l-1 -5l5 0l2 -7l-4 -6l4 -8l11 9l-11 5l6 5l-8 2l-4 5l-5 3l-2 2l-1 -1l-1 -1l-1 0l-2 -1l-1 -1l0 -2l-1 2l1 0l2 -1l-1 2l3 0l-1 1M432 299l3 -3l2 -6l3 -7l-7 -4l-6 -8l0 -11l10 -12l17 -3l-5 14l-12 -11l-22 3l-16 1l-2 -14l18 13l8 -13l14 10l8 -18l9 15l12 -15l-21 0l-22 8l-26 0l-16 -7l5 23l13 -2l-4 12l-9 -10l-18 7l-1 12l1 11l8 -3l-9 -8l11 1l-2 7l8 1l1 7l3 6l3 -1l-1 4l-2 -3l-2 2l-1 4l3 0l0 -2l-3 2l-2 -1l-2 1l-2 0l-1 2l-1 -1l2 -1l2 -2l0 2l0 3l-3 -1l-2 2l2 0l1 -1l-1 -1l0 2M432 299l-1 -4l-2 -1l-2 -3l4 -6l6 5l5 3l-7 3l3 1l0 4l-1 3l-1 -1l0 -3l2 1l1 3l1 -2l0 3l2 -2l-1 2l-1 0l-1 -1l-2 0M432 299l4 -1l2 3l4 -3l-2 4l3 -1l-1 2l1 3l-2 -1M432 299l-2 0l-2 2l-2 0l-1 -1l-2 -2l-1 0l0 2l2 0l1 0l3 -2l-3 0l-3 0l-3 1l0 -2l-2 1l-2 1l-2 0l-1 -3l-2 2l-2 1l0 -3l2 2l-1 1l2 0l1 0l1 0l1 -3l1 -4l-7 0l-3 0l-4 0l-3 1l-6 -2l-4 4l-4 0l1 -6l-5 5l-2 4l-1 4l-4 0l-2 3l2 -1l0 -2l-1 -5l-7 -1l-2 5l-7 4l-3 2l-4 3l-3 2l-3 2l-3 -2l-2 1l0 -3l1 -3l-4 -3l7 -3l-3 6l-4 1l0 -4l-3 4l3 0l3 2l2 2l6 0l3 4l-1 4l1 2l-1 1l-1 1l-2 -1l1 -2l1 3l-1 1l-1 -2l-2 -1l0 2l2 -1l-1 2l1 1l1 -1l-2 0l-1 -1l-1 -1l-1 -1l1 -2l1 2l-1 1M432 299l-1 3l2 -1l2 2l1 -3l-3 1l-1 1l1 0M436 298l-3 3M436 298l-1 -2l-4 -1l0 -3l6 -2l9 0l-6 -7l0 -12l9 -12l-22 1l-12 -9l4 16l8 -7l13 11l-7 8l-2 6l9 -2l9 -3l10 7l15 1l-5 10l12 -2l8 8l5 12l-6 9l3 4l-7 2l4 -6l-2 -7l-8 -5l-4 -3l-5 3l-4 -2l-3 3l-3 1l2 0l-1 1l-1 -1l1 -3l-2 -3l-2 1M436 298l2 -1l4 1l1 3l1 3l4 -3l-2 4l3 -2l1 3l-1 3l-1 -2l0 1M436 298l0 2M582 176l-23 20l30 23l-7 -21l-23 -2l-41 -6l-14 -19l8 -27l0 -19l15 -4l2 -10l12 -1l12 10l-5 9l-8 -11l-13 3l-9 -10l11 0l-5 -6l-6 6l-6 14l-7 -9l-6 -16l-4 -5l-1 13l5 -8l4 -6l-8 1l-11 -7l1 -6l2 -3l4 1l3 -4l-2 -2l-2 0l-2 0l-2 -1l-2 0l-2 0l-2 -1l-1 -2l-1 0l-2 0l-1 0l-1 2l-2 -1l2 -2l1 1l1 2l0 -2M582 176l1 -18l14 -2l-11 -13l3 -12l-11 2l-5 -8l-9 -6l-11 1l-13 -2l1 -8l1 -10l1 -5l6 0l3 -4l-2 -2l2 0l0 2l4 0l2 -2l1 0l2 1l1 0l-1 1l-2 -2l-1 2l0 -2l-1 0l-3 0l-2 0l0 -2l-2 2l-3 0l-1 -2l-2 0l0 -3l-2 1l-2 -2l-1 0l-1 -1l-3 1l-1 -2l-2 2l3 0l0 -1l-1 -1l-1 0l-2 -1l-1 0l-1 0l-2 -1l-1 3l2 1l-2 5l-8 2l1 -4l-5 -3l1 -3l1 -2l1 -1l1 0l2 0l1 1l1 0l2 0l1 1l-1 2l-1 1l-4 4l-5 2l0 -5l-5 4l3 5l6 -2l6 4l2 -6l6 -1l-4 -4l1 -2l-2 -2l-1 0l0 3l3 -1l0 -1M582 176l0 22l18 -16l-18 -6l-21 -2l-2 22l-24 -19l-31 -6l-30 -3l-4 -23l-20 14l-21 -20l-11 17l32 3l24 9l17 -15l-21 -8l0 -20l-30 -2l-11 16l-20 -5l9 22l-30 -9l-15 -15l-15 -6l-14 -9l-13 -5l-11 4l-10 -6l-3 -8l-6 7l-9 -1l-5 -5l-5 -1l-3 2l1 3l2 -5l-2 -2l-1 4l-3 3l3 6l7 5l6 -4l0 -6l0 -4l-4 -4l3 -1l3 -1l4 1l0 -4l4 -1l0 3l5 5l-5 1l-1 6l-9 5l4 6l-10 -2l-6 5l-1 -10l-5 3l-1 5l-10 0l-6 3l-5 3l-10 2l-4 -2l-1 -3l-2 0l-1 -2l-3 0l2 -1l1 0l1 -1l1 -1l1 0l2 -1l2 1l2 -1l2 -1l2 -1l1 -1l2 -1l-2 2l-3 1l-2 -2l0 3l-2 -1l0 2l-2 2l-2 3l4 1l1 4l4 6l6 -8l8 1l7 7l-12 1l-3 -9l-4 -2l-6 4l-3 10l7 -4l9 1l5 -8l-3 -4l2 -6l4 3l-3 7l12 0l-5 7l6 9l4 13l16 5l24 -5l-3 -17l17 5l-14 12l-12 30l-7 16l2 14l11 15l20 6l-15 8l-5 -14l16 -8l19 -10l4 -21l18 22l13 16l33 -7l9 14l11 -26l11 18l12 -21l-23 3l-14 -20l-2 -36l-29 13l-1 -22l21 -13l-16 -7l-20 5l-7 -17l-8 11l-3 -16l10 -6l-3 -7l-10 0l-1 -7l10 0l1 7l8 -1l-5 8l14 -5l3 -7l-4 -7l7 -1l7 -4l1 8l4 -9l-5 1l-3 -5l-4 0l-3 5l-4 5l-4 5l-6 -6l-7 6l-9 7l-8 -1l7 -6l6 -4l4 4l13 0l5 9l10 -6l4 -5l8 -5l-4 -4l4 0l0 4l5 -5l-5 1l3 -6l-2 -3l-2 0l-2 -1l-1 -1l-1 1l-2 2l-1 -2l-1 0l-1 0l-1 1l2 -1l0 2l2 0l0 -2l-1 0l-1 2l-1 2l-2 2l4 2l-1 3l-5 0l-2 4l8 4l5 5l3 -10l8 -1l-3 -4l5 0l-2 4l6 0l-4 -4l3 -5l2 -2l0 -3l-2 1l2 2l3 -2l-3 -1l-2 -1l2 0l0 1l1 -1l-1 0M582 176l20 -9l-5 -11l14 -2l2 -11l7 3l1 -9l6 -3l3 -2l3 0l2 3l3 2l3 2l0 -4l-3 2l2 -4l-5 2l1 -2l-3 -1l0 -3l-3 3l-1 -4l4 1l3 -1l1 0l1 1l1 1l1 1l0 2l1 -2l-1 0l-2 1l1 -2l-3 1l1 -3l-3 2l2 -2l-2 -1l-1 2l1 1l-1 2l3 -1l2 -2M582 198l25 6l-18 15l-48 5l18 -28M178 184l3 -2l-1 3l-2 -1l0 -2l3 0l1 3l-2 0l1 2l2 1l2 -1l3 1l6 -2l5 0l3 3l-4 5l0 2l1 3l3 0l-2 1l-1 -1l-1 3l2 -2l-1 2l1 1l0 1l1 1l1 0l2 -1l3 -3l2 2l7 -3l-5 -2l-2 -4l-4 5l-3 0l1 -2l6 -3l1 -4l6 -6l8 -9l1 10l-9 -1l-11 0l0 -6l-7 2l1 6l-5 4l1 4l1 3l2 -1l-2 3l3 0l-2 2l-1 -2l0 -2l-2 -2l1 -1l-3 -1l0 2l3 -1l3 0l-2 3l-2 2l-1 -1l-1 -1l-1 -1l-1 0l2 -1l2 0l-1 3l3 -1M178 184l1 2l-1 -1l-1 -1l-1 -1l-1 0l3 -1l0 -3l-2 -1l-2 2l0 -2l-2 2l-1 -1l-1 -1l-1 0l-1 -1l2 -2l-2 -3l-1 1l-2 -1l-1 1l1 1l2 -1l-1 -2l-1 1l0 2l1 1l1 -2l1 2l0 -3l-2 -1l1 -1l1 2l0 -3l-1 1M178 184l0 1M178 184l-1 0M178 184l-2 -1l2 -1l3 -3l0 3l5 1l-3 3l0 2l0 1l3 -1l2 0l-1 2l0 1l2 0l1 1l2 1l2 -3l-4 2l-1 2l3 -1l-2 2l2 0l0 2l2 -2M180 185l0 1l-1 0l1 -1M772 531l2 -1l1 -2l0 -1l1 -2l0 -2l1 -1l0 -2l-2 -3l-2 -3l3 -2l-1 -4l4 0l2 -2l0 2l0 2l-1 1l-3 -1l-2 -2l3 -3l4 0l-1 1l-3 -1l1 3l2 0M772 531l2 0l-1 2M772 531l1 3l-4 0l-2 -2l1 4l-4 -4M772 531l-1 -2l3 1l0 1M772 531l-3 3l3 2l-4 0l-3 2l-6 -4l2 5l-2 3l0 4l-5 2l2 6l5 1l-1 2l-4 -3l3 -2l2 3l3 2l-4 0l-6 0l2 -3l-8 -5l-5 -4l3 10l-13 -5l-12 5l-14 -4l-13 1l-10 9l4 13l8 6l18 -3l-20 -12l0 -13l-7 -17l20 16l-13 14l-6 9l-7 3l-7 0l-1 5l2 7l-3 4l2 1l-3 2l1 -3l-2 2l-2 -3l4 1l-1 -3l4 -1l6 0l0 -5l7 -10l-2 14l10 -8l-2 -15l-10 -4l-8 -8l18 -1l-20 -11l0 -20l-15 -10l0 -23l8 -25l16 -31l-35 14l-28 -25l32 0l31 11l8 29l-24 2l-27 6l8 -23l-29 1l2 23l-17 -5l6 16l11 -11l3 22l16 -23l-19 1M771 529l1 -2l3 0l0 -3l1 -1l-1 -2l-4 -1l0 -4l-6 0l-10 0l-16 -3l-13 -9l3 18l12 3l0 8M689 174l-4 -1l4 -1l0 -1l-1 -1l-1 -1l-1 -1l-2 2l-1 1l2 2l-3 2l1 -4l-4 -1l3 5l3 4l-2 4l4 4l2 -6l-6 2l-7 1l-11 3l13 3l5 -7l-4 -4l-3 5l2 6l9 -3l5 4l4 1l1 6l3 4l7 3l-1 -3l-6 0l-7 0l4 -4l4 -2l-5 -4l4 -3l-1 -4l-1 -2l-3 0l-2 -2l-2 -2l-2 2l4 0l-2 5l-4 1l1 8l8 -3l-1 -5l3 -4l-1 -2l-2 2l0 4l4 -2l3 1l1 -1l1 1l1 1l-3 1l3 0l0 -1l-3 -1l2 0M689 174l0 -2l1 0l-1 -1l-1 0l1 1l2 1l-1 -1M689 174l2 -1l1 1l1 1l0 1l-2 3l-1 -3l2 -2l1 2l1 0l1 1l-2 -1l-3 0l-1 -2l3 0M689 174l-3 2l-1 -3l1 -2l3 1M686 176l5 3l-6 0l4 2l2 5l4 -3l0 -3l-2 1l0 -2l-2 0M686 176l-4 -1l-6 1l0 8l-6 -7l-5 10l-11 1l-13 1l-11 -18l11 4l0 14l14 16l-1 -17l-13 -13l0 -14l12 3l-7 -8l-4 -5l-6 3l-11 -2l-5 -6l6 -5l1 -7l-2 -3l5 1l2 4l1 -4M686 176l-1 3l-6 0l3 -4M686 176l4 0M436 78l-5 0l-4 3l-6 -3l0 5l-6 -1l6 -4l-1 -5l-4 -2l1 4l-6 3l-2 -3l-3 3l-2 -5l0 -3l2 1l2 -1l2 -2l0 2l-2 0l0 -2l2 0l-1 0l-1 0l-2 0l-1 0l-1 2l-2 0l-1 -2l-1 2l0 -2l1 0l1 0l2 0l1 0l2 1l-3 1l-1 -1l-1 1l-1 4l-1 -4l-2 2l0 -3l0 -1l-1 0l-1 0l-2 1l2 0l2 0l2 -1l-2 0M436 78l5 0l2 -3l0 -4l-2 -2l0 -2l-2 2l-1 -2l-1 0l-2 0l-1 0l-1 0l0 2l1 -2l2 1l-1 -1M436 78l-3 3l-2 -3l2 -6l-4 -1l0 -3l-2 1l2 2l2 -2l-2 -1l-2 -1l0 2l-2 0l-2 -1l-2 1l-2 0l-1 -2l-2 1M436 78l-3 -6l-2 -3l2 0l2 0l-1 -2M436 78l0 -5l-1 -4l1 -1l1 -1l0 2l1 -2l1 0l0 2l-2 0l-1 -1M436 78l3 -5l4 2l6 2l3 -4l3 0l3 1l2 2l-2 5l-5 -3l-1 -5l1 -3l2 3l0 -3l0 -2l-1 0l-1 0l-2 2l1 3l4 3l-1 -3l2 -3l1 4l3 -1l-1 3l5 -2l3 0l4 3l-1 -2l1 -4l-1 -2l-1 0l-2 0l-1 0l-1 0l-1 -1l-1 3l1 3l0 5l-7 2l-6 1l1 -4l-4 -1l-8 1l-8 3l-6 0l-6 2l-9 3l-11 -3l7 9l4 7l12 0l-17 10l5 -10l5 -7l7 7l5 8l-22 2l-12 -8l17 -2M441 78l5 4l6 0l-6 6l1 11l11 3l5 -7l8 -4l13 -3l-5 -4l-4 -3l-3 -4l2 -2l0 -3l2 0l2 0l0 -2l-2 2l-2 3l-3 0l3 -3l0 -3l-2 0l0 2l-2 0l-2 3l3 1l-1 -4l-2 -2l0 2l-3 3l-4 -1l-2 -3l-1 4l-2 2l4 0l5 3l3 -5l1 6l3 -3l5 -2l-1 -3M441 78l-4 7l-4 -4l-3 7l-6 11l14 -4l9 4l-4 10l15 -7l6 10l6 13l-20 12l-21 2l-9 -20l-13 -10l-14 4l0 14l14 -18M441 78l-2 -5l4 -2l0 -2l-1 -2l1 0l2 0l1 0l-1 2l-2 2l3 2l-3 2M777 365l3 -3l5 -3l-1 -2l0 -2l3 0l-2 -2l-2 -3l0 -2l3 0l0 1l-3 1l3 1l0 -2l-3 -1l1 -2l2 2l0 -2l-2 0l-4 -1l3 3l-5 0l5 2l-5 1l0 -3l-8 -3l-7 -5l4 -5l-7 -8l-1 -8l2 -5l-7 -6l-13 1l11 -8l2 7l4 -5l-6 -2l8 -4l2 -3l-1 -4l-2 -3l-7 1l-7 2l0 -11l-3 -5l1 -5l-7 -4l1 -9l-4 3l3 6l8 -3l-7 -6l-4 -6l-7 -3l-5 -4l7 -2l-2 6l8 -4l-6 -2l1 -5l-2 -4l-2 -3l-6 -2l1 -5l-3 -4l-5 -6l5 -3l1 -2l-5 0l-6 -2l1 5l4 2l-3 3l-10 1l-11 -8l-10 -3l1 -8l14 5l-5 6l-9 -11l-1 -7l-8 9l-5 -12l-5 -13l-19 1l10 -5l2 -6l8 4l4 -5l2 -4l-3 -2l-2 -2l3 -2l-2 -2l-1 -1l-2 -1l2 -2l1 1l-3 1l-3 2l-2 -4l3 -1l-3 -1l-2 -2l-1 -1l-3 3l-3 -2l4 -2l-1 4l4 0l-1 -3l-2 -1l0 -3l-1 -1l-1 1l0 -2l-1 -1l-1 -1l-1 0l-2 2l-2 3l4 0l1 4l1 -3l1 -2l-3 -1l1 -3l-3 2l-2 -1l1 -3l-2 1l-2 -1l-2 -1l-2 -1M777 365l4 4l2 4l4 -2l-1 -2l0 -3l0 -2l-1 -2l0 -3l3 -1l-4 -1l4 0l-4 -2l1 -2l1 -2l1 1l-2 1l2 1l0 -2M777 365l-4 2l-9 -6l6 -4l1 -6l7 -3l2 -3l-1 -3l0 -2l3 -2l1 -2l1 1l0 2l0 1l1 2l0 1l-1 3l1 -1l0 -2l-3 1l2 2M777 365l7 0l1 -3l2 -2l-2 -1l-5 0l4 -2l-2 -3l1 -4M777 365l0 -4l3 -2l0 3l5 0l4 1l-3 1l3 0l0 -1l-1 -2l0 -1l-1 0l1 -2l0 -1l-1 -2l0 -1M773 367l8 2l5 0l2 -1l-2 -2l3 0l-3 -2l-2 1l2 1M773 367l-3 -10l-6 -5l-1 -12l7 -1l5 -5l-1 -3l-8 -2l-6 -2l4 -3l7 -4l2 -2l4 -1l0 -2l0 -2l-4 -1l-4 0l-2 -5l1 -3l4 -1l1 -1l1 1l-2 0l2 2l-3 1l1 -3l-2 -3l3 2l0 -1l-1 -2l-2 1l-3 1l-3 -1l1 -5l-3 -1l-4 -1l1 -6l3 -4l-1 -2l0 -2l-6 -1l4 -4l-1 -2l-1 -2l-1 -2l-1 -2l-1 -2l-1 -2l-1 -2l3 -1l0 1l-3 0l2 -2l1 1M773 367l4 -6l3 1l4 3l2 4l4 1l-3 1l0 2l-4 0l-1 3l5 2l2 3l1 2l-2 2l-3 0l3 2l0 -2l-2 -2l3 -2l-4 -1l2 -2l2 -3l-2 -2l0 2l-4 -2l-4 1l-8 5l-2 6l2 10l-12 -4l10 -6l-14 -7l-19 -7l-12 16l11 23l-1 18l21 8l8 9l8 5l8 -3l4 3l5 -1l3 1l0 -2l1 -1l0 -2l-4 0l1 -3l0 -2l-3 -2l3 4l-6 1l-4 4l-3 -4l-5 7l-1 -12l-7 7l-7 10l4 8l-10 1l7 11l3 -12l6 11l10 -4l1 -5l-8 -2l7 7l-5 10l3 4l-1 4l-9 -7l10 3l7 0l3 -3l0 -3l0 -2l2 -1l-1 -4l1 -2l0 -3l0 -2l1 -2l0 -3l0 -2l1 -3l0 -2l-5 -2l-1 4l6 -2l3 0l0 -2M773 367l6 7l2 -5l6 2l3 1l0 1l0 2l0 1l-1 -1l-2 0l0 3l4 0l-1 -2M773 367l-4 7l2 5l-16 -1l-6 8l-13 -15l-16 -10l4 26l25 -1l10 5l-4 -13l0 -15l-19 8l7 -14l-23 4l9 -13l3 -20l8 -9l1 -10l-14 -7l-21 -2l-17 9l3 24l-41 5l12 -23l26 -6l-1 -18l18 9l1 20l-18 -11M743 269l6 -4l4 -3l2 -2l1 2l-3 0l3 1l0 -1M743 269l1 -7l5 3l5 -1l3 0l-1 -1l-2 1l-3 4l4 -2l2 -2l1 2l-3 0l3 1l-2 1l3 0l1 2l0 1l1 1l1 2l0 1l-2 2l-5 1l-4 -1l-6 2l7 9l1 -7l2 -3l3 4l1 5l4 -2l-1 -2l3 -2l-1 -1l-3 1l3 -2l0 1M743 269l6 4l-7 1l-10 -3l4 -6l-13 3l10 -9l0 -9l1 -7l3 0l-1 4l-3 3l8 0l-4 6l6 -3l-2 -3l-5 -3l-2 -4l0 -5l-6 3l-7 -9l0 11l-11 -8l-13 0l-10 7l9 15l-4 16l20 -6l-16 -10l3 -12l-2 -10l9 -6l9 1l4 -3l2 5l4 -3l0 -5l-5 -2l5 -2l3 -1l-3 -2l0 3l3 1l3 -1l1 1l0 1l1 2l-1 2l2 -1l-1 -1l-3 0l2 -2l-3 0l2 -2l-1 -1l-2 0l0 2l1 1l3 -1M743 269l-11 2l-9 -3l-1 12l-10 -13l11 1l-14 -10l-13 -1l-16 2l7 -17l12 3l10 13l3 9l-6 15l0 18l16 -9l0 -11l10 -9l4 7l6 -4M743 269l8 -1l5 0l-4 3l5 -1l2 -2l-1 -1l0 -1M697 617l1 1l2 -2l-2 -5l2 -4l2 -6l-5 -5l-7 1l-3 5l3 3l-2 2l-1 -5l-4 0l-2 -2l-3 -2l-1 3l-2 -1l0 -2l-1 -4l-2 3l3 1l3 0l0 4l1 1l2 -3l-3 2l-1 -1l-2 -3l-1 0l1 2M697 617l0 -2l1 -4l-2 1l-2 -1l4 0l-2 -5l-6 -1l0 -8l-4 0l1 5l-2 1l3 4l3 2l-1 -4M697 617l-2 -1l2 -1l-1 -3l-4 2l-1 -2l0 -3l3 2l-3 1l-2 -1l-1 -1l-1 -1l3 1l-2 -3l-4 0l1 -4l-2 -1l-4 1l2 1l1 1l0 -1l1 -2l3 -5l-5 3l1 -5l-4 3l-2 -5l-4 0M697 615l3 1l2 2l4 0l1 3l2 2l2 2l-1 3l1 1l1 1l2 0l5 -1l-2 2l-2 2l-1 -3l3 1l0 3l-2 -1l-1 -1l-2 -2l2 -3l5 2l-3 -6l-5 2l0 4l3 -2l0 3l0 2M697 615l-3 0l2 -3M697 615l1 3l1 2l1 -4l3 -5l-5 0M562 93l1 -2l-1 -1M562 93l2 -2l2 1l-2 2l0 -3l-1 0l-2 0l0 -1M562 93l2 1l-2 1l-1 2l-2 -3l-1 -3l-2 0l-2 -2l-2 2l-3 1l1 -3l-2 -2l-2 0l1 -2l-3 2l1 -2l-1 -1l-1 0l-1 1l0 -2l-2 0l-2 2l0 -3l-2 0l-1 1l1 1l-4 3l2 3l4 1l4 1l1 3l3 -2l1 -4l-5 3l4 1l3 2l4 1l4 1l4 0l3 -2l0 -1l3 -1l-1 -1l1 0l1 1l1 0l2 1l-1 2l-1 -3l-2 2l3 1l2 -2l0 3l-2 -1l2 2l0 -1l1 0l-1 1l3 0l-2 -1l3 -1l-1 2l2 1l2 2l2 1l1 4l1 -2l-2 -2l2 0l0 2l4 -1l-2 3l-3 0l-3 0l-4 2l-4 3l-7 8l-2 8l-14 2l10 10l4 -12l-9 -7l1 -11l-13 1l-9 -8l-3 9l11 7l-10 18l-3 -15M562 93l0 2l-3 -1l3 -1l-1 -2l-3 0l-4 1l2 -1l1 -2l-1 -1l-2 1l-1 -2l-1 2M519 374l-4 12l16 10l-2 -14l15 -7l-5 -14l-5 -11l-16 -3l-5 7l6 12l7 -7l13 2l14 -10l7 32l-16 -8l1 14l-14 7l-13 2l-3 7l-5 10l1 9l-8 -6l-2 12l-9 -1l-6 4l-1 3l-2 3l-2 0l-1 -1l-1 -1l-1 -1l1 -3l-1 -4l2 -4l1 -3l5 -2l-5 -2l-2 -2l1 -1l1 -2l3 1l1 -2l4 1l7 3l1 -5l-1 -3l-3 -5l-3 1l2 3l1 -4l6 3l-3 2l-4 -1l-1 3l-4 -2l5 -1l-5 -1l3 -2l-2 -2l2 -3l2 0l-2 2l3 2M519 374l10 8l0 -10l10 -11M519 374l0 -8l-8 -2l2 -10l-7 2l-2 7l7 1l-5 -8l0 -6l7 4l13 5l-8 -12l-8 -6l3 -10l-5 -9l-6 -8l-13 -10l11 -5l12 -4l0 -14l-10 -11l8 -17l-13 -21l22 -14l14 25l-36 -11l-31 -2l-9 -21l-10 -18l3 -32l0 -22l20 8l17 -13l25 -7l18 11l18 -7l-1 21l18 6l18 2l3 -15l-8 -10l-16 -6l11 -2l3 -7l-12 1l-5 -5l-6 6M519 374l-10 -4l-7 1l8 5l5 10M519 374l-9 2l-6 8l-3 -7l-4 -5l0 -3l0 -3l-5 2M519 374l10 -2l-10 -6l-10 4l-5 -7l-7 3l5 5M529 372l15 3l9 -24l21 7l34 1l-25 19l27 17l47 -12l-5 38l19 -14l12 25l15 -25l26 -20l22 9l-11 14l11 9l10 -4l0 11l-1 10l15 2l6 5l0 -8l-6 3l-1 -9l-13 -3l15 -2l6 -6l8 -3l1 3l-2 2l1 -5l-8 -3l-10 -3l-11 6l0 -11l-21 6l-16 5l5 -28l-18 -10l-23 9l-26 -3l14 -27l12 30l15 21l21 8l15 13l-27 1l-24 3l32 15l18 13l17 4l-11 9l-27 -2l-23 11l-30 6l30 20l0 -26l30 7l-11 10l-19 9l-30 3l-17 -3l-8 13l6 14l-10 2l-9 -2l-5 1l-4 -3l-5 -1l-3 -6l-7 -1l-5 2l-2 -2l-2 -1l-2 -2l-2 -2l-2 -1l-3 1l1 1l2 -2l0 3l2 -2l-1 3l3 -1l2 -5l-6 2l3 -5l3 3l-4 3M529 372l-3 -13l8 -9l5 -12l15 -10l20 30l22 -19l2 -25l-9 -37l-29 -25l-2 24l-8 23l24 -6l-16 -17l31 1l36 -1l15 -17l4 -21l-13 -16l-24 -18l7 36l-25 -21l-6 21l-23 12l-33 13l-15 16l-16 5l16 9l1 19l-11 0l-8 2l-8 2l-8 1l0 -6l-7 3l-2 -3l0 -6l4 -4l1 7l-3 6l2 2l5 -5l5 -4l-9 1l-5 -3l-6 2l2 2l4 -4l-7 -2l-1 -5l-5 -8l0 8l-5 2l-1 4l0 4l2 0l2 -1l-1 2l1 1l0 -3M697 179l-1 -1l-1 -1l-2 2l0 -3M697 179l0 2l1 -1l-1 -1l-2 1l1 -2l-3 1l2 1l2 1l2 0l-1 -1M697 181l3 1l-2 1l3 0l-2 2l3 -1l1 1M206 138l-1 1l1 1l1 2l-2 0l-2 -1l-1 1l-1 1l-3 1l1 -1l2 0l-1 -1l-1 1M206 138l1 0l1 1l-1 3l0 2l3 3l4 -1l5 6l-5 4l-6 5l-6 4l5 5l-2 8l8 -2l3 8l4 7l5 -6l14 -1l-15 -9l11 -8l4 17l6 16l15 -9l8 -16l9 -18l13 -11l24 -6l-21 22l-25 13l-17 -10l-12 19l12 0l9 7l-4 16l-11 -7l-8 1l-10 3l7 4l3 -7l4 7l-2 10l-5 0l-5 1l-2 -2l-3 3l1 3l0 2l1 1l3 -1l1 2l0 2l-1 -1l-1 -1l2 0l-1 1M206 138l0 2l-2 0l1 -1M207 138l-1 2l-1 2l-1 -2l-1 1l0 2l-1 -1l-2 0M207 138l1 -1l0 2l-2 1M767 301l1 3l-5 1l-9 3l10 1l5 3l-2 2l-6 0l3 -5l3 -2l-4 -2l1 -5l-6 3l2 -6l4 3l4 -3l2 -1l-3 -1l-2 0l-5 2l-2 -4l3 -3l3 -3l-5 0l-4 -2l-3 3l6 5l-8 2l-5 -5l-12 1l-11 -11l14 -2l9 1l8 2l-2 -4l-2 -4l-4 6l-6 7l6 4l-6 8l2 11l-16 6l-19 -15M767 301l-4 4l-5 -2M767 301l1 -4l-3 -2l2 -2l-5 1l4 -3l-5 -1l4 -1l-1 -2l-1 -2l3 -2l-4 0l-4 -1l3 -3l-1 -2l-1 -3l2 -2l-3 0l2 -1l-3 -1l3 0M768 304l3 2l4 0l-1 -1l0 -2M768 304l2 -4l-2 -3l-1 -2l0 -2l-1 -2l-1 -2l2 -2l0 -1l-3 1l3 0l1 1l-3 1l3 1l1 1l-2 2l2 -1l0 -1l-3 0l2 -1l0 -2M490 381l3 0l4 2l-1 -4M576 102l3 -1l2 0l0 1l-2 2l3 2l5 5l6 2l4 2l3 -4l2 2l2 -2l0 -2l-1 -1l-2 0l-1 -1l-1 -1l-1 0l0 1l1 -1l-1 3l2 -2l0 3l1 -2M576 102l-1 -4l2 -2l1 1l-3 1l-2 3l-1 -3l-4 4l-7 2l3 -4l-3 -3l-4 4l-4 -5l-5 6l-7 8M576 102l1 -3l2 0l0 2l0 3l0 2l1 4l2 -4M576 102l3 4M576 102l-5 4l-3 -4l-4 -2l0 -5l-2 0M576 102l-1 6l-4 -2l-6 2l-4 -4l-7 5l-6 -7l1 -7l-7 5l-10 2l-8 3l6 -8l-6 -3l0 11l-13 -3l-12 -2M576 102l-3 -1l-5 1l-3 6l-11 1l3 -8l0 -4l2 -3l2 -3M576 102l3 2M223 214l0 3l4 0l-4 2l-3 0l1 2l2 -2l-1 3l2 -2l-1 3l-1 -1l-1 -1l-1 -1l0 -1l-1 0l1 1M223 214l-3 -2l-2 -2l-4 -3l-2 -2l-3 -2l2 -5l-4 3l-2 -2l-2 -2l-4 2M223 214l-3 3l0 2l-2 0l2 -2l-3 1l1 -2l5 -2l5 1l1 4l-2 4l-2 0l-1 1l1 1l3 -1l-2 2l1 1l2 -2l-1 2l-1 0M223 214l6 -3l5 -3l7 0l4 -8l6 -16l0 -19l10 -11l0 -11l6 -8l14 -2l15 -13l5 -11l5 11l14 -4l-7 11l1 13l24 -11l20 -3l-1 17l16 -11l7 -22l-15 -6l1 11l14 -5l-1 -11l-9 -3l-9 -6l1 -6l6 0l-2 -4l-6 -1l0 -3l-1 -2l-2 1l-2 -1l1 2l-2 -1l0 2l-1 -2l-2 0l-1 0l0 3l-1 -2l-1 0l-2 0l0 3l-1 3l-3 1l-2 -3l-2 0l-2 1l-2 0l-2 1l-2 0l-2 1l2 2l0 -3l-2 -1l2 -1l1 0l1 0l2 1l-1 -2l-1 1l0 2l-2 3l-2 4l-3 4l6 2l4 -5l1 5l-5 0l-3 -6l-4 1l1 3l-5 1l-5 2l-2 -3l-5 -1l-4 0l-2 2l-3 -2l-1 3l4 2l-4 2l4 4l0 -6l3 -1l2 6l6 -2l2 -4l1 -4l1 -3l-1 -3l2 0l2 -1l2 0l2 -1l-2 -2l-1 1l-2 0l-1 1l0 2l-1 3l4 0l-3 -3l-1 -2l1 0l2 1l1 4l3 1l-1 -4l-3 -1l-1 -2M223 214l3 -6l-6 4l-2 4l-2 1l-1 -1l-1 0l-1 -1l-1 -1l-1 -1l0 -1l-1 0l1 -2l3 -3l1 -3l1 -4l5 0l6 4l-2 -9l0 -10l7 7l7 -8M228 215l-1 2l0 3l2 -1l3 -5l7 4l0 6l-5 0l0 5l-1 -1l-3 1l1 -3l-1 1M228 215l4 -1l2 4l2 4l-2 2l-1 4l-2 -2l3 -2l3 5l6 0l7 -1l7 0l4 4l-8 4l4 -8l2 -7l13 1l16 3l7 7l16 0l-8 13l-10 5l-1 7l-4 7l3 3l4 2l5 3l5 -2l9 6l3 -7l12 -6l12 4l0 13l18 1l8 -8l-12 -3l-14 10l-2 9l-7 2l-6 6l-2 5l1 3l-3 2l1 1l2 0l0 -1l-2 1M228 215l1 -4l3 3l2 -6l-8 0l1 -4l5 -12l5 9M228 215l-5 2l-3 2M331 112l2 -8l3 -9l8 1l5 8l13 -7M331 112l-4 10l-7 -6l5 -9l6 5M344 117l11 -7l11 5M344 117l-6 12l-7 16l8 19l-22 -7M344 117l-11 -13l-2 -9l0 -7l4 2l0 -3l-4 1l-1 -3l-4 0l-2 -1l-1 -2l-1 0l0 3l-1 -2l-1 2M344 117l5 -13l16 0M344 117l-17 5l-13 18l-14 -8l-4 -12l-16 3l-7 -2l6 -8l1 -6l7 -4l1 -3l-3 -1l-3 3l0 -3l-2 -2l1 0l1 2l0 -3l2 2l2 -2l-3 0l1 2l1 1l1 -3l-1 -1l-2 1l-1 0l-1 1M344 117l-4 -16l-4 -6l7 -7l-8 2l4 -4l3 -3l-5 0l1 -3l-2 -1l0 2l1 2l3 -3l2 -1l2 0l2 0l3 2l-4 1l-2 -1l-1 2l1 5l8 2l-3 -3l-3 -5l-2 6l1 8l-4 5l-7 3l-11 -3l3 -8M408 70l-1 3l-3 0l-3 1l-2 2l-2 3l-4 -2l3 -5l-2 -1l-1 1l0 5l-2 -4l2 -1l3 0l2 0l3 2M408 70l3 3l-1 -3l2 0l2 -1l-1 -2l-1 0l-2 1l0 -1l-1 1M408 70l-1 -1l-1 -1M407 73l4 0l1 -3l0 -3l-2 3M407 73l2 2l-5 -2l-5 3l2 3M407 73l-1 -2l-2 2M788 477l0 -2l0 -1l1 -2l0 -2l-3 -1l3 0l0 1l-4 1l4 1M788 477l-2 -2l2 -1l-3 -3l-2 1l-7 -2l4 -1l-3 -4l-3 -7l-3 -8l-4 4l-4 -9M788 477l0 1l-4 -2l4 1M786 475l2 0M786 475l-3 -3l3 -3l-6 0l3 3l1 4l-5 0l-3 -6M215 132l2 0l-1 0l-1 0l-1 1l1 2l-2 3l-2 -2l-2 0l-1 1l2 1l3 0l4 2l4 -2l3 -2l-2 -4l2 -1l0 5l0 5l-3 -3l-3 5l1 9l7 -5l4 8l-11 -3l-8 0l-1 -5l-5 4l-3 4l-7 1l-2 4l-3 -2l-4 -1l-2 1l-2 -1l-1 1l-1 1l2 0l-1 2l-3 2l-2 2l0 2l4 2l-1 -3l-3 1l-3 1l-1 1l-3 0l-1 0l2 1l-2 2l3 1l0 3l-1 2l2 -1l-1 2l3 -1l2 0l1 -2l1 3l3 0l4 0l-4 3M215 132l0 3l-3 -1l-1 2l-1 -1l-1 1l1 2l1 -2l0 -1l-1 0M215 132l2 2l0 -2l0 -1l-1 1M217 134l2 1l-6 3l0 -2l-2 0M217 134l-2 1l-2 1l-1 -2l-1 1M217 134l2 -2l3 0l-3 -1l-1 -1l-1 2l2 0l0 -1l0 -1l-1 0l-1 1M338 129l-11 -7l-14 5l-7 -7l-10 0M338 129l19 14l-26 2M231 139l-7 -3l7 -1l4 -3l7 -3M231 139l8 0l-4 -7l3 -5l3 -2l-2 -4l0 -3l0 -1l2 0l1 -1l1 2l3 1l-5 0l1 3l-3 -1l-1 0l-1 3l-3 3l-3 0l-3 -2l-2 0l-1 1l2 1l4 0l1 3l6 -3l-4 0l1 -3l-3 0l-1 -2l-1 1l1 2l0 2l-2 2l-5 2l-2 -2l-2 0l-1 2l3 -1l0 2l-3 3l2 3M231 139l-5 8l-8 -4l-4 3l-3 6l-3 9l-6 -6l-4 -2l-3 3l0 -4l-3 0l-2 1l-1 1l-2 1l-1 2l1 3l-1 4l1 3l-7 2l-1 3l7 1l10 -3l6 -5l-2 9l-4 -4l-7 6l-3 -3l-6 -4l-5 1l-3 -1l-2 -1l-1 1l1 1l2 -1l-1 -2l1 -1l1 -1l1 -1l1 -1l1 -1l2 1l1 3l-3 -1l-1 1l-2 2l-2 -1l-1 1M231 139l0 -4l-3 -2l-4 -2l-2 -1l0 -1l-1 -1l1 -1l2 0l1 -1l0 2l-1 3M231 139l4 -7l-3 -2l-1 5M231 139l-7 2l2 6l10 -1l3 -7l11 5l-4 -9M231 139l5 7l-6 9l5 12l16 -2l-8 -12l-13 2l-6 9l0 11l-11 1l-8 8l-3 5l8 1l-5 -6l-6 2l-1 4l-3 4M236 146l14 -2l5 -8l6 7l12 1l17 2l3 16l-12 22l-21 7l6 11l-10 5l-10 5l-7 6l-3 4l3 2l4 5l3 -4l-7 -1l-2 5l-3 0l-2 1l2 1l3 0l1 1l-2 2l1 0l1 1l1 0l2 0l2 1l1 1l-1 3l3 -1l1 1l3 0l0 2l2 2l1 1l2 1l1 1l-1 3l3 -2l-2 -1l-2 2l1 -3l-2 2l-1 -1l3 -1l5 -1l-4 2M236 146l7 7l18 1l16 3M499 73l-2 0l-1 0l-2 2l-2 -1l-2 3l-3 2l-4 -3l-1 -3l0 -3l-2 2l0 -2l-1 0l-1 2l2 0l0 4l2 -3l1 -2l-1 -1l-2 0M499 73l1 0l1 1l2 0l1 0l0 2l-2 4l1 2l-4 3l-4 -1l-4 -4l-1 -3l0 -3l-3 3l0 2l-6 0l-4 -4l1 -3M499 73l-1 2l-2 0l-2 1l-4 1l-3 0l-1 -4l-3 3l1 -3l-1 -2l1 0l2 0l0 2l1 -2l1 3l-1 3l-4 -1l-3 0l-3 -1l3 -3M498 75l1 4l4 3l6 -1l-5 5l-1 -4l2 -2l-3 0l-3 -1l-4 5l1 -6l-5 2l-2 5l-2 -6M498 75l2 1l-1 3l0 6l5 1l5 1l-6 7l9 -2l-1 10l7 9l-13 5l-11 -8l-14 0l-10 17l17 7l25 12l16 12l-24 15l-13 -18l21 -9l18 -8l17 14l11 -11l7 17l6 -14l-9 -15M498 75l-2 3l-2 -2l0 -1l2 0l0 3l3 1l3 -3l-2 0l0 -3l-2 2l-1 -2l-1 2l0 -2l-1 -1l-1 3l0 -3l-2 2l0 -2l-2 2l1 -2l-1 0l-2 2l0 -3l-1 0l-1 0l-2 2l0 -2M537 485l-2 -1l-1 -1l3 -2l0 4l1 1l1 1l2 -2l-3 1l1 -3l-2 2M539 483l-2 -2l-2 -1l4 -3l2 -8l-1 -7l-5 3l-1 -8l-6 1l-7 4l-5 2l2 2l2 1l2 2l2 1l2 2l2 1l1 2l2 2l2 1l3 -4l5 -5l10 2l8 -7l0 11l-9 2l0 8l5 0l3 3l-1 4l-4 -3l2 -4l0 -5l-5 5l3 4l5 -1l6 0l-1 9l3 2l4 -1l-7 -1l6 -5l1 6l3 3l4 3l1 5l7 1l0 4l5 -2l-2 5l3 3l-5 2l-2 2l-1 -1l-1 -1l-2 -1M539 483l2 2l-1 3l3 -2l-1 3l-2 -1l-1 -1M539 483l1 -4l-5 1l-2 -2l-3 2l2 1l3 -1l-2 2l-1 -1l1 -3l6 -1l1 2l-3 2l-2 3M782 457l5 0l4 -1l-1 2l-3 1l3 0l0 -1l-3 -1l-5 -3l6 0l3 -1l0 -1l-3 -3l3 -1l-3 -1l4 0l-4 -2l0 2l0 2l0 3l3 1l0 2l-3 -1l3 2l0 -1M782 457l3 3l2 -3M782 457l-8 1l-5 5l-9 0l7 -9l2 9l-3 11l-9 1l7 6l7 -1l-5 -6l-2 7l-1 7l-8 2l-10 3l-3 9l14 -5l-1 -7l-4 -9l-1 -17l6 -9l-1 -19l14 -7l2 -5l5 5l8 -1l0 3l-8 -2l-7 0l7 6l7 4l3 -1l3 -1l0 3l3 -1l0 -1l0 -2l0 -2l1 -1l-4 0l-2 3l-1 2l-3 5l5 2l-2 3l-7 -1l-1 7l-7 -4M782 457l0 -3l-4 0l5 -4l3 -2l2 -1M782 457l-1 4l-4 4l4 1l5 -2l4 0l-3 -2l3 -1l-3 -2l-2 1l2 2l3 1l0 -2l0 -2M782 457l-4 -3l-4 4l-7 -4l-11 1l-12 -3l11 -16l-24 5l3 -13l12 -9l10 7l10 -10l-10 -1M781 461l5 3l3 2l-3 0l3 1l0 -1l1 -2l0 -1M781 461l-7 -3M781 461l4 -1l1 4M781 461l0 5l5 0l3 3l0 -2M625 121l1 1l1 0l-1 2l-2 -1l-2 -1l-1 2l3 -1l0 -3l-2 2l1 -2l-1 -1l-2 -1l-1 -1l-1 0l-1 -1l-2 2l1 -3l1 1l0 3l1 -2M625 121l-1 2l2 -1l0 2l1 1l4 1l2 3l0 -3l-2 0l-4 1l-1 -3l3 -1l-2 -1M625 121l-1 -1l-1 0l-3 1l2 1M624 123l-2 3l4 -2l-1 4l2 -1l0 -2l2 -2l1 1l-3 1M667 212l11 -7l-8 -6l9 -2l9 -2l9 3M667 212l3 -13l-16 -11l6 -14l8 -5l-3 -6l4 -2l-2 -2l1 -2l-4 0l3 -3l-5 1l-1 -3l-4 -1l0 -3l1 -2l2 3l1 -3l1 1M667 212l17 4l-6 -11M667 212l7 17l13 13l-24 5l-23 12l28 21l24 -7l-4 18l-25 24l29 18l22 4l18 -9l-25 -8l-15 13l-21 23l-20 -18l-31 -7l-12 28l37 3l-35 33l-28 3l-22 -15l23 -5l-9 -20M667 212l-12 -7l15 -6M667 212l-16 9l-20 1l-17 18l26 19l-34 1l19 16l-1 23l-26 15l22 17l43 -16l5 -35l20 11l18 -9l-14 -9l-12 -14l-17 -12l-19 -9l-30 2l-8 20l-17 17l-15 16M655 205l-17 2l3 -18l-21 -9l10 -9l11 -10l-12 -3l1 13l-13 -6l-15 2l-19 -9l-12 -16l15 1l16 1l-13 -13l-6 -7l5 -5l5 3l-4 9l14 2l7 4l6 -6l9 0l4 -3l2 -2l-1 -2l1 1l1 0l-1 1l0 -1M655 205l-4 16l-7 17M386 72l-1 3l-3 0l0 5l3 4l-3 8l-8 -2l-4 6M386 72l3 3l-1 -4l2 -1l-1 -1l2 0M386 72l-2 1l-2 2l-3 1l3 4l-4 -2l0 7l-6 -3l-4 2M386 72l-3 -1l2 -1l-1 0l-1 0l-2 0l-1 0l0 2l-1 4l-3 0l2 -3l1 3l-1 2l-2 -2l-2 3l-4 -2l-4 0l0 -2l2 1l0 -3l-2 -1l-2 1l0 1l-2 -1l-2 0l-1 1l-1 0l-1 1l0 -1l-2 0l-1 1l-1 0l-2 1l-1 -1l-1 1l-1 2l1 3l2 0l-1 -3l-1 3l-1 6l-5 1l-4 -2l-2 -3l-2 4l4 -1M386 72l-1 -2l2 -1l1 2l3 2l-1 -3l-2 -1l-1 0l-1 3l2 -1l0 -2l1 0M389 75l-2 5l-5 0M572 98l-5 1l3 -3M568 102l-1 -3l-3 -4l3 -2l0 -1M180 169l2 -5l4 0l-3 -3l-2 0l-3 0l0 2l-1 -2l-1 1l0 3l-2 -1l1 2l1 1l-1 3l-2 -2l-1 -2M179 172l-2 4l-3 2l-2 -1l5 -1l-2 -2l-4 -1l4 -3l4 2l-4 2l-3 3l-1 -1l-2 2M179 172l3 4l-4 3l-3 1l1 -2M488 325l-6 3l-5 1l-3 1l-1 -1l0 -3l-2 1l1 1l1 -2l0 -2l-2 -2l-2 -1l-2 -3l-3 -2l-3 1l0 -2M488 325l10 -2l-4 -7l-11 -7l6 -5l1 -8l-9 0l-7 -8l-2 -16l-9 7l-8 -10l-6 -10l16 -1l-11 -13l26 2l17 -15l-13 -16l35 2l-1 -28l-42 6l28 -25M488 325l-7 -3l5 -4l-3 -9l-2 -13l-8 7l-4 -5l-3 5l-5 -3M491 329l-6 5l3 4l-4 2l-2 0l-2 -2l-1 -1l-1 -1l3 -1l-4 0l1 1M491 329l7 -6l4 -9l-2 -15l13 15l-5 8l-10 1l0 9l3 6l9 3l16 -1l-8 7l-12 3l4 -9l-6 3l-6 -1l-6 3l-1 4l-3 0l-3 0l3 -2l3 2l3 2l-5 1l-1 -3l-2 1l-1 -1l0 -2l2 -2l-4 0l1 1l3 -1l5 0l-2 -3l-2 -5l-3 4l-3 0l0 -2l-2 -1l1 2l1 -1l0 -3l-3 0l2 -2l-1 -2l-3 0l1 -2l-3 0l2 -2l-1 -2l-3 2l-1 -1M491 329l7 3l10 -10l21 6l10 10l14 13l1 -23l-12 -11l8 -18l-25 6l-13 -10l21 -7l17 11M491 329l0 7l-3 2l4 2l-1 -4l-6 -2l-4 1l1 2l-2 1l0 1M580 110l-9 1l-6 -3l-6 6l-5 -5M580 110l7 1l2 4l-1 4l5 -2l0 -4l-4 2l4 2l4 -2l5 -2l-2 4l5 2l4 -3l-1 5l5 -1l-4 -4l-5 -1l1 4l3 2l3 2l2 -3l5 2l2 -1l0 -3l-2 2l0 2l-3 3l1 6l-6 0l1 -8l4 2l6 -1l-3 -2l-1 -3l2 -2l-1 3l-1 -1l-2 -1l-2 -1l0 -3l-2 2l1 -3l-3 2l1 -3l-3 2l0 -3l2 0l-2 3l2 2l0 -1l2 -2l-1 -1l-1 -1M580 110l-5 -2M580 110l-4 8l-5 -7l0 -5l2 -5M580 110l3 6l5 3M583 116l-7 2l7 6l-10 1M583 116l0 8l-5 9l-7 9l-13 -3M583 116l4 -5l-2 -5l-2 -2l3 -3l-3 1l-2 -1l-2 -2l-1 -2l-1 2M583 116l6 -1M389 93l-4 -9M389 93l-7 -1M389 93l9 0l10 -1l4 -6l-3 -4M389 93l6 8l-16 -2M395 101l-15 9l13 3l2 -12l3 -8M395 101l13 -9l9 0l4 -9l9 5l-3 -7l-2 -6l-4 3l-4 -3l-2 7l-3 4l5 6l13 -4l7 -3l9 -3l0 6l-9 -3l1 10l8 -7l9 5l3 9l12 -2l-7 -5l3 -11l-8 -3l-1 6l6 8l-8 -2l-8 6M557 97l-3 -5l-2 -1M557 101l7 -1l3 -1l0 -4l-3 0M557 101l4 3M557 101l-9 1l-6 -2l-4 -3l5 -2M310 290l-2 1l-2 -2l-1 -1l-2 -1l-1 -3l3 -5l-4 3l-3 1l-1 -2l-2 -1l-1 -1l-2 2l-1 -1l-1 -1l-1 0l2 -3l-3 2l1 -3l-2 2l1 1l1 1l3 -1l-1 2l3 -1l-2 -1l-2 1M310 290l2 2l0 3l2 1l2 -1l1 3l2 2l1 1l2 1l-2 3l1 1l1 1l3 0l0 -2l3 -3l-2 -5l-3 1l-3 3l-3 1l2 -2l-3 1l-1 0l-1 -1l-1 -1l-1 -1l2 -2l-3 1l1 -2l4 0l4 -3l1 4l-2 4l4 -2l1 4l-2 0l-2 1l0 -2l4 1l4 0l2 2l5 0l1 -4l6 1l3 -7l-6 -5l-6 -5l8 -4l-7 -4l7 -9l12 -10l15 4l-13 9l-2 -13l-14 -7l2 17l14 3l4 11l9 3l-1 6l-2 6l-4 -3l-2 -12l-4 12l-10 1l-9 6l-6 4l2 4l-2 3l3 1l-1 -4l-2 1l0 2l-2 0l1 1l1 1l1 1l1 0l1 1l1 -1l4 -1l-3 3l-1 -2l2 -2l2 1l0 3l2 -4l4 -6l-5 1M310 290l-2 -1l0 2l0 2l4 -1l4 0l-4 3l-2 1l0 -2l2 1M310 290l1 -2l3 -1l4 -4l-4 -7l-3 -10l6 3l5 6l-8 1l0 5l0 6l7 1l-1 4l-4 0l0 3l5 1l-4 2l-1 3l1 1l1 1l1 1l1 -1l0 2l-1 -1M310 290l-2 3l0 2l2 -1l2 -2l2 -3l0 -2M310 290l4 -1l2 3l5 -4l5 -6l7 2l-1 7l0 6l-6 0l-5 -1l2 2M308 289l-2 0l-1 3l1 1l2 0l-1 1l1 1l1 0l1 -1l-2 -1M308 289l-3 -1l3 -2l0 3l3 -1l-3 -2l-2 -2l-1 -5l-4 1l-4 1l4 1l1 2l-2 1l3 2l3 -3l-1 4l-2 2l3 -1l-2 2l1 1l3 -1l-2 2l1 1M720 210l-3 -1l-4 -2l-1 5l5 1l0 5l-8 -3l-6 7l3 7l-13 -8l4 14l-9 -6l-1 13M720 210l2 2l2 3l1 2l-4 1l-4 0l2 -3l5 0l-3 3l-1 4l-8 3l5 -7M720 210l-3 3l0 -4l3 -2l-2 0l1 -3l-1 -1l-1 -1l-2 2l-2 -3l-1 -1l-1 -2l-2 -2l-1 -1l-1 -2l-3 0l0 -3l-2 -2l-2 1l4 1l1 -2l1 1l1 2l-3 -1l2 -1l1 1l0 1l0 2l2 -1l-1 3l-4 -2l-4 -1l-4 0M720 210l2 -1l0 -2l-2 0l0 -2l-1 -1l-4 0l3 3l2 -2l1 1l1 1M720 210l3 0l1 1l0 2l0 2l3 -1l-1 -1l-1 -1l-1 -1l-2 1l-5 1l2 2l2 3l4 2l0 4l-6 3l-7 -2l3 5l6 2l8 4l5 -2l4 -1l1 -1l-4 0l3 1l2 0l-1 -1l-1 -1l-1 -2l-3 1l2 -2l1 1l-2 3l3 -1M720 210l0 -3l1 -1M722 212l-3 3M722 212l1 -2l-1 -1l-2 -2M722 212l2 1l1 -1M313 299l2 -1l2 0l-2 3l0 -3l-1 -2M312 298l-1 -1l-1 -1l-1 -1M312 298l3 0l1 -3M195 149l0 -2l1 -1l1 -1l1 2l-2 -1l1 2l-2 -1l-1 0l-1 1l-1 1l-1 1l-1 0l-1 1l-1 1l1 2l1 4l-3 -3l-2 0l1 2l-3 -1l-1 1l0 2l2 -1l3 2l3 -2l2 -2l3 0l6 4l1 5l-6 -1l0 6l-9 -3l-1 6l-1 6l4 -3l5 0l2 -6M195 149l-1 1l-2 2l0 4l-3 -2l-2 -1l1 -1l2 1l2 3l1 4l3 4l-9 3l4 -4l-5 1M195 149l2 -1l1 -1l2 -2l-3 0l1 -1l2 1l1 -2l2 0l-3 2l2 3l8 -1l0 -5l-3 0l-2 2l0 -2l-2 1l0 2l4 -1l-5 4l3 3l6 1l3 4l10 8l-5 -12M195 149l0 3l-1 -2l-3 0l1 2l-2 -2l0 3l-1 -2M195 149l5 1l-5 2l3 1l2 -3l-2 -3l4 1l-2 2l5 1M195 149l-2 -1l1 2l-2 -1M195 149l-1 -2l1 -1l0 1M197 148l3 2l2 5l9 -3M496 393l2 6M496 393l-5 -1l-3 -1l1 2l2 -1M496 393l-5 2l-1 2l0 2l0 2l0 3M496 393l1 -6l3 -1l-3 -3l0 4M513 432l14 -1l8 -19l15 12l10 10l-5 14l-12 1l9 9l-5 8l-7 -4l12 -4l15 -6l-7 -18l-14 3l-19 -6l-16 -7l-10 6l0 6l6 -1l-6 -5l-5 -6l0 -8l7 2M513 432l-6 3l5 4l2 8l5 4l-4 6l-3 4l-3 1l1 -3l1 -2l-4 -1l-3 2l3 1l3 0M513 432l-1 7l8 -2l7 -6l0 12l-13 4l-5 5l-2 4l-2 -1l-3 1l-1 -2l-1 0M513 432l-2 -8l-4 11l-4 8l-2 -7l-4 7l-5 -1l-3 2l-1 -3l4 1l0 -4l-3 0l-4 -2l-2 -3l-5 -4l-3 1l-1 2l-2 -1l-1 -1l-2 -1l1 -1l1 2l2 -1l1 3l-1 0l-1 -1l1 -2l-3 -1l1 -1l1 -1l1 -1l1 -1l2 0l4 1l-1 -3l2 0l0 -4l-3 -1l1 -1l4 0l-2 -3l0 -1l3 2l-1 2l-3 -1M513 432l7 5l-6 10l-7 -1l-5 3l-3 -2l0 3l3 -1l4 1l3 2l2 5l1 4l-1 2l-2 -1l-1 -1l-1 -2l-1 0l1 1M520 437l7 6l-8 8l-5 1l0 -5M669 583l4 -1l-5 -6l0 -6l-9 5l9 1l-6 2l-3 -3l-4 -2l-4 -3l-5 1l3 -4l2 3l5 -7l-6 -9l10 5l-4 4l-1 10l6 -6l-1 -8l6 -7l8 -11l13 -6l-13 -14l15 -13l-2 27l27 -9l-7 25l12 17l-5 9l-2 10l-16 -7l0 9l-6 8l-4 -9l-5 1l1 6l4 2l0 -9l-5 -4l-6 5l-3 -3l1 -4l8 2l0 -7l-7 -14l14 11M669 583l-1 -7l-3 5l-3 -3l-5 2l-2 -2l-4 -2l-4 0l1 -3l3 3l-2 2l-2 -2l-1 -1l2 -2l3 -3l0 -7l-1 -9l-8 -2l-6 0l-4 -3l-4 3l-2 -4l6 1l0 5l-4 -2l-5 0l-3 2l1 1l2 1l1 1l1 1l2 2l2 -2l-1 3l4 -2l-3 3l2 1l1 -1l-3 0l-1 -1l-1 -1l-1 -3l-3 -1l0 -4l-2 3M669 583l-4 -2l-4 3l1 -6l-3 4l-2 3l-1 -2l-2 -1l-1 -1l2 -3l-4 2l2 1M669 583l3 3l-1 4l-3 2l-3 -1l-1 -1l1 -2l0 3l2 2l1 -1l0 2l-1 -1M669 583l-3 2l-1 3l-2 1l-2 -1l-1 -1l3 -2l2 3l3 1l-3 2M669 583l-1 6l3 1M668 576l6 1l-6 -7l-7 -3l-2 8l-2 5l-3 2l1 -4l0 -2l-4 0l-1 3l-1 -1M767 512l0 -5l-6 0l6 5M366 72l1 0l1 1l0 -1l2 0l1 0l1 -1l1 0l1 2l-2 -2l0 3l-2 -1l-2 0l2 -1l0 1l1 -1M366 72l0 3l2 -2l2 1l0 -1l2 -2M366 72l-2 2l-1 -1l-1 0l0 2l-2 -2l0 3l2 -1l-2 4l-2 3l-3 0l-4 -1l2 -3l-3 0l-2 0l-2 1l-1 -1l-1 1l-1 2l-3 -1l-1 -2l1 0l1 -1l1 0l2 0l0 2l-2 -2l0 2l1 2l3 -2M367 72l1 0M748 590l-3 -3l-3 -5l4 -1l-1 -6l4 0l-2 -4l2 -3l2 -4l1 -3l2 -4l5 3l1 -3l3 2l1 -2l1 -1l-2 -2l-2 1M748 590l-4 -1l-4 -3l2 -4l4 3l0 -4l3 -1l-4 -5l2 -4l5 2l-3 2l1 3l-5 -3l-5 0l6 6l3 3l0 -4l1 -2l3 2l0 1l-1 2l-1 1l-1 2l-1 -2l-3 1l-1 2l-5 -1l-8 -4l6 7l2 -3l-5 -9l7 5l-2 -7l-9 -4l1 11l-9 -1l-9 -4M748 590l-3 1l1 2l-1 1l-2 -2l3 1l1 -2l-2 0l-1 -2l-6 0l-2 3l-2 4l-2 3l-3 4l-7 -5l-3 5l-4 5l-3 6l-6 -4l9 -2l6 0l-2 -5l8 3l-5 -8l-3 -7l-7 -4l11 -6l-4 -13l2 -13l9 6l3 -11l5 8l8 2l6 1l6 1l-4 -5l-6 -8l-1 -9l7 8l5 4l4 2l2 0l1 -1l0 -2l1 -1l0 -3l-1 -4l3 1l1 -2l-1 -3l3 -2l-4 -1l1 3l2 0M748 590l1 -1l-3 -4l3 2l1 -1M748 590l-1 1M744 589l1 -2l4 2l0 -2l0 -3l3 -1l-3 -3l4 1l-3 -3l3 -1l-4 -2M744 589l-1 3l-5 -3l3 5l4 0l-1 2l-3 -2l3 3l0 -1M321 306l2 -1l2 0l2 1l3 -2l2 -7l-4 5l-1 4l-2 1l1 2l-1 -1M323 305l-1 -3M323 305l-1 2M323 305l-3 0M323 305l1 -3M702 622l-1 -1l-2 -1l3 -2l-1 3l3 0l2 -3l0 -4l6 0l1 7l-6 0l-3 2l-2 -1l2 -1l-2 -3l4 -4l-6 2M704 623l1 1l2 -3l2 -4l-3 1M704 623l0 -2l3 0l0 5l2 -3l4 -2l-2 4l3 2l2 -4l5 1l2 2l2 0l-1 1l-1 -1l0 2l1 -1M229 129l-1 4l-4 3l-5 -1l-2 5l-3 6l-4 -4l-2 -3l2 -1l3 3l0 -3M229 129l3 1l-4 3M229 129l-4 -1l-3 1l0 -2M229 129l-2 -2l1 -2l3 0l3 2l-2 3M769 534l-1 2M600 182l7 22l17 -11l17 -4M600 182l20 -2l-3 -15l8 -13l6 -8l-5 -3l6 -5l3 -1l0 3l3 -1l-2 5l5 -3l1 4l4 0l2 5l1 -3M600 182l24 11l-4 -13l-18 -13l-2 15M607 204l31 3l-7 15M781 466l5 3M781 466l-1 3M753 255l-3 1l-1 -2l-1 -1l-5 0l1 3l-7 0M753 255l-1 -1l-3 0l-5 2l0 6l2 -3l-2 -3l4 -3l2 -1l0 -2l-1 -1l-3 0l2 -2l-4 0l-3 3l-2 -3l-2 -4l5 0l2 -3l-1 -1l-3 0l-3 4l4 -2l2 -2l0 -1l-3 1l2 -2l-3 0l2 -2l-3 0l0 -2l2 1l0 -1M753 255l0 2l-2 1l1 2l-4 2l5 0M753 257l-3 -1l-6 0M753 257l1 1l-3 0l-5 1l2 3l1 3l2 3l-2 5l3 -2l6 1l-4 2l1 4M246 242l-1 0l-1 -1l-1 -1l-1 -1l-1 -1l-1 0l1 -3l-1 2l0 1l3 -2l-2 2l3 -1l-2 2M246 242l1 -2l-2 2M246 242l2 0l2 0l-1 3l1 1l1 0l1 1l1 -2l-2 1l1 -2l-2 2M246 242l1 1l1 1l0 -2l-1 -2l-3 1l2 -2l-2 -2l2 0l1 3l3 -4l3 0l-3 -3l7 -5l10 2l-6 2l-1 5l-7 -1l-3 4l-2 2l-1 1M187 167l-5 -3l-3 2l1 -3l1 -2l-2 -1l1 -1l1 2M280 256l0 6l5 0l7 -5l-8 1l-4 -2l-2 -5l-5 4l2 -7l-1 -5l-4 7l3 5l-3 2l-3 0l1 -2l5 0l2 3l5 -2l-3 4l3 2l-3 3l-1 3l1 1l2 -1l0 2l1 1l1 1l2 0l1 2l2 -2l-1 3l-1 -1l-1 0l0 -2l-1 1l1 1M280 256l5 -2l8 -4l-8 -3l-10 1l-5 2l-3 -3l7 -4l-9 2l-5 0l0 -4l5 4l2 2l-2 5l5 -2l-2 5l2 2l5 1l3 -7l-3 -3M278 251l7 -4l-11 -4l11 -7l0 11l7 -5l1 8l6 7l-7 0l-7 -3l0 -7M278 251l7 3l-1 4l1 4l-1 4l4 -2l-3 -2l-4 2l1 2l0 3l-2 2l3 -1l-2 2l1 1M274 266l1 1l1 1l3 -2l3 0l2 0l1 3l-2 3l3 0l-1 -3l6 -2l1 5l3 -3l-1 5l-2 4l-1 -2l-2 -1l-3 1l2 -2l-3 1l1 1l1 1M274 266l-1 -1l1 -1l0 2l3 -1l-2 2M274 266l2 -2l1 -4l-3 2l-3 2l1 0l2 0l-3 0l-1 -1l2 -2l-1 3M274 264l2 0l1 1l2 1l2 -2l-4 1M274 264l0 -2l1 -4l2 2M414 67l-1 0l-1 3l2 3l0 -4l0 -2M695 206l4 10l-6 5l-5 8l-4 -13l4 -8l7 -2l5 -4l1 -6l3 -3l3 -2l2 1l-1 -1l-1 0M695 206l-2 -4l-5 -7l-10 -5M695 206l6 4l6 -5l3 -2l1 -5l3 0l-2 2l3 -1l-1 -1l-1 -2l-1 -1l-1 -1l-3 1l2 -2l1 1l-2 2l2 0l0 2l-5 0l-6 4l1 8l8 5l-1 -5l5 -3l2 -3l3 -1M699 216l4 6l-10 -1l-9 -5l-10 13l-11 18l5 33l12 -21M699 216l-15 0M699 216l2 -6l7 0M788 387l2 3l0 2l-1 2l3 2l0 1l0 2l-3 0l3 1l-3 2l4 0l-1 -2l0 -1l-1 -1l1 -2l-3 1l0 -3l-5 1l2 3l3 -4l-3 -3l4 1l2 -1l0 2l0 1l0 2M788 387l-2 1l-1 -3l1 -2l4 0l1 -1l0 2l0 1l1 2l0 1l0 2l0 1l-2 -1l-4 -2l0 3l4 -1l2 -2l-4 -1l4 0l-4 -2l3 0l-1 -2l1 1M785 385l-5 -2l-9 -4l8 -1l3 -2l5 -1M785 385l-5 2l-4 3l-5 5l9 8l4 -1l5 2l4 -1l-4 -1l0 -3l0 -2l2 1l1 -1M791 398l-2 1l-3 -1l3 -1M454 68l-1 2l0 -2l-2 -1l-1 0l-1 0l-2 0l0 2l-1 -2l1 0M455 68l2 0l-2 2l-2 0l2 -2M180 163l-2 0M180 163l2 1l1 -3l1 -3l-1 -2l1 -1l2 2M180 163l3 -2l4 -1l4 3l2 -3l8 0l7 1l-1 9l6 6l11 -12l11 3l8 -14l7 -9l11 10l7 21l13 9l-15 18l4 10l2 10l-5 8l-8 -9l11 -9l-12 2l1 7l-6 2l4 5M706 198l2 -3M706 198l-2 -5M706 198l3 -2M706 198l0 4l4 1l2 -3l4 0l-3 1l3 1l0 -2l-1 -1M706 198l-5 -2l-1 -4l4 -2M706 198l4 5l3 -2M560 494l3 3l-4 2l-3 2l-2 -1l3 -3l0 -5l-3 2l-1 -5l-4 -1l1 -3l-3 1l2 2l-3 3l-2 0l1 -2l-3 0l1 1l2 -1l2 -3l-4 0l-2 -1l-1 -6l5 3l5 3M560 494l-2 -6l5 -8l-8 5M560 494l-3 -2l-2 4l-2 3l-1 -1l0 -2l-3 -1l-1 -1l-1 -1l-1 -1l-2 -1l-1 -1M560 494l4 -6l5 4l11 2l-10 4l-2 6l-2 -5l-5 2l2 -4M560 494l-3 3l-4 2l1 1M560 494l-1 5l-1 2l-2 0l1 1l1 -1l0 2l-1 -1M465 79l1 5l3 -4l-4 -1M466 84l5 7l8 -7l6 -2l-4 -3l-1 -3M466 84l6 1l3 -4l2 -6l-3 0M466 84l-9 3l-5 -5l-3 -5l-3 5M375 71l-2 0M375 71l1 0l1 1l-2 -1l-1 2l-2 1l-2 0l0 3l-4 3l0 -3l2 -1l2 1l3 -2l1 -2l2 0l0 3l-3 -1l-3 -1l-2 2M375 71l1 2l2 0l-1 -1l0 -1l-1 0M485 402l0 2l-1 1l0 2l0 2l3 -1l0 -2l1 -4l2 -1M485 402l3 0l-2 -2l4 -1l-3 -2l3 0l-2 -2l3 0l-2 -2l-1 -1l0 2l1 -1l-1 2l0 -1M485 402l1 -1l0 -1l1 -2l0 -1l1 -2M488 402l-2 -1M488 402l-3 2l2 2l-3 -1l3 3l-1 2l5 0l5 6l-6 4l-4 -3l3 -4l-3 -3l-1 2l-1 -3l2 1M545 389l4 16l11 -22M785 380l-3 -4l-3 -2l0 4l6 2l1 3l-6 0l-11 2l7 5l4 -7l5 -3M383 71l1 2l1 2l2 5M383 71l-2 -1l1 2l0 3l-2 -3l-1 -2l-2 2l-1 1l-3 2l-1 -1M383 71l0 -1M383 71l1 -1M383 71l-1 1l2 1M694 565l25 3l12 3l-1 -10l-11 7M613 120l2 5l3 2l-2 4l5 6l-8 6l-3 -6l0 -6l-7 2l-4 -7l-10 5M613 120l0 -3l2 -2l-2 -1l-1 -1l-1 0M613 120l2 -2M613 120l4 -1M615 125l-5 6l-4 -7l-7 2l-6 -4l7 -5l-3 -2l-1 -3l-3 1l-3 -4l1 -2l-2 -3l2 -2l1 2l-1 3l3 0l-2 -1l-1 1l-3 1l1 -4l-2 -1l-1 -2l-2 -1l2 0l0 1l1 0l1 0l1 1l2 0l1 1l0 1l-3 0l-4 2l3 2l-1 3l3 -2l4 -2l2 1l2 -1l0 2l2 2l0 -1l3 -2l-1 3l2 -2l1 1l-1 1l2 -1l1 1l-1 2l0 -3l-1 0M519 471l-1 -1l-1 -1l1 -3l2 -1l-4 -1l0 -3l-3 3l-1 -3M519 471l1 1l2 1l1 1l3 -2l4 1l-2 0l-4 2l2 -3l1 -5l8 -2l-5 4l-4 3M519 471l1 -4l0 -2l2 4l-3 2M520 472l2 -3l2 -5l4 -6l-1 9l-5 2M520 472l4 -2l-2 3M750 530l-3 10l6 0l6 6M750 530l5 -14l-3 -9l-10 -5l-7 -16l10 7l11 4l7 -9l10 0l0 5l-2 5l6 1l-4 -6l-4 0l4 -5l6 5l2 3l3 -1l-1 -2l-2 3l3 1l0 -2l0 -1l-1 -1l-1 -2l3 0l0 -2l-3 -1l1 -2l0 -3l1 -2l3 -1l1 -2l-4 0l3 2l0 1l0 2l-4 0l3 2l1 -2l-3 -2l3 0M750 530l-9 -5l-2 -12l13 -6l4 -10l5 10l4 9M750 530l3 10l6 2l4 1l4 4l1 1M750 530l7 -3l2 7l0 8M741 525l-10 9l-10 8l-14 9M741 525l14 -9l6 -9l-9 0M728 227l-3 2M728 227l-1 5l-6 0l-11 3l5 -5M728 227l2 -3l-1 -2l-4 2l3 -3l2 -2l-1 -1l-1 1l0 -2l0 -2l-1 -1l-3 -1l2 0M728 227l4 -1l3 0l-2 2l3 -1l-1 -1l-1 -1M728 227l5 1l3 0l0 -1M728 227l-3 -3l5 0l2 2l1 2l1 2l1 2l-1 2l4 1l2 -1l1 1l1 2l1 1M728 227l3 5l-4 0M270 257l1 3l4 -2l-3 3l-3 1l1 1M270 257l-1 3l-2 -3l0 -3l3 -4M268 255l-1 -1l-2 -2l-4 -3l-1 -4l-3 -3l-2 4l-1 -3l-1 2M600 117l4 -2l-2 -2l0 -2l2 0l2 2l-4 0M600 117l-7 0l0 5l-10 2M600 117l2 5l3 -3M602 122l6 -1l-2 3l5 -1M602 122l-9 0M602 122l-3 4M602 122l4 2l-3 9l-1 11l-5 12M750 464l-6 -12l-13 -11l-24 -12l-9 -22l-27 0l12 -21M744 452l-11 8l6 13l12 8l6 -6M781 510l-2 -2l1 3l0 2l-3 -3l2 -2M615 548l0 -2l-3 0l3 2l4 1l4 -3l3 2l-5 3l-1 3l-1 -3l0 -2l2 2l2 -5l2 -4l5 -5l1 6l1 6l8 -6l0 -8l11 -13l-17 -1l-17 -2l-5 8l-8 -1l-4 1l-3 -2l-3 -3l-3 -2l6 -5l-3 7l-2 5l2 2l3 -4l-1 5l-2 -1l-2 2l-1 -1l-2 -1l-1 -1l0 -4l-3 1l1 -3l5 1l-3 1l-1 2l1 2l2 -3l-1 4l3 -2l-1 3M615 548l4 -2l4 0l-5 -5l-2 -5l-5 4l1 -7l0 -6l-5 5l-4 3l-2 -1l-3 0l-2 -4l4 -3l1 4l3 -5l-2 -7l-8 3l-3 1l-1 2M615 548l-2 0l-1 -1l-1 -1l-2 -1l2 -3l3 0l2 -6l5 -8l-9 5l-4 4l-1 -5l-2 5l-2 -2l-3 2l-1 -1l-1 -2l-2 0l1 1l1 -1l3 -3l-5 -1l-3 2l-1 -1l0 -4l-1 -4l0 -3l-1 -8l-5 -2l-2 -7l-5 6l-5 0l4 -5l6 -1l-3 -9l-7 7l-5 3l3 2l2 -5M615 548l0 1l1 2l-1 -3M615 546l-1 -4l-2 4l-1 -4l-2 -2l-3 0l-1 -3l-4 1l2 -3l-2 -4l6 1M615 546l4 0l0 3l-3 2l3 0l2 0l2 1l3 -4l5 -5l-6 -1l1 6M615 546l3 -5l3 -6l8 -7l11 7l10 0l1 -13l8 -11l-18 -19l18 -4l-19 -19l1 23l1 16l9 14l11 7l-3 -18M542 86l2 1l-2 2l4 -2M542 86l0 -1l-2 0l0 -2M542 86l2 -2M542 86l0 3l5 0l1 -2l-1 -2l-2 0M542 86l-2 -1l-4 3l-2 2l-6 1l-2 -3l-2 -3l-1 -3l0 -3l-1 -1M542 89l-4 2l-2 -3l-4 -1l-4 4l2 6l2 5l6 -5l0 -6l-4 3l0 -4M542 89l-6 -1l0 -4l2 -2M542 89l0 3l-4 5l-8 0l4 -3l-6 -3l-4 3l-6 3l0 -7l-4 -2l-2 4l6 5l6 8M542 89l-2 -4l-2 0l1 -2M190 192l-2 1l-1 -2l0 2l-1 -1l-1 -1l2 0l-1 1M190 192l1 -3l-3 -1l0 -3l-3 2l1 1l1 2l2 1l-1 2l1 1l1 1l0 1M189 191l2 -2l-4 1l-2 1l1 -3l-2 2l1 1M491 410l5 -2M503 443l-1 6l-1 3l-3 1M503 443l-4 4l-2 -4l-3 2l-2 -3l0 2l-3 0l-3 -1l1 1l2 1l0 -1l1 2l2 -2l2 1l1 2l0 2l2 0l2 -2l-4 0l2 -4l-1 -6l5 -1M503 443l9 -4l-5 7l-1 4l-3 3l-1 3M503 443l-6 0M503 443l4 3l2 6l5 0l-3 5l-4 2M288 94l2 -1l1 0l1 0l0 1l3 1l-1 3l-3 -3l0 4l-4 -2l1 3M288 94l1 2l2 3l1 5l2 -6l2 4l-4 6l-6 2l0 8M288 94l-1 0l0 3l-1 -1l0 -1l1 2l-2 2l2 4l5 1l4 -2l5 7l9 1l-4 10l-6 12l-10 14l-9 -13l-9 -5l-9 -7l2 -5l2 -4l-3 -4l-3 0l-2 1l-2 3l-3 0l2 -1l1 1l0 -3l-1 2l-3 -1l-1 0l-1 1l-1 1l1 0l-1 2l3 0l1 -2l-3 0l2 2l2 4l2 6l-5 -1l0 4M289 96l-2 -2l-1 1l-1 0M289 96l1 -3l1 2l1 -1l-1 -1l0 2l4 0l3 0l-3 -1l-3 0l1 -2l1 0l1 2l0 1l3 4l-2 3l6 1M289 96l-2 1M289 96l2 -1M535 480l-1 3l-1 -1M540 479l3 -3l-2 -7l-8 3l2 -7M449 67l-2 2l-2 0l0 -2l-2 2l0 -2M449 67l0 3l1 -3l1 3l0 -3M449 70l-2 -1l-1 4l-1 -4l-2 0l-2 0l1 -2l-1 0l-2 0M449 70l2 0l2 0M449 70l0 3l3 0M674 598l-2 -1l-1 -1l-1 -1l-2 -1M602 111l-2 0l-4 1l0 -4l2 1l2 1l2 1M465 258l15 -11l30 6l-25 14l-13 5l-17 -3l-15 2l-13 0l-10 5l-8 0l10 -9l-2 9l-5 6l-2 4l-5 6l0 -9l5 3l-2 6l3 2l-1 4l1 1M465 258l7 14l11 10l-9 6M465 258l-10 11l-6 11l14 -1M465 258l20 9l17 3l25 -5l-17 -12l23 -10l27 9l-19 -28l-22 -6M485 267l-5 -20l-14 -17l18 -14l-8 -20l-2 -28l-27 23l-13 21l-20 12l-17 14l-11 16l-5 11l-14 8M485 267l-2 15l19 -12l-6 16l-6 10l10 3l-4 -13l-13 -4l7 14M623 556l2 -2l3 -2l1 2l3 0l4 -2l3 7l3 -7l0 10l8 -8l-4 -6l-4 4l-2 -9l-10 -6l-1 -9l5 -7l-11 -16l19 3M623 552l2 2l1 3l-2 0M583 99l-1 -1l-1 0l-2 -1l-1 0M583 99l1 1l-1 2l0 -3l-2 2l1 -3l-3 1l0 -2M782 491l-5 -4l-3 -3l4 -4l-7 0l8 -4l5 2l-6 2l6 1M782 491l0 -3l-1 -4l2 -1l3 3l0 -1M782 491l-3 2l-6 0l5 3l3 0l2 3l1 -2M782 491l3 1l-2 1l-4 0l-1 3l2 2l3 1l0 1l-2 1l2 -2M777 487l-4 1M777 487l5 1l4 0l-3 -2l3 0l0 2l-1 1M777 487l4 -3l2 2M777 487l2 6M286 110l-7 3l-7 -4l-5 3l-1 -5l-1 -1l-1 2l2 -1l1 -1l-2 0l-2 0l-2 2l-2 -1l1 -1l2 0l1 -1l1 -1l1 2l0 -2l2 2l2 0l-2 6l2 2l3 -5l2 7l-9 0l-6 2l-4 0l-3 5l-4 2l-7 0l1 -3l6 3l1 -5l-1 -4l-1 0l-1 -3l2 2l0 1l-2 3l-1 -2l0 -2l2 1M286 110l-6 -3l-4 0l-4 2l-3 -3l-3 1M286 110l6 4M286 110l1 -7M280 97l-1 1l1 2l0 -3M282 99l3 0M282 99l-2 1l-2 1l1 3l-3 -1l-4 0l-1 -2l-1 1l-1 0l2 1l-1 -1M282 99l2 -1M248 244l2 -2l4 1l-2 1l-3 1l-1 -1M250 242l4 -2l-1 -4M606 540l-3 0l-2 -2l-1 -1l1 -3l-2 2l-2 -1M606 540l-2 1l-1 -1l2 -3l3 0l1 3l-2 3l-1 -3l-1 2l-1 -1M606 540l2 -3l3 3l-2 0l-1 4l1 1l3 1l-1 0M450 159l-17 14l-13 19l-6 32l-21 -19l-12 26l-15 16l-13 10l-5 -23l-2 -20l22 1l4 -21l-22 -1l-11 -29l-34 23l-12 -25M433 173l14 18l-27 1l-31 -23l-17 25l21 11l27 -13M433 173l-15 -17M321 89l2 -3l-1 -1M321 89l-1 5l-3 -5l-3 0l2 -3l-2 -1l-1 0l-1 1l-1 0l-2 0l-1 1l0 2l0 3l4 -1l1 2l3 -1l-2 -3l-2 2l4 1l4 2l4 -4l2 -5l2 -2l-1 -2l1 0l0 2l-2 0l-2 1l1 -2l-2 0M231 125l1 -1l2 -2l-1 -1M231 125l-2 -2l-1 1l0 1l-1 0l-1 0l1 2l-2 1l-1 -1l-2 2M462 68l-1 2l0 -2l-2 2l0 -2l-2 2l0 -2l1 0l-1 2l-2 0M462 68l-1 0l-2 0l-1 0M462 68l1 0l2 0l1 3l-1 3M463 68l-2 2l0 3l3 -2l-1 -3M751 268l1 3l2 3l5 0l3 0M528 458l-7 0l-3 1l-3 -2l-4 0M529 453l5 4l6 5l3 -13l-14 4l-2 -10l16 6l-9 8M529 453l-8 5l-2 -7M709 258l8 -6l9 -5l-1 9l8 3M709 258l16 -2l8 -6M709 258l1 -12l11 -3l-4 9l8 4l-2 12M483 416l3 1l0 3l-3 4l4 0l-2 5l7 0l1 5l8 -4l-5 7l-4 5M483 416l-2 2l5 -1l-1 -5l-3 -1l-1 1l4 0M755 363l9 -2l0 -9l7 -1l7 0l4 3l2 1M755 363l-12 -6l-14 -9l-15 -11l6 24l-14 16l-8 30M755 363l1 -9l7 -14l-14 1l-17 -13l-7 -13l2 -13l12 -4l13 3l-2 -6l2 -7M755 363l14 11l-5 -13l-8 -7l8 -2l6 -7l0 -6l5 -2l0 -3l-8 1l7 -4l1 -3l-3 -5l-1 -3l-4 -2l-8 1l5 5l2 5l1 6l3 4l3 4l2 -6l4 3l-6 3l5 5M650 554l7 -5l3 10l14 4l10 -2M423 298l-1 2l-1 0l-2 -1l-1 0l1 -2l1 -3l-5 -2l-5 -6l8 1l-3 5l-4 2l-3 2l0 -4l-3 4l0 -4l-2 4l-2 -4l-1 3l-2 -2l-4 3l-3 -2l1 4l2 1l-1 1l-1 1l-2 0l-1 0l-1 0l-2 1l-1 -1l-2 2l-2 -2l1 2l-1 1l-2 -3l-1 -3l3 1l2 1l3 -3l2 2l1 2l1 -3l0 3M423 298l1 2M423 298l2 0l-3 -3l-2 -1l3 -4l4 1l4 1l-2 2l-1 4l2 1l1 -4l-3 3l-2 3M422 298l-1 2M422 298l0 -3l1 -5l-4 1l-4 1l1 5l1 1l-1 1l-1 0l-1 -3l-3 -2l1 2l0 3l-2 -1M422 298l-3 -1l3 -2l3 0l4 -1M640 469l-21 -22l1 -26l-23 24l-6 -24l-9 -23l-14 20l-19 -13l1 19l-4 13l9 11M762 525l-3 -4l-4 -5l2 11l2 -6M771 320l-2 6l5 5l3 1l3 1l1 -2l0 -2l0 -2l-3 1l-3 0l-6 -2l-5 -2l3 -6l-6 -4l-10 3l-10 -8M771 320l4 -1l2 -2l1 -1l-1 -1l-3 0l-5 -3l3 -4l3 -2l0 2l-1 2l1 -1l0 -1l-3 0l-5 -1l4 -1l1 2l2 2l2 0l-1 -1M771 320l5 1l3 -1l0 -1l-1 -2l-1 0l2 2l-4 0l-2 -1l-6 -4l-3 -5l-1 -4M388 299l2 -1l2 3l0 -3l1 2l2 0l-1 -1l2 1l0 -3l2 -4l1 -4l2 3M751 317l3 -9M751 317l8 2l-6 6l7 2l-5 6l-2 -8l-13 -6l11 -2l2 8l-7 5l-14 -2M740 319l-15 -4l-18 5l7 17l-14 14l20 10M740 319l6 11l3 11l-20 7M210 142l-3 2l-2 0l-2 -1M210 142l3 -1l1 5M213 141l-5 -2M213 141l4 -1l1 3l6 -2M412 296l2 0l2 1l4 -3l-1 -3l-1 -4l5 3l0 -7l-6 -7M777 317l-3 -2l3 -2l-1 -1l-2 -2l-1 2l3 0l0 -2M773 318l-6 0l0 -4l7 1l-1 3M491 370l4 1l2 -2M530 83l-2 0l-4 2l-5 1l-1 -3l-4 0l-2 -1l3 -2l3 3l5 -1l-3 -2l0 -3l-2 2l0 -2l-2 1l-2 1l1 1l3 -1l-2 -1l0 -1l1 0M530 83l-1 -2l1 -1M530 83l1 -3l-2 1M530 83l3 -2l-1 2l0 4l-2 -4l2 0l4 1l2 1l-2 3M380 110l13 17l-5 20l-19 11l4 -26M646 548l4 -13l12 -6l-5 20l17 -8l-12 -12l12 -8M646 548l-6 -5l-4 9l-2 7l-2 -5l-3 4l3 1l0 -5M646 548l11 1l9 3l10 1l-2 -12M640 133l1 2l2 -2l2 1l-4 1M640 133l-4 0l0 -2M549 86l-1 -1l0 2l1 -1l2 0l-1 3M551 86l-3 1M551 86l1 1l1 0l1 1l0 1M385 301l0 1l-2 1l0 -3l1 -5l-3 4l-1 -5l-6 0l-2 3l-5 -7l-8 -9l-9 6l-9 -7M386 297l4 1l2 0l2 -2l0 3l2 -2l2 3l1 -1l1 0l2 0l1 0l-2 -1l-2 1l-1 -1l3 0l-1 1M386 297l-2 -2l-4 -1l-3 -6l8 1l7 2l-1 3M622 126l-1 -2l-3 3l3 2l-5 2M622 126l-4 1M622 126l-1 3l4 2l-4 6l-11 0l-8 7l11 -1M622 126l3 2l4 0l-2 -1M239 118l-1 0l-1 1l1 2l-2 -2l0 3l-1 -2l-1 2l0 -1M239 118l2 -1M239 118l-1 3l-2 1l1 2M335 308l1 4l2 -2l6 -4l-2 -5l8 -1l-5 -6l5 -7l-11 2l-3 11l-4 -3l7 -8M335 308l-2 4l1 2l0 2l-1 -1M525 305l-12 9l16 14l-16 3l13 9l13 -2l3 -21l-17 -12l8 -17l-21 -7M525 305l4 23l13 -11M533 288l25 -12l-31 -11l6 23M674 577l7 7M674 577l0 -14l-6 7M490 384l3 -1M490 384l1 2l1 2M489 385l2 1l-2 1M593 532l2 1l1 1l0 -4l-1 3M593 532l1 -3M435 296l-4 -4l0 -7l-8 -2l4 -12l-8 -4l-13 -5l-7 -10M314 289l-3 -1l3 -7l-6 5l1 -5l5 -5l-8 -1l-1 4l4 2l-3 3l-4 0M314 289l7 -1l-3 -5l8 -1l-4 -7l7 -12l-3 -10l5 -15l-4 -14l-27 -7l-12 8l-3 11l10 -4l-3 10l-7 -6l-6 -6l-7 -8l9 -9l17 -10l-17 -1l-11 10l11 1l19 4l-5 15l8 13l13 1l10 7l-13 6l3 -13l-10 7l7 6l4 10M668 592l0 -3l4 -3M517 469l3 -2l-2 3M517 469l-2 -1l1 -4l-3 0l-2 -1l1 1l1 1l1 1l2 -2M349 81l4 5l-2 4M348 87l5 -1l-2 -5M779 476l4 -4M779 476l-1 4l3 4M305 90l-1 2l-3 0l-2 -2l-1 0l1 2l-2 1l1 2M305 90l-2 1l1 1l2 -2l2 2l1 4l6 0l7 5l9 -6M305 90l1 0l2 -1l4 2l-2 -3l-2 -1l-1 0l-1 3l-2 -2l1 2l-2 -2l0 3l-2 1l1 2l3 2l3 -4M304 92l1 4l4 0l-2 6M485 82l4 3l-5 3l12 1l-1 6l-12 1l11 12l-8 10l19 -2l6 -14l-8 -8l1 -8l-8 3l-1 -5l-6 1l7 4l3 -4M771 520l4 -3l-4 -1M771 520l2 4l-5 -2M778 505l1 -2l3 0l-1 -2l2 1l0 -2M778 505l-5 -3l2 6M773 502l-2 -4l-2 -5l-6 -5l-12 -7l13 0M773 502l-6 5l-1 -8l5 -1M773 502l6 1l3 2l0 -2l1 -1M773 502l-7 -3l-3 -11M773 502l4 -3l4 2l-1 -3l1 -2M514 88l-5 -1l0 -6l-4 -1l1 -3l-2 -1l-2 0l0 4M781 341l1 -3l2 -1M781 341l-2 -1l1 -3l2 1l2 1M781 341l-2 1l-6 1l7 2l2 -1l-3 -2M781 341l3 -1l-2 -2M781 341l4 1l-3 2l-1 -3M621 528l-9 -1l-3 -9l-5 8M621 528l0 7l4 7l-7 -1l-4 1l-3 -2l0 2l-3 2l-1 -1l-2 -1M621 528l8 0l-12 -9l6 -14l1 -13l17 0l-18 13l-10 -8l11 -5l-14 -11l-17 -7l-15 1l-5 -13l-6 10l-8 -8M621 528l-4 -9l-8 -1l-7 1l-5 6M789 428l4 -1l0 -2l-4 0l4 2l0 1l-4 0l4 2l-4 0l-5 -2l3 -4l4 0l2 -2l0 -2l-3 -2l3 -1l0 -1l0 -2l0 -1l0 -2l0 -1l0 -2l-4 -2l4 -1l-4 -1l0 -2l-2 -2l2 -1M789 428l-2 -4l-3 -4l-7 -2l0 -6l0 -5l-10 2l-1 7l5 8l10 0l-4 -6l-11 -2l11 -4l7 -3l1 6l2 -3l-3 -3l-4 -6l-3 4l7 2l5 0l4 -1l0 -1l-4 -1l-5 0l0 -4l2 -4l1 2l2 4l-5 2l-4 -3l-9 0l0 -8l10 1l3 -1l2 -4l-6 -4l6 1M789 428l-5 0l-3 -4l-5 5l0 6l5 -2l-5 -4M789 428l0 -3l2 -1l2 0l0 -2l-3 -1l3 -1l0 -1l-3 -1l-4 0l4 -2l3 -2l-3 -1l3 0l-3 -2l3 -1l-4 -1l-5 -3l0 3M789 428l0 2l-5 1l3 5l2 1l3 -1l-3 -1l-2 1l-6 -3l3 -2l5 2l4 -2l0 2M787 424l3 -3l-4 -3M787 424l2 1M787 424l-6 0l3 -4l6 1l1 3l2 1l0 -1M787 436l-4 3l-7 4l7 0l3 5l2 1M781 433l2 6l0 4M481 418l-1 2l-2 -3l0 2l2 1l-3 0l2 2l-3 -1l0 3l-1 -2l-1 2M700 182l-1 -1M700 182l1 1l1 1l0 2l0 2M234 231l0 -2M234 231l3 -2l0 2l2 0l-1 1l-1 2l2 1l-1 -3l3 0l-2 3l1 2l-1 -1l-1 -1M234 231l1 2l1 1l1 -3l-2 2l-1 -1l-1 -1l-1 -1l1 -2l-2 2l-1 -1M234 231l0 1M234 231l-1 0M261 255l-1 -1l-1 -1l-1 -1l-1 -1l-1 0l-1 -1l-1 -1l-1 -1M261 255l1 -3l-2 2l1 -3l-2 2M261 255l1 0l2 -1l3 0l-3 2l3 1l-1 2l1 1l1 1l1 -1l0 2l-1 -1M791 379l-4 -1M791 379l-2 2l2 0l0 -2l0 -1l-2 -3l1 -2l-3 0l3 -1l0 -2l-2 -2l1 -2l0 -2M789 381l2 1l0 -1M547 466l4 5l-1 6l5 3l4 -5l-8 -4l-8 5l7 1l-5 5l2 4M481 335l3 -4l-6 0l-2 1l-1 -1l-1 -1l2 -3l-3 -1l3 -1l-3 -1l2 -3l-4 1l2 -4l2 3l3 2l-5 1l-4 1l-1 -1l1 -3l1 -2l-3 -1l-4 1l1 1l1 1l4 0l-3 1l-1 -1l2 -3l-3 2M481 335l3 2l4 1M484 337l-2 3M484 337l-2 0M484 337l0 3l-2 2l-1 -1M484 337l1 -3l-1 -3l-4 2l-3 2l0 -2l-1 -1M452 310l0 -2l2 -4l2 -4l-5 -1l-3 2l-5 0l4 -4l-5 1l0 -5l-4 4M452 310l1 1M191 163l-1 -5M191 163l5 1l5 -4l1 -5M710 203l3 4M710 203l5 1l1 -2l0 -1l1 1l-1 0M346 312l5 3l1 2l1 2l-3 1l-1 2l2 -1l1 -1l1 -1l1 -1l-1 -3l-1 2l2 1l1 -1l1 -1l1 -1l0 -2l-1 -3l-1 4l-2 1l3 1l-1 -2l2 -1l2 -2l-3 -1l-3 0l2 4l2 1l2 0l-2 -2l3 1l-1 -3l2 0l0 2l-2 -2l1 -3l1 3l1 1l-1 1l-1 1l-1 1M346 312l-2 -6l5 4l2 5l2 0l2 2M346 312l-1 5l1 4l2 2M344 306l9 1l-3 -7l6 5l4 3l5 0l2 -1l1 -3l3 1l-2 2l-2 0l0 2l-1 1l-1 -2l2 1l2 0l0 -2l-1 -3l-3 -1l0 5l-3 -3l-2 3l-4 0l0 2M344 306l6 -6l5 -7l6 0l2 8l-7 -2l-1 -6l-5 -6M739 604l-1 2l0 1l-1 2l-4 -2l3 3l-4 -1l3 3l1 -2l1 -1l-2 -4l3 1l-2 -3l4 0l-1 1l-3 -1l-4 -4l-4 -3l-6 2l-13 1l10 4M736 603l1 -3l4 2l-2 -4l4 1l-3 -3l4 1l-1 2l-1 1l-3 -2l-3 -6l5 2l2 -2l2 -1M736 603l-1 2l3 2M250 144l11 -1M317 302l3 1l-2 0M362 312l1 -1l0 -1l-2 1l2 0l2 0l1 -1l-3 0l2 -2M178 161l-1 0M178 161l1 -1M267 257l-2 2l1 0l3 1l-2 0M267 257l-3 1l0 -1l0 -1l0 -2l1 -2l-3 0l-1 -3l6 -2M406 71l1 -2l1 -1M632 559l0 3l0 2l-1 -1M632 559l2 0l5 0l3 3l3 2l4 3l2 -4l-9 -1l-4 2l-3 2l-1 -1l-2 -3l4 1l-2 2l-2 -1M634 559l2 4l-1 3l1 1l2 -3l1 -5l-3 4l2 1l2 2l-4 1l2 2l2 -3l2 -4M634 559l-2 3M511 424l11 -11l-12 2M348 234l33 -3M348 234l-17 4l8 12l-10 13l-16 -4l-8 2l6 5l2 -7M348 234l-21 -10l-2 -24l21 14M348 234l20 -19l25 -10l-4 -36l-20 -11l-19 35l-25 7l-27 3M348 234l-9 16l-13 3M348 234l18 13l2 14l13 4l7 7l4 6l-8 4l-6 -8l10 -2l7 -8l-14 1l-3 9M483 282l-2 14M253 223l5 -9l-2 -7M253 223l-3 5l0 5l-4 4l-3 -1l2 -3l-4 2l0 -3l2 -3l-4 2l2 1l4 1l-2 -4M253 223l-7 2l4 3l-5 5l5 0l0 3l0 4l4 0l0 3l3 -1l3 -1l0 -4l6 1l8 5l0 -6l-7 -7l12 0l-5 7l11 -1M253 223l-6 -3l-8 -2M258 214l-12 -2l-1 -12l-13 -8l-7 3l-4 5l-5 -5l0 5l2 5l0 5l-1 4l3 -2l2 -7l-4 5l-3 3l-1 3l3 -2l-1 3l1 1l1 1l1 0M258 214l8 -12l15 0l0 -18l24 3l-24 15l0 11l7 12l-9 5M258 214l-11 6l-8 4M661 567l-5 -4l-5 0l-6 1l-5 2l-1 4l-1 -1M661 567l13 -4l-8 -11M200 174l-2 6l-4 -4l-4 4l-1 -4M200 174l-6 2M200 174l5 4M200 174l7 -4l8 -6l-7 -3M232 221l2 3M232 221l-3 -2M232 221l2 -3M232 221l-1 5l-3 -2l-1 -1l-2 2M232 221l-4 3l1 1l2 1M232 221l-5 2l0 -3l-2 3l-1 0l-1 0l2 0M232 221l4 1M573 462l16 0l-9 -24l17 7l7 20l-11 9l-2 11l-13 -10l-15 5l-8 0M691 612l-1 -2l1 -1l5 -3l-6 -9M293 282l1 -3l2 -3l-1 4l4 -2l-2 3l-1 3l2 -1l2 2l1 -3l0 -2l-2 -2l1 -6l-4 4l-4 2M293 282l-1 -1M293 282l2 -2l-1 3l1 1l1 0l1 1l1 1l1 1l1 1l3 -1l-1 3l3 -2M293 282l1 1l3 -2l-2 3M479 84l-7 1l-1 6l-1 9l-6 12l-21 -3l-3 14l24 -11l16 -4l-10 -8l13 -4l1 -8M479 84l2 -5l2 -3M472 85l-3 -5l6 1l6 -2M651 221l12 26M651 221l23 8l14 0M651 221l-13 -14l-14 -14M366 247l20 7M300 288l1 1l2 -2M300 288l0 -3l-1 2M292 93l1 -1l2 2l2 -1l0 -2l1 -1M507 75l-1 2l2 0l-3 3l-1 -4l1 -2l2 1l1 0l-2 2l-1 -3l-1 0l-2 2l-1 -2l-1 2M423 290l2 5l2 -4l-4 -8l10 -4M246 119l3 1l3 3l-2 -6l0 -3l-1 -2l-1 3l0 -2l-2 0l-1 1l0 1l-2 0l-1 1M246 119l-4 3l7 -2l1 -3l-2 -1M358 74l-1 0M456 292l3 -5l-7 1l-6 2l-4 3l5 4l1 4l3 1l3 2l-4 2M456 292l7 1M456 292l-9 5l4 2l0 3l-2 1l-1 4M456 292l-5 7M456 292l-4 -4l-5 9l-1 -7l3 -10l-9 -9M782 332l-2 1l-5 1l2 -2l2 -2l2 1l1 -1l-1 -1l-3 -1l3 -2l-2 -2l0 -2l0 -2l-4 -1l1 2l3 1l1 1l0 1l1 2l0 1M782 332l-1 -1M782 332l0 -2M782 332l0 1l-2 0l3 2l0 1l-3 1l-5 -3M780 333l-1 -3l-5 1M780 333l0 4l-5 0M261 249l4 -4l1 -7l-5 -6M261 249l0 2l-3 1l1 -2l-2 1l1 -3l-2 3M261 249l-2 1l2 1l1 1l2 2l-1 2l1 1M261 249l-3 -1l2 -3M469 321l-2 2l-1 -1M735 605l-3 -6l5 1l3 3l1 -1l1 -2M735 605l-6 -2l-2 3l1 5l-7 -3l6 -2l6 1l-4 -4l-1 -7l6 0l5 2l1 -2l-4 -4l-7 -4l3 -6l3 -5l-4 -6l-8 10l-4 10l9 5l1 -8l9 1M735 605l-2 2l-1 2l2 4l-3 -2l-3 0l2 3l3 0l-1 2l-1 1l-3 -1l0 -5l-5 2l-8 -5l6 8l-9 -2l6 5l3 5l2 -2l0 4l-3 1l-1 2l3 1l1 -2l-3 -1l1 -3M769 374l-14 4M769 374l10 0M219 132l-1 -2M219 132l0 3l-4 0M282 269l-3 1l-1 -1l1 -1l-3 0M282 269l1 1l2 -1l3 -5l6 -2l1 7l5 -3l5 -5l1 -8l-3 -8l-11 -3M282 269l2 -3l-1 4l0 2M282 269l-3 -1l3 -2M203 197l-5 -1l6 -2l5 0l7 1l-6 -5l10 1l5 4l-9 0l-5 3l-6 1l-2 3l-3 2l1 -3l-1 2M203 197l1 -3l-2 -5l-4 1l0 4l6 0l6 -4M301 89l0 3l-2 0l-2 -1l-1 0l-1 3M301 89l2 2l-1 -2l-1 0l-2 1l0 2M272 128l1 -7l-8 -5l4 -2l5 2M272 128l8 -5l1 10l-8 11l-12 10M377 71l2 -1l1 0l2 2l-2 0l-2 1l1 -3M722 630l-1 1l-2 -2l1 3l-3 -1l2 3l1 -2l1 -1M722 630l-2 -3l-4 -4l-3 -2l5 -2l3 -3l2 -3l-2 -5M769 292l1 2l-3 -1M758 562l1 -2l4 0l-3 -3M758 562l-1 2l-5 -3l-6 -6l8 2M758 562l3 3l-4 -1l-6 0l5 2l1 -2l3 2l1 -1l0 -2l-1 -1l-1 -2M758 562l2 0l3 -2l0 -1M757 564l2 4l-3 -2l-3 1l-2 -3l-5 -4l3 8l5 3l-2 2l-3 -5l4 -1l1 4l3 1l1 -1l0 -2l-1 0l-1 -3M680 162l-2 2l3 -1l-1 -1l-2 0l-1 -3l1 1l1 1l1 1M678 164l2 1l1 -2l1 1l1 1l1 1l1 1l1 1M678 164l0 -2l0 -2M678 164l-3 0l-3 0l-7 -1l-4 -1l-8 2l0 -9l4 -4l1 4l4 0l-1 3l3 -1M678 164l-1 2l0 2l2 2l-6 -1l-1 -5l-3 -3l4 -1l2 -2l-1 -1l-1 -1l-1 -1l-1 -1l-2 0l3 1l0 2l1 -1M614 240l-31 0l6 37l35 22l39 16l-14 -21l-9 -35M606 260l-23 -20l-42 -16l-23 -34l17 -13l12 -27l-19 6l2 -20M663 148l-1 2l2 -1l-1 2l2 -2l1 1l-3 1l-2 1l-1 -3l-3 -1l-2 -1l0 -2l1 -3l-1 -1l-2 -1l-1 2l0 -3l1 1M663 148l1 1l1 0M625 276l24 18l19 -14M191 196l1 -1M696 589l-10 -1l-4 7l-6 -2l-2 1M696 589l1 7l7 -4l-8 -12M696 589l8 3l8 -5l-3 12l6 9M704 592l-2 9l4 9l-6 -3l-4 -1l-2 5l-2 3l2 1l1 1M704 592l5 7l-3 11l-3 1l-3 -4M308 89l2 -1l-1 -2M308 89l-1 -2l-1 1l0 2M667 159l-6 3l-4 -3l-4 5M667 159l2 0l0 2M667 159l-6 -1l-4 1l-4 -4l-7 1l-5 5l-5 -7l0 -6l6 3l6 -3l5 -3l0 -2l2 -2l-3 1M221 200l-3 5l-3 -1l-3 1l-2 3l1 2l-2 1l1 -3l4 -1l-1 4l5 -1l-4 2l-1 3l2 -2l2 1l-2 2M221 200l1 5l5 -1M337 83l-4 0l-1 -1l-1 -2l-1 2l0 -2M453 78l3 -2l2 5M462 314l3 0l-1 2l-2 2l1 1l1 -3l3 0l2 -3l-4 1l0 -3M218 205l-4 2M218 205l4 0l4 3l3 3M760 297l-10 -2l-11 3l-6 -7l-6 11l-5 -11l11 0l3 -13l3 8l-6 5M512 464l1 0l1 2l1 2l3 -2M513 465l0 -1M565 507l3 -3l-4 0l2 -5l-4 3l-2 2l-2 -3l3 0l-1 3l-2 -1M565 507l-3 -1l-1 -1l1 -3l0 4l1 1l2 0l0 1l-2 -1M565 507l1 2l1 1l2 1l1 1l1 2l0 -2l-1 -3l1 -3l6 -2l3 -10l-2 -9l0 -10l-11 -3l-8 3l4 5l1 8l14 -3l-9 7M565 507l-1 -3l-2 2M565 507l3 0l0 -3M564 504l-2 -2l-1 -1l-2 -2l-2 -2l-1 4M467 316l0 2M467 316l4 0l-1 3l1 3l-3 2l-1 -1M467 316l3 3l3 -1l5 1l-3 2M467 316l-2 -2M298 283l-1 2l3 0l-2 1M473 429l-2 -2l4 1l3 1l-1 3l-3 0l0 1l3 -1l-2 2l4 -1l4 0l3 0l3 5l-3 1l-1 -3l-3 0l1 3l0 1l-2 -1l1 -3l1 -3l-2 2l-3 1l-1 -1l2 -2l-2 -1l-2 -2l-2 -1l2 -1l-2 -3l3 -1l3 -2l1 -2l1 2l2 2l-3 1l-4 1l2 3l7 0l-5 -4M615 115l1 0l-3 2l-4 -1l2 0l-2 -1l-2 -1l-3 1l2 -2l1 1M749 273l5 1l-3 3M267 112l-5 0l-3 6l-3 -4l-2 -2l-1 -2l2 -1l2 0l2 0l-2 -1l0 1l-1 0l-1 0l1 2M272 109l1 -3l-1 -3l0 -2l-1 0l0 2l1 0l2 -1l-2 -1l2 -1l2 1l-1 -1l-1 0l0 2l2 -1l0 -2l-1 1M356 305l0 -6l-6 1M356 305l0 3l3 3M356 305l6 0l1 -4l2 2l2 4l2 2l1 -1l-1 -1l2 0l-1 1M356 299l5 -6l6 -3l7 4l3 -6l-1 -7M257 112l-1 2l-3 0l-3 3l5 1l1 -4l6 -2l-1 -4l-1 -2l3 0l1 2l-2 4l-5 0M716 200l0 1M239 231l-2 -2M492 346l-4 2l-3 0l-1 -1M492 346l0 -6l6 3l3 -5l12 -7l-15 1l-7 4l10 2l3 6l2 6l-10 -2l2 -5M492 346l4 2l-5 2l-2 3l-1 1l-2 0l3 -1l-3 -1l2 -2l0 -2l-1 -2l-1 -2l4 -1l-5 -1l-3 1l0 -1M492 340l-2 3l-3 3M492 340l9 -2M632 125l1 1l1 1M770 357l6 -1l2 -5M770 357l7 4l-1 -5l4 3l2 -5l3 -1M596 108l-3 3l0 2M596 108l1 -3l1 1M596 112l2 -3M596 112l-3 -1l1 -4l1 -2l-3 1l0 -2l1 0l-1 -1M709 192l1 1M640 571l4 -1l1 -6l-3 4l-3 2l1 1l2 1l2 -2l5 -3M640 571l2 -3l-2 -2M642 568l2 2l-1 3l3 -2l-1 3l3 -1l-2 -2l-2 -1M171 176l-3 1l-1 -1l3 -1l1 -2l-1 -3l5 0l0 4l-4 2l-1 -1l-2 0l-1 1l-1 -1l2 0l-2 0l0 0M775 517l3 2l-1 1l-2 1l2 1M775 517l2 -1l2 0l0 -2l1 -1l-4 -1l1 4l1 1l1 -1M775 517l0 4l0 3l1 1M696 606l1 -10M696 606l6 -5l7 -2l10 -8l10 -3l5 8l3 4l2 -2M479 433l2 2l-2 2l3 -1l-2 2M687 609l1 -2l-3 1l2 1M688 610l2 0l-1 1M483 408l1 1l-1 0l0 -1l1 -1l3 1M484 409l-2 2l1 -2M745 242l-1 -2l-3 1l-1 -2l-1 -2l-1 -2l-4 3l3 5M745 242l0 1l-2 2l-1 -2l3 -1M745 243l1 1l-3 1l4 0l-3 2l-5 0l-3 0M745 243l-3 0l-1 -2M399 76l-6 1M399 76l-3 -4l0 -3l0 -1M399 76l-1 -4l-2 -3M764 557l-1 -3M234 122l2 0l-1 2M774 315l-1 -3l-1 -4M416 297l-1 2M416 297l3 0M590 109l-2 -1M590 109l3 2M692 333l8 18l-29 5l-26 6l6 -24M671 356l35 21l-6 -26M743 245l-4 2l3 -4M743 245l1 2l2 2l2 -1l1 1l-2 2l3 -1l-2 3l3 0l-1 -1M325 200l-20 -13M325 200l-25 17M325 200l14 -36l18 -21l12 15l3 36M619 546l-1 -5M373 75l1 4l4 -1l-6 4l2 8M457 209l19 -13l-29 -5M457 209l27 7l34 -26M772 298l-2 -2l1 -1l-4 0l3 -1l1 1l0 1l-1 0M772 298l-4 -1M772 298l-2 2l3 1M772 298l-1 -2M772 298l0 1M722 291l-16 -9l16 -2M486 433l-1 -4l-2 4M486 433l7 1l-1 4l-4 3l1 -3l4 -4l3 3l-4 1M427 69l-1 3l3 -1l0 4l2 3M427 69l-1 -2l-1 0l-2 0l-1 0l1 1l-2 -1l1 0M426 72l-1 -3l-4 0l-1 -2l-1 2l1 4l1 -4l0 -2l-1 0l-2 0l-1 0M426 72l-3 1l-2 -4M426 72l-1 3l-5 -2l3 0l2 -4l0 -2l-2 1l0 -1M426 72l3 3l-2 6M792 393l-2 -1l2 2l-3 0M447 69l2 4l2 -3M449 73l0 4l-3 -4l3 0M508 75l0 2l1 4l3 1l-3 5M508 75l1 0l-1 2l2 1l-1 3l3 -3l0 4l2 -3l-2 -1l-2 0l1 -3l-2 0M508 77l3 -2l1 1l-2 2M277 98l2 0l-1 3l-2 -2l1 -1l1 3l-2 0l0 2l-2 -1M370 77l2 5l-6 -2l-3 -4l-3 3l-2 -2l-3 5l2 4l1 -4l0 -5l-2 -1l-2 1l-3 -1l0 -1M385 289l4 -3l3 -8l9 -6l8 4l-3 -14l9 -11M481 435l1 1M535 177l-7 -21M535 177l26 -3l4 -18M775 521l-2 3l2 3M296 91l-2 1M296 91l1 2M691 186l4 1l5 2l0 3M691 186l1 5l3 -4M692 191l-4 4M694 176l-1 -1M674 563l2 -10M509 390l-6 5l6 1l6 9l7 8l13 -1l-4 -16l-9 17M509 390l0 6M746 249l-5 1l6 1l-4 2M746 249l1 2l1 2M735 232l-4 0l-2 4l5 2l0 -4l-3 -2l2 -4M731 232l3 -2M269 260l2 0l-2 2M534 350l19 1M534 350l-8 -10l3 -12M530 469l0 4l-1 2l-2 2l1 -4l-3 3l2 1l1 1l1 1l2 -2l-1 -4l3 -1l-2 5l-3 1l1 -3M530 469l-3 -2l-3 3l-1 4l1 1l1 1M530 469l3 3l3 2l-5 3l-1 3l-1 -1M378 298l-4 -4l0 5l3 3l-2 2l3 -1M378 298l-4 1l-1 3l-5 -1l-3 -5M767 547l1 0M375 304l-2 0l-1 3l-1 -2l0 2l1 0l2 -1l1 0l1 -1l-1 -1l-2 -2M375 304l-1 2l-1 -2M375 304l0 2M175 183l-1 -1l-1 -1l1 -1l1 0l3 2M175 183l0 -3l-1 2M666 150l-1 3l2 -1l2 2l-2 0l0 -2l1 -1l-3 2l2 1l1 3l1 -3l1 3l2 -2M666 150l2 1l1 1l-2 0l3 1l1 1M665 153l-4 -1l1 -2M363 301l5 0l3 4M425 295l3 3l0 3l1 0l1 -2l1 3l-2 -1M425 295l0 3l0 2M254 240l6 -3l-3 5l-3 -2M650 535l-10 8l-9 0M650 535l7 14M535 82l1 0M512 76l0 2l1 -2l-1 0M653 155l-2 -5l4 -3l-2 -2l2 0l2 -2l-1 -1l-3 1M653 155l5 0l-1 4M368 301l0 3M368 301l4 -4l2 2M368 301l-3 2l-3 2M303 290l1 1M303 290l-1 0l-1 -1M623 505l-10 4l4 10M394 296l-2 -5l-3 -5l-5 -4l4 -10l13 0l-6 -8l11 -2l-5 10l-2 10l-7 -4l2 7l-2 6l7 -2l6 3M394 296l2 1l4 -2l1 3l1 1M792 442l-3 -2l3 1l0 -2l-3 -2l3 1M792 442l-3 0l3 2l0 1M792 442l0 -1M792 442l0 2l-4 1M484 414l2 3M203 145l-3 0M203 145l-1 3M203 145l2 -1M709 215l3 10l-6 4l4 6l-11 10l11 1l0 -11M714 526l17 8M714 526l15 -4M714 526l-6 -27M714 526l12 -22l-7 -15l-7 -18l-21 -10l-2 21M714 526l-25 -18M714 526l7 16l12 8M209 203l6 1M209 203l-3 2l1 -4l-4 1l-1 -3l-1 2l-1 -1M209 203l0 2l3 0M433 67l-2 0l0 2l-1 -2l-1 1l0 -1l-2 0l-1 0l-1 2M433 69l0 3l2 -3l2 0l-1 4l3 -4l2 0l-2 4l0 -4M433 69l-2 -2l-1 0l-1 0M185 187l-2 -1l-1 -1l4 -2l2 2l-5 1l-2 1l1 -2M185 187l-2 2l1 1M188 185l2 -5l8 0l7 4M188 185l6 1l4 -6M262 252l0 3l1 1l1 0l0 2l1 1M349 322l-3 -1l2 -1l-3 -3l-2 -3l-2 4l-1 4l2 -2l2 1l1 2M351 321l-1 -1l-2 0M192 156l3 -4M626 557l-1 1M626 557l3 1l0 -4l-4 0M626 557l3 -3M183 189l-1 0l-1 -1l0 -1l-1 -1M220 129l-1 1M220 129l1 -1M220 129l2 1M543 84l-1 -1M759 391l12 12l-4 6l-11 -5l3 -13l-13 5l3 -10M756 404l15 -1l6 4M756 404l-10 -8M756 404l-10 15l9 17M272 103l-1 2l-2 1l0 -3l0 -1l-1 1l1 0l-2 3l-1 -3l-1 1l-1 0l-1 2l-1 0M273 106l3 1l0 -4l2 -2M273 106l3 -3M273 106l-2 -1l-2 -2l2 0l0 2M273 106l-4 0M374 79l-2 3M487 132l18 -16M487 132l4 21M487 132l-1 -14l-16 7M549 405l-14 7M549 405l33 -7l1 -20M549 405l-18 -9M224 164l-9 0l-1 -8M592 104l2 0l-2 2M355 110l-6 -6l3 -7M309 96l4 -3M309 96l4 4l-3 10l12 -9l-9 -1M212 134l2 -1M483 309l-10 -6l-7 0l3 4M461 70l-2 0l-2 0M461 70l3 1l2 0l0 -2M707 429l12 -14M707 429l8 18l-24 14M730 561l8 -3l8 -3l0 5l-6 6l7 5M730 561l10 5l5 9M335 316l0 1l1 1l2 -2l-3 0l-1 0l1 1l3 -1l-1 3l2 -2l4 -3M745 493l6 -12l-16 5l4 -13M735 486l-16 3M735 486l-9 18M735 486l-23 -15l3 -24l16 -6l2 19l-21 11M749 341l-6 16l13 -3l-7 -13l6 -8l8 7M254 112l-2 -2l-1 2l-2 0l-1 1M602 167l9 -13l9 -8l11 -2l4 -6l-3 -2l-5 -2M613 548l2 1M613 548l-1 -2l0 1M367 290l10 -2l-9 -4M417 298l1 1l-2 0M494 352l2 -4l8 -4M494 352l1 4l-5 1l-3 0l1 -3l-1 1l0 2l1 1l0 1l0 2l1 1l1 -1l3 -1l2 2M494 352l-4 3l-1 -2M494 352l7 1l5 3l-7 4l-4 -4l-5 -1l-2 -1M495 356l-2 4l-3 -3l-2 1l3 1l-1 2l-2 -2l3 0l-1 -2l0 -2l-3 2M495 356l6 -3l5 -3M547 89l2 3l0 3l5 -3l5 2M626 141l-5 -4M626 141l9 -3l1 4l-5 2l5 4l-11 4l-14 2l6 11l12 -7l7 -4l10 2l5 -6l6 1M602 144l9 10M339 164l30 -6M751 253l1 1l-2 2l-4 3M751 253l-2 1M327 306l1 2l4 0M327 306l-1 3l2 -1l2 -4M229 123l-1 2M229 123l1 0l2 1l2 3M760 566l-1 2l-1 1M714 198l-3 -2l0 -2M711 196l1 -1M711 196l2 0M345 77l1 -1l2 2l0 -2M345 77l-1 0l1 1l0 -1M345 78l1 -2M175 166l-2 -1l0 3M393 72l-1 -1l-2 -1M785 345l1 1M342 79l-2 -1l0 2M342 79l-1 -2M211 212l2 -1l-2 2l3 -1l-2 2M213 211l-3 1l-1 -1l-1 -1l2 -2l-3 1l1 1M213 211l1 1l1 1M213 211l-2 -1M489 388l2 -2M706 610l0 4l-3 -3M364 74l-2 1l1 1l3 -1l-2 -1l-1 2l3 1M232 214l9 -6l5 4l1 8l-1 5M557 497l-2 -1l-3 0l-1 1l-2 -2l2 -2l-3 1l1 -3l-2 2l-1 -2l0 1M594 107l3 -2l1 2M645 362l12 21l14 24M645 362l-25 -31l-24 8M663 589l1 1M663 589l0 -4l-2 -1l-3 2l2 1l1 -3l-2 -2l-3 1l1 -3l2 2l-1 4l-1 -1M281 264l3 2M281 264l-1 -2l4 -4M280 262l-4 2l-2 -2l-2 -1l-1 -1M567 472l-4 8l15 5l13 0l19 -4l3 16l-13 -4l10 -12M572 94l-1 0M572 94l1 1l1 0l-1 1l-1 1M572 94l1 2l0 1M258 248l1 2M717 634l2 0l-1 1l-1 -1M585 514l-4 1l1 4l-2 -2l-1 3l-1 -1l2 -2l1 -2l-3 -6l-4 3l-1 -3l-2 -3l-3 1l-2 2l-1 -1M789 406l0 -2M789 406l0 3l1 2l3 0M381 304l-2 0M488 391l0 1M547 85l1 0M746 330l9 3l12 2M267 230l-1 8l-6 3M688 171l-1 -2l-3 1l1 -3l-2 -1l-1 -2l-2 1l3 1l0 -1M688 171l0 -1M688 171l-2 0l-3 0l0 -3l-4 2l-7 2l-4 -3l4 -5l1 -4l3 -2l-1 0l-3 -1l2 0M686 171l1 -2M686 171l-2 -1l-1 -2l2 -1M446 88l11 -1l-2 6M589 462l-11 13M589 462l15 3l15 -18l-22 -2l-8 17l4 12M589 462l-22 -10M758 282l3 -1l4 0l1 2l0 1l-3 1l4 1l-1 -2M758 282l-5 -1l2 4l3 -3M782 488l3 3l0 1l-1 2M503 94l-7 -5M486 118l-6 -10l3 -12l-12 -5M576 96l-2 -1M576 96l-3 0l0 -1M576 96l1 0M291 267l-2 4l-4 -2M291 267l3 -5l-2 -5M350 320l2 0M350 320l2 -3l-3 -1l2 -1l4 -1M350 320l-1 -4l-4 1l-1 4l2 0M470 326l1 1M470 326l3 0M470 326l3 -2M470 326l-1 -1l2 -3M497 372l-2 -1M759 568l-2 1l-3 2l2 3l1 -2l0 -3l1 2M732 609l-5 -3l4 5l-1 3l2 2M732 609l-1 2l2 3l1 -1l1 -1M545 482l-4 3M545 482l-2 4l2 3l4 -1l0 3l4 -2l-2 4l1 3l1 3M545 482l-2 -6l-4 1l-3 -3M385 302l1 0M554 88l2 0M459 315l-1 -1l-1 -1M181 179l1 -3l4 -3M549 491l-3 0l-1 -2M549 491l2 2l3 1l-2 2M669 154l1 -1l-1 -1M201 205l3 -1l-1 -2l-2 -1l-2 1l-1 0l-1 -1l-1 -1l0 -1l-1 0l1 1M201 205l2 -3M204 204l2 1l-3 1l1 -2M502 76l1 -2M746 555l2 -6l6 -1l-1 -8l6 -6M357 86l-4 0l2 -4l-2 -4l1 -1M357 86l5 -2l-2 -5M731 571l9 -5l9 2M475 430l0 -2l-3 -2M527 265l6 -22l8 -19M334 314l-2 0l1 -2l3 0M793 430l0 -2M793 430l0 1l-4 -1l0 3l3 1l-3 1l0 -2M790 418l0 -2l-5 -1M790 418l0 3M750 256l1 2l-3 4l-4 0M303 245l-4 12l7 -4M410 67l2 0M670 177l-10 -3l1 -6l0 -6l0 -4l-3 -3l3 -3M670 177l-2 -8l-7 -1l-10 2l-10 -9M670 177l2 -5l4 4l3 -6l0 -2l-2 0l-4 1l-1 3M670 177l6 -1l3 3M660 174l-9 -4M460 316l1 1l1 1M478 319l0 4l2 2l-4 2l0 -2l2 -2l3 -1l-1 3l-3 4l1 2l2 2M478 319l3 3l1 6l-4 3M790 390l2 0M769 539l2 1M788 358l0 2M766 329l3 -3l3 -3l4 -2l1 2l2 1l1 -1M351 76l-1 2M351 76l2 2l3 -2l1 -1l3 1l-2 1l-5 1M299 278l-3 -2l-2 -2l-3 2M299 278l7 -3l-6 -3l-6 2l-5 1l-1 -1l-2 -2l3 -1l-1 3l4 -2l-3 3M625 128l-4 1M625 128l0 3M629 158l-4 -6M266 238l8 -1M762 562l-2 0l1 3M762 562l1 -2M762 562l-1 1M676 593l-1 -4M676 593l5 -4M676 593l-1 5M651 576l0 4l-1 -1M651 576l2 -2l-2 -4M648 573l5 1l2 -1l0 3l4 -1M712 225l-9 -3M471 69l1 0M471 69l-1 2l0 -2M478 419l-1 1l-1 1l-1 1M597 515l-7 -3l2 -8l-7 6l-4 5l-5 -1l2 -5M597 515l5 4l3 -13l-8 9l1 -6l-8 3M598 509l7 -3l8 -9l0 12l-4 9l-4 -12l-13 -2l-9 -1l7 -9l-10 0M598 509l-6 -5l8 -11l-9 -8l-1 9l2 10M781 369l3 -4M789 367l-1 1l1 1l0 -2l0 -1M789 369l1 1M330 85l3 -2l1 -2l1 -2l1 2l-3 2l-2 5l-3 1l-2 -4l0 -2l-1 -1l1 -1l0 2l1 -2l-1 0M383 303l-1 0M403 296l-2 2M403 296l0 3l2 0l-2 -3l-3 -1l-2 3l0 2l-2 0l-1 0M403 296l2 0l0 3l1 0l-1 -3l3 0l-2 3l2 0l1 0M177 176l5 0l3 3l1 4l4 -3l-5 -1M321 296l4 -5l7 0M320 292l5 -1l1 6M518 83l0 -4l2 1l1 -2l2 1l1 -1M518 83l2 -3l3 -1l2 0l1 0l-2 2l-1 -2M505 455l-2 2l1 1l2 1M505 455l1 -5M505 455l4 -3M505 455l-2 -2l-1 -4M672 157l-2 0l-2 0l1 2l3 -2l1 3l2 1l1 -3l1 1l-2 2l-3 3M501 454l0 -2l-2 -2l-2 -1l-2 -2l-3 1l3 1l-2 0l-1 -1l2 -3l-3 2l1 -3M501 454l2 -1l-2 -1M411 73l3 0l-5 2l2 -2M707 190l1 1M601 531l0 3M729 588l-6 -7M572 515l-1 -3l2 -3l-3 0l-3 1l1 -3l2 2l-1 2l2 1l-1 0M572 515l-1 -1M572 515l2 -3l-3 0M572 515l2 1l0 -4l2 2l2 1l0 4l-2 -1l2 -3l3 0M204 207l1 1l1 1l1 0l1 -2l2 1l-1 -3l-1 2l-2 2l1 -3l1 1M204 207l3 -1l-1 -1l-2 2l-1 -1l-1 -1M206 205l3 0l-2 1l-2 2M527 443l19 -6l-3 12M496 348l5 5l-2 7l-2 6M786 391l-6 1l4 3M657 580l-2 -4l-2 -2M757 569l-4 -2M194 186l0 4l4 0M194 186l-4 -6M194 186l-3 3l3 1M605 506l-5 -13l-10 1l-12 -9M605 506l8 3M718 619l-2 4M718 619l5 3l2 4l1 -2l1 -1l1 -2l1 -1l1 -1l1 -2l-1 -3l-2 2l2 3l-4 -1l-3 -5l5 3l-2 2l3 2M213 176l2 -12M761 507l5 -8l-10 -2M763 276l-3 1M763 276l-2 3l2 -2l0 -1l-1 -1l-3 -1M763 277l1 2l-3 0M333 104l-8 3l-15 3M636 148l6 -5l0 8l9 -1l2 -5M636 148l0 -6l6 1l3 -4l-2 -3l2 1l2 -2M325 291l1 -9l8 -6l-1 8l-8 7l-4 -3M329 263l5 13l-12 -1l-4 8l-4 -2l-5 0l-3 -6l-5 5M358 77l-1 -2M358 82l4 2l4 -4M311 86l-1 2l2 0l-1 -2M312 86l0 2l1 -3l1 2l2 -1l0 -2l-2 1l0 2l0 2l-2 -1l0 3M765 554l0 2M448 301l1 2M491 447l-1 -1l-1 -1M491 447l1 1M389 286l5 -1l5 -3l10 -6l-4 7l-6 -1l0 7l6 -6l7 -1l-3 -6M394 285l5 4M756 575l-4 -2l4 1l0 1l-1 2l-2 0l-1 -4M756 575l-3 2l1 1l1 -1M738 558l2 8l0 9l-5 2M454 304l3 1l5 0l1 4l-5 0l-1 -4M777 499l3 -1M777 499l2 4l2 -2M777 499l1 -3M748 248l0 -1l-1 -2l-1 -1M486 344l-3 1l0 1l3 -2l-1 -2l-2 3l-1 -2M436 73l-3 -1l-4 3l-4 0l-2 -2M436 73l3 0M513 76l1 0l-2 2M642 132l-1 -1M642 132l1 1M616 551l1 1l2 -1l0 2l1 1M412 282l11 1l-5 4l-6 -5M740 239l-6 -1l5 -1M497 449l-1 2l1 1M499 450l-3 1l-1 -2l0 1l-2 -1M326 309l1 1l3 -1l-2 2l-1 -1l1 -2l2 1M466 303l-4 2l-4 4M683 168l0 -2l1 0M683 168l-4 0l1 -3l-3 1l-2 -2l2 4M482 328l-2 -3l-4 0M482 328l2 3M401 68l2 1l-1 -1M403 69l1 -1M403 69l2 -1M311 266l-6 4l0 -9l-11 1l6 4l0 6M753 577l0 3l1 -2M779 330l-4 -2l2 -2l2 -2l1 0M779 330l2 -1M779 330l-1 -2l-1 -2l4 0M559 114l12 -3M223 219l1 1l3 0M223 219l0 -2l-3 0l-2 -1l-1 -2M258 107l1 0l0 2l-1 -2l-1 1l-1 1M259 109l3 3l3 4M175 180l-2 1l0 -1l-1 0M493 360l6 0M493 360l-2 -1M493 360l-1 3l-2 -2l-2 0M484 441l-1 -2l3 0l-2 2l1 1l3 -1l-2 -2l-1 3l1 1l2 -2M484 441l-1 -1M340 312l-1 5l-1 3l1 1l1 1l1 0l2 0l1 -1M475 434l-1 -1l-1 -1M475 434l2 1M675 164l-2 5l-5 0M675 164l3 -2l1 -1M675 164l0 -3l3 1M263 106l0 -1M335 79l-2 0M335 79l1 0l1 -1l2 0l-1 2l-1 -2M649 294l-25 5l-4 32M432 302l-1 0M520 465l1 -3l-3 -3M520 465l4 -1l-3 -2l-5 -1l-1 -4l-1 -5M185 155l-1 0M185 155l1 -1l1 1l0 -2l-1 1M251 111l0 1M710 628l-2 -1l1 -4M305 270l1 5M305 270l-5 -4M182 159l-1 -1M182 159l1 2M711 625l-3 2l-1 -1l-2 -2M243 115l1 0l1 0l1 -2M684 607l-2 -2M684 607l1 1M684 607l-2 -3l3 -1M749 584l2 0M476 424l0 2l-3 -1M487 398l3 1M246 239l0 -2l4 -1M246 237l-1 -4M789 437l0 -2M790 416l3 1l0 2M790 416l3 0M790 416l-3 -4l2 -3M790 416l0 -3l0 -2l-3 1l3 1M585 525l-1 -1M585 525l2 1M510 376l-1 -6l2 -6M510 376l-9 1M341 318l-2 3M341 318l-3 2l-1 -1l-1 -1M341 318l4 -1l-3 3l-1 -2l-2 -1l-1 -1M611 116l2 1M304 88l-1 0l-1 1M304 88l2 0M294 262l5 -5l6 4M782 354l-6 2l-5 -5l-1 -6l3 -2M725 217l3 -2l-4 0M725 217l3 0l1 1M227 125l1 -1M579 99l2 -1M335 87l-2 -4M396 297l2 1M679 603l3 1l-1 0M323 86l1 -2M323 86l3 -1M618 120l2 1l2 -2M476 426l-1 2M314 300l1 -2M713 621l-4 -4l3 -3M700 189l2 -3M650 138l-2 0l2 3l1 -2l-1 -1M651 139l1 0l-2 2l-3 -1l-2 -1l0 -2l3 -1l1 1M294 274l-2 -2l-3 -1M351 315l2 -5l-4 0M642 143l6 5l3 2M449 280l3 8M417 75l-3 -2M417 75l3 -2M706 614l3 3M665 581l1 4l-5 -1M484 340l1 2M360 308l3 2l2 1M586 100l1 1M586 101l2 0l-1 2l2 -1l0 2M568 93l-1 2l0 -2l1 0M780 383l-1 -5M780 383l0 4l0 5l-4 -2l5 6l3 6l3 -2M316 84l1 0l-1 2M312 88l2 -1M780 392l1 4l-1 7M268 175l-17 9M330 313l0 -2l1 3l2 -2M330 311l-1 1M578 515l-3 2l1 -3l-2 2l1 1l1 1M578 515l2 2M490 361l-1 3l0 -2M239 235l0 1M658 146l0 -3l-1 0M658 146l1 -2l-1 -1l-3 2M658 146l2 -1l-1 -1M658 146l3 0l-1 -1M511 102l7 -5M238 118l1 -1M377 288l7 -6M774 530l-2 -3l3 1M772 527l1 -3l2 0M636 133l2 -1M269 103l-3 0l2 0M561 174l22 -16M561 174l-14 -24M492 72l-1 0M492 72l2 0l1 0M173 180l1 -2M173 180l1 0M554 494l1 2M518 90l6 -5l0 -4l2 1l-2 3M278 269l-1 0M279 268l0 -2M725 620l-4 -4l5 2l2 3l-3 -1l2 3l-4 -1l-2 -6M725 620l1 -2M725 620l-2 2l3 2M196 199l-2 0l1 0M621 124l-1 -3M648 138l-3 1M231 230l1 0M489 365l0 -1l3 -1l-3 2M790 375l-1 0M670 157l-1 2l4 1M524 464l3 3M679 168l4 -2M679 168l-2 -2M176 165l-1 -2M663 585l-2 3M663 585l3 0l2 4M643 573l-1 -1M643 573l2 1l1 1M224 224l0 -1M538 97l-4 -3M220 191l-4 4M488 71l2 1l0 2M438 95l5 14l-14 -2l11 16l10 14M438 95l-9 12l-9 12l20 4M438 95l-8 -7M521 462l0 -4M552 498l-1 -1M787 360l1 1M787 360l2 3M420 119l-11 15M420 119l-27 8M485 429l-2 -5M595 105l-1 -1l-1 0M595 105l2 0M196 146l-1 0M245 114l-1 1M777 326l-5 -3l5 0l2 -1M777 326l0 -3M353 310l0 -3l3 1l-3 2M516 77l-2 2l0 -3l2 1M777 516l1 3l0 -2M617 552l2 1M721 555l0 -13M497 383l7 1M349 104l-9 -3M181 188l2 0l-1 1M777 510l-1 2M781 396l5 2M300 132l13 -5M300 132l-19 1M549 92l-3 1M470 71l-2 0l0 3M766 499l3 -6M710 246l7 6M553 96l1 -4M188 193l-1 0M561 505l-1 -1M322 101l-2 -7M322 101l3 6M489 444l-2 0M780 337l3 -2l-1 -2M467 69l-1 2l2 0l-1 -2M249 112l1 0M793 403l0 -1M793 403l0 2l0 2M486 352l0 -1M486 352l0 2l1 1M778 316l0 1M496 451l-1 -1M272 264l1 1M363 73l1 0M741 594l-1 2" fill="none" stroke="#241d10" stroke-width="0.72"/><path d="M163.7 173.1 167.5 169.5 171.3 166.1 175.1 162.7 179 159.3 182.9 156.1 186.9 152.8 190.9 149.6 195 146.5 199 143.4 203.2 140.4 207.3 137.5 211.5 134.5 215.8 131.7 220 128.9 224.3 126.2 228.7 123.5 233 120.9 237.5 118.3 241.9 115.8 246.4 113.4 250.9 111 255.4 108.7 259.9 106.4 264.5 104.2 269.1 102.1 273.8 100 278.4 98 283.1 96 287.8 94.1 292.6 92.3 297.3 90.5 302.1 88.8 306.9 87.2 311.7 85.6 316.6 84.1 321.5 82.6 326.3 81.2 331.2 79.9 336.1 78.6 341.1 77.4 346 76.3 351 75.2 356 74.2 361 73.2 366 72.4 371 71.5 376 70.8 381 70.1 386.1 69.5 391.1 68.9 396.2 68.5 401.3 68 406.3 67.7 411.4 67.4 416.5 67.2 421.6 67 426.7 67 431.8 66.9 436.9 67 442 67.1 447.1 67.3 452.2 67.5 457.3 67.9 462.3 68.3 467.4 68.7 472.5 69.2 477.6 69.8 482.7 70.5 487.7 71.2 492.8 72 497.8 72.9 502.9 73.8 507.9 74.9 512.9 75.9 518 77.1 522.9 78.3 527.9 79.6 532.9 80.9 537.8 82.4 542.8 83.8 547.7 85.4 552.6 87 557.5 88.7 562.3 90.5 567.2 92.4 572 94.3 576.8 96.2 581.6 98.3 586.3 100.4 591 102.6 595.7 104.8 600.4 107.2 605 109.6 609.6 112 614.2 114.6 618.7 117.2 623.3 119.8 627.7 122.6 632.2 125.4 636.6 128.2 640.9 131.2 645.3 134.2 649.6 137.3 653.8 140.4 658 143.6 662.2 146.9 666.3 150.2 670.4 153.7 674.4 157.1 678.4 160.7 682.3 164.3 686.2 167.9 690.1 171.7 693.9 175.5 697.6 179.3 701.3 183.3 704.9 187.2 708.5 191.3 712 195.4 715.4 199.6 718.8 203.8 722.2 208.1 725.4 212.5 728.6 216.9 731.8 221.3 734.9 225.9 737.9 230.5 740.8 235.1 743.7 239.8 746.5 244.6 749.2 249.4 751.9 254.2 754.5 259.1 757 264.1 759.4 269.1 761.8 274.2 764.1 279.3 766.3 284.4 768.4 289.7 770.5 294.9 772.4 300.2 774.3 305.6 776.1 310.9 777.8 316.4 779.4 321.8 781 327.3 782.4 332.9 783.8 338.5 785.1 344.1 786.2 349.8 787.3 355.4 788.3 361.2 789.2 366.9 790 372.7 790.7 378.5 791.3 384.3 791.8 390.2 792.2 396.1 792.5 402 792.7 407.9 792.9 413.8 792.9 419.8 792.8 425.8 792.6 431.7 792.3 437.7 791.9 443.8 791.4 449.8 790.7 455.8 790 461.8 789.2 467.9 788.2 473.9 787.2 479.9 786.1 486 784.8 492 783.4 498 782 504 780.4 510 778.7 516 776.9 522 775 527.9 773 533.9 770.8 539.8 768.6 545.7 766.2 551.5 763.8 557.4 761.2 563.2 758.6 569 755.8 574.7 752.9 580.4 749.9 586.1 746.8 591.8 743.6 597.4 740.3 602.9 736.9 608.4 733.4 613.9 729.7 619.3 726 624.6 722.2 629.9 718.3 635.2 469.5 429.5 470.4 428.5 471.2 427.4 472.1 426.4 472.9 425.3 473.7 424.3 474.5 423.2 475.3 422.1 476 421 476.8 419.9 477.5 418.8 478.2 417.7 478.9 416.5 479.5 415.4 480.2 414.2 480.8 413.1 481.4 411.9 482 410.7 482.5 409.5 483.1 408.3 483.6 407.1 484.1 405.9 484.6 404.7 485 403.5 485.5 402.2 485.9 401 486.3 399.7 486.7 398.5 487 397.3 487.3 396 487.7 394.7 488 393.5 488.2 392.2 488.5 391 488.7 389.7 488.9 388.4 489.1 387.1 489.3 385.9 489.4 384.6 489.5 383.3 489.6 382 489.7 380.8 489.8 379.5 489.8 378.2 489.9 376.9 489.8 375.7 489.8 374.4 489.8 373.1 489.7 371.8 489.6 370.6 489.5 369.3 489.4 368.1 489.2 366.8 489.1 365.5 488.9 364.3 488.7 363.1 488.4 361.8 488.2 360.6 487.9 359.4 487.6 358.1 487.3 356.9 487 355.7 486.6 354.5 486.2 353.3 485.9 352.1 485.4 350.9 485 349.7 484.6 348.6 484.1 347.4 483.6 346.3 483.1 345.1 482.6 344 482 342.8 481.5 341.7 480.9 340.6 480.3 339.5 479.7 338.4 479 337.4 478.4 336.3 477.7 335.2 477 334.2 476.3 333.2 475.6 332.2 474.9 331.1 474.1 330.1 473.3 329.2 472.6 328.2 471.8 327.2 470.9 326.3 470.1 325.4 469.3 324.4 468.4 323.5 467.5 322.6 466.6 321.8 465.7 320.9 464.8 320.1 463.9 319.2 462.9 318.4 462 317.6 461 316.8 460 316 459 315.3 458 314.5 457 313.8 456 313.1 454.9 312.4 453.9 311.7 452.8 311 451.7 310.4 450.6 309.8 449.5 309.2 448.4 308.6 447.3 308 446.2 307.4 445.1 306.9 443.9 306.3 442.8 305.8 441.6 305.3 440.4 304.9 439.3 304.4 438.1 304 436.9 303.5 435.7 303.1 434.5 302.7 433.3 302.4 432.1 302 430.8 301.7 429.6 301.4 428.4 301.1 427.1 300.8 425.9 300.5 424.7 300.3 423.4 300.1 422.2 299.9 420.9 299.7 419.6 299.5 418.4 299.4 417.1 299.2 415.8 299.1 414.6 299 413.3 299 412 298.9 410.8 298.9 409.5 298.9 408.2 298.9 406.9 298.9 405.7 298.9 404.4 299 403.1 299 401.8 299.1 400.6 299.3 399.3 299.4 398 299.5 396.7 299.7 395.5 299.9 394.2 300.1 393 300.3 391.7 300.6 390.4 300.8 389.2 301.1 388 301.4 386.7 301.7 385.5 302 384.2 302.4 383 302.7 381.8 303.1 380.6 303.5 379.4 304 378.2 304.4 377 304.8 375.8 305.3 374.6 305.8 373.4 306.3 372.3 306.8 371.1 307.4 369.9 307.9 368.8 308.5 367.7 309.1 366.5 309.7 365.4 310.3 364.3 311 363.2 311.6 362.1 312.3 361 313 360 313.7 358.9 314.4 357.9 315.1 356.8 315.9 355.8 316.6 354.8 317.4 353.8 318.2 352.8 319 351.8 319.8 350.9 320.6 349.9 321.5 349 322.3 348 323.2 347.1 324.1 346.2 325 345.3 325.9Z" fill="none" stroke="#1d180c" stroke-width="1.3"/></svg><svg class="r" style="left:820px;top:180px;" width="170" height="22" viewBox="0 0 170 22"><path d="M10 4 L4.5 10.5 L10 17 M16 4 L10.5 10.5 L16 17" fill="none" stroke="#5b6478" stroke-width="1.4"/><path d="M50 4 L44.5 10.5 L50 17" fill="none" stroke="#5b6478" stroke-width="1.4"/><path d="M79 4.5 Q78 3.5 79.5 3.8 L89.5 9.8 Q90.6 10.5 89.5 11.2 L79.5 17.2 Q78 17.5 78.5 16 Z" fill="#5b6478"/><path d="M117.5 4 L123 10.5 L117.5 17" fill="none" stroke="#5b6478" stroke-width="1.4"/><path d="M151.5 4 L157 10.5 L151.5 17 M157.5 4 L163 10.5 L157.5 17" fill="none" stroke="#5b6478" stroke-width="1.4"/></svg><div class="r" style="left:814.2px;top:215.4px;width:33px;height:33.3px;background:#ffffff;border:1px solid #cfd1d6;box-sizing:border-box;"></div><div class="t" style="left:818.5px;top:227.5px;font-size:10px;line-height:10px;color:#111827;transform:scaleX(1.0506);transform-origin:center;-webkit-text-stroke:0.3px #111827;">x0.25</div><div class="r" style="left:850.3px;top:215.4px;width:33px;height:33.3px;background:#ffffff;border:1px solid #cfd1d6;box-sizing:border-box;"></div><div class="t" style="left:857.3px;top:227.5px;font-size:10px;line-height:10px;color:#111827;-webkit-text-stroke:0.3px #111827;">x0.5</div><div class="r" style="left:887.4px;top:215.4px;width:33px;height:33.3px;background:#4f46e5;"></div><div class="t" style="left:898.6px;top:227.5px;font-size:10px;line-height:10px;color:#ffffff;-webkit-text-stroke:0.35px #ffffff;">x1</div><div class="r" style="left:924.2px;top:215.4px;width:33px;height:33.3px;background:#ffffff;border:1px solid #cfd1d6;box-sizing:border-box;"></div><div class="t" style="left:935.4px;top:227.5px;font-size:10px;line-height:10px;color:#111827;-webkit-text-stroke:0.3px #111827;">x2</div><div class="r" style="left:960.2px;top:215.4px;width:33px;height:33.3px;background:#ffffff;border:1px solid #cfd1d6;box-sizing:border-box;"></div><div class="t" style="left:971.4px;top:227.5px;font-size:10px;line-height:10px;color:#111827;-webkit-text-stroke:0.3px #111827;">x3</div><div class="t" style="left:892.9px;top:253.6px;font-size:11px;line-height:11px;color:#6b7280;">5/31</div><div class="r" style="left:1290.9px;top:183.2px;width:128.5px;height:31.9px;background:#4f46e5;border-radius:16px;"></div><div class="t" style="left:1310.1px;top:193.1px;font-size:12px;line-height:12px;color:#ffffff;transform:scaleX(1.0529);transform-origin:center;-webkit-text-stroke:0.35px #ffffff;">Perspective view</div><div class="r" style="left:1426.7px;top:182.3px;width:95.3px;height:32.8px;background:transparent;border:1px solid #9b9da3;border-radius:17px;box-sizing:border-box;"></div><div class="t" style="left:1445.3px;top:193.1px;font-size:12px;line-height:12px;color:#6b6e75;transform:scaleX(1.0549);transform-origin:center;-webkit-text-stroke:0.25px #6b6e75;">Ortho view</div><div class="r" style="left:1528.8px;top:183.2px;width:83px;height:31.9px;background:#4f46e5;border-radius:16px;"></div><div class="t" style="left:1554.6px;top:193.1px;font-size:12px;line-height:12px;color:#ffffff;transform:scaleX(1.0208);transform-origin:center;-webkit-text-stroke:0.35px #ffffff;">Reset</div><div class="r" style="left:1528.8px;top:229.3px;width:83px;height:32.3px;background:#4f46e5;border-radius:16px;"></div><div class="t" style="left:1548.5px;top:240.1px;font-size:12px;line-height:12px;color:#ffffff;transform:scaleX(0.9794);transform-origin:center;-webkit-text-stroke:0.35px #ffffff;">Grid ON</div><div class="r" style="left:1405.6px;top:922.1px;width:56.30000000000018px;height:32.5px;background:#5048e5;"></div><div class="t" style="left:1421.1px;top:932.9px;font-size:12px;line-height:12px;color:#ffffff;transform:scaleX(0.8681);transform-origin:center;-webkit-text-stroke:0.25px #ffffff;">TX 1</div><div class="r" style="left:1466.25px;top:922.1px;width:56.65000000000009px;height:32.5px;background:#5048e5;"></div><div class="t" style="left:1481.2px;top:932.9px;font-size:12px;line-height:12px;color:#ffffff;transform:scaleX(0.8434);transform-origin:center;-webkit-text-stroke:0.25px #ffffff;">RX 1</div><div class="r" style="left:1526.9px;top:922.1px;width:86.84999999999991px;height:32.5px;background:#5048e5;"></div><div class="t" style="left:1541.5px;top:932.9px;font-size:12px;line-height:12px;color:#ffffff;transform:scaleX(0.9032);transform-origin:center;-webkit-text-stroke:0.25px #ffffff;">TARGET 1</div><div class="r" style="left:1632px;top:164px;width:288px;height:810px;background:#f1f4f9;"></div><div class="t" style="left:1659.4px;top:201.1px;font-size:19px;line-height:19px;color:#111827;font-weight:bold;transform:scaleX(0.9917);transform-origin:left;">Actions</div><div class="t" style="left:1662.4px;top:256.9px;font-size:10.5px;line-height:10.5px;color:#4338ca;font-weight:bold;transform:scaleX(1.0074);transform-origin:left;">ACTIONS</div><svg class="r" style="left:1661px;top:287px;" width="21" height="22" viewBox="0 0 21 22"><path d="M4 3.5 H12 L17 8.5 V19 H4 Z M12 3.5 V8.5 H17" fill="none" stroke="#4b5563" stroke-width="1.3" stroke-linejoin="round"/><path d="M7.5 13.5 L9.5 15.5 L13.5 11.5" fill="none" stroke="#4b5563" stroke-width="1.3"/></svg><div class="t" style="left:1695.8px;top:292.1px;font-size:11px;line-height:11px;color:#374151;transform:scaleX(1.0923);transform-origin:left;">Check constraints</div><svg class="r" style="left:1662px;top:328px;" width="20" height="20" viewBox="0 0 20 20"><circle cx="10" cy="9.6" r="7.6" fill="none" stroke="#7cba7c" stroke-width="1.2"/><path d="M8 6.5 L13 9.6 L8 12.7 Z" fill="none" stroke="#7cba7c" stroke-width="1.2" stroke-linejoin="round"/></svg><div class="t" style="left:1695.8px;top:332.0px;font-size:11px;line-height:11px;color:#6cae66;transform:scaleX(1.0761);transform-origin:left;">Save and run simulation</div><div class="r" style="left:1649.3px;top:359.2px;width:260px;height:31.1px;background:#e5e8ed;border-radius:6px;"></div><svg class="r" style="left:1663px;top:369px;" width="17" height="17" viewBox="0 0 17 17"><path d="M2.5 2.5 L14.5 14.5 M14.5 2.5 L2.5 14.5" stroke="#b83434" stroke-width="1.4"/></svg><div class="t" style="left:1695.8px;top:372.2px;font-size:11px;line-height:11px;color:#a53030;transform:scaleX(1.0942);transform-origin:left;">Cancel operation</div><div class="r" style="left:1833.5px;top:338.2px;width:32.5px;height:33px;background:#c8392e;border-radius:8px 0 0 8px;box-shadow:0 3px 6px rgba(0,0,0,0.18);"></div><svg class="r" style="left:1840px;top:345px;" width="20" height="20" viewBox="0 0 20 20"><path d="M10 2.8 L11.6 2.9 L12.1 5.1 L13.6 5.8 L15.5 4.6 L16.6 5.8 L15.4 7.7 L16 9.2 L18.2 9.7 V11.3 L16 11.8 L15.4 13.3 L16.6 15.2 L15.5 16.4 L13.6 15.2 L12.1 15.9 L11.6 18.1 H10 L9.5 15.9 L8 15.2 L6.1 16.4 L5 15.2 L6.2 13.3 L5.6 11.8 L3.4 11.3 V9.7 L5.6 9.2 L6.2 7.7 L5 5.8 L6.1 4.6 L8 5.8 L9.5 5.1 Z" fill="#ffffff"/><circle cx="10.8" cy="10.5" r="2.6" fill="#c8392e"/></svg><div class="r" style="left:1632px;top:420px;width:288px;height:1px;background:#e1e5eb;"></div><svg class="r" style="left:1659px;top:447px;" width="17" height="18" viewBox="0 0 17 18"><ellipse cx="8" cy="4" rx="6.3" ry="2.5" fill="#5b6478"/><path d="M1.7 6.5 Q8 10.5 14.3 6.5 V9 Q8 13 1.7 9 Z M1.7 10.5 Q8 14.5 14.3 10.5 V13 Q8 17 1.7 13 Z" fill="#5b6478"/></svg><div class="t" style="left:1682.4px;top:449.5px;font-size:14.5px;line-height:14.5px;color:#111827;-webkit-text-stroke:0.45px #111827;">Simulations no.</div><div class="t" style="left:1658.9px;top:479.7px;font-size:11px;line-height:11px;color:#1f2937;transform:scaleX(0.9791);transform-origin:left;">7 of 100 simulations executed</div><div class="r" style="left:1658.9px;top:500px;width:241.1px;height:3px;background:#c3c6e9;border-radius:1px;"></div><div class="r" style="left:1658.9px;top:500px;width:17.1px;height:3px;background:#4338ca;"></div><svg class="r" style="left:1659px;top:538px;" width="17" height="17" viewBox="0 0 17 17"><rect x="3" y="3" width="11" height="11" rx="1.5" fill="none" stroke="#5b6478" stroke-width="1.4"/><rect x="5.5" y="5.5" width="6" height="6" fill="#5b6478"/><path d="M6 1 V3 M8.5 1 V3 M11 1 V3 M6 14 V16 M8.5 14 V16 M11 14 V16 M1 6 H3 M1 8.5 H3 M1 11 H3 M14 6 H16 M14 8.5 H16 M14 11 H16" stroke="#5b6478" stroke-width="1.1"/></svg><div class="t" style="left:1682.4px;top:539.0px;font-size:14.5px;line-height:14.5px;color:#111827;transform:scaleX(1.0213);transform-origin:left;-webkit-text-stroke:0.45px #111827;">Exported gerbers</div><div class="t" style="left:1658.9px;top:568.7px;font-size:11px;line-height:11px;color:#1f2937;transform:scaleX(1.0102);transform-origin:left;">0 of 0 gerbers exported</div><div class="r" style="left:1658.9px;top:589.6px;width:241.1px;height:3.3px;background:#b9bdc5;border-radius:1px;"></div><div class="r" style="left:234px;top:973px;width:1686px;height:1px;background:#e3e6ea;"></div><div class="r" style="left:234px;top:974px;width:1686px;height:46px;background:#ffffff;"></div><div class="t" style="left:253.8px;top:990.6px;font-size:12px;line-height:12px;color:#4b5563;transform:scaleX(1.0353);transform-origin:left;">IPSMagic v 2.0.7 Copyright EMCGems © 2024 - All rights reserved</div><div class="r" style="left:0px;top:1020px;width:1920px;height:60px;background:#eeeeef;"></div><div class="r" style="left:0px;top:1020px;width:1920px;height:1px;background:#d2d2d4;"></div><svg class="r" style="left:391px;top:1035px;" width="32" height="30" viewBox="0 0 32 30"><defs><linearGradient id="wl" x1="0" y1="0" x2="1" y2="1"><stop offset="0" stop-color="#4cc2ff"/><stop offset="1" stop-color="#0078d4"/></linearGradient></defs><rect x="1" y="0.5" width="14" height="14" fill="url(#wl)"/><rect x="16.5" y="0.5" width="14" height="14" fill="url(#wl)"/><rect x="1" y="16" width="14" height="14" fill="url(#wl)"/><rect x="16.5" y="16" width="14" height="14" fill="url(#wl)"/></svg><div class="r" style="left:439.6px;top:1031px;width:272.8px;height:37.6px;background:#ffffff;border-radius:19px;border:1px solid #dcdcdc;box-sizing:border-box;"></div><svg class="r" style="left:450px;top:1038px;" width="24" height="24" viewBox="0 0 24 24"><circle cx="10" cy="10" r="6.8" fill="none" stroke="#1f1f1f" stroke-width="2.1"/><path d="M15 15 L20.5 20.5" stroke="#1f1f1f" stroke-width="2.3" stroke-linecap="round"/></svg><div class="t" style="left:485.0px;top:1041.6px;font-size:17px;line-height:17px;color:#3b3b3b;transform:scaleX(0.9482);transform-origin:left;">Cerca</div><svg class="r" style="left:726px;top:1035px;" width="34" height="30" viewBox="0 0 34 30"><rect x="8" y="2" width="20" height="17" rx="2" fill="#f4f4f4" stroke="#e0e0e0"/><rect x="2" y="9" width="20" height="18" rx="2" fill="#222"/><rect x="9" y="9" width="13" height="11" fill="#c8c8c8"/></svg><div class="r" style="left:774.8px;top:1026.6px;width:47px;height:47px;background:#f9f9f9;border-radius:5px;border:1px solid #e4e4e4;box-sizing:border-box;"></div><div class="r" style="left:789px;top:1070px;width:16px;height:3px;background:#0b67d0;border-radius:2px;"></div><svg class="r" style="left:782px;top:1033px;" width="34" height="34" viewBox="0 0 34 34"><circle cx="14" cy="16.5" r="12" fill="#e7453b"/><path d="M14 16.5 L3.6 10.5 A12 12 0 0 0 8 26.9 Z" fill="#2fa050"/><path d="M14 16.5 L8 26.9 A12 12 0 0 0 26 16.5 Z" fill="#f5be1d"/><path d="M14 16.5 L26 16.5 A12 12 0 0 0 14 4.5 L3.6 10.5 Z" fill="#e7453b" opacity="0"/><circle cx="14" cy="16.5" r="5.6" fill="#fff"/><circle cx="14" cy="16.5" r="4.4" fill="#3c7bea"/><circle cx="25" cy="9" r="8" fill="#808a97"/><text x="21.4" y="13" font-family="Liberation Sans" font-weight="bold" font-size="11" fill="#fff">R</text></svg><svg class="r" style="left:836px;top:1033px;" width="34" height="34" viewBox="0 0 34 34"><circle cx="17" cy="17" r="15" fill="#c0251b"/><path d="M5 14 Q14 8 22 13 Q15 12 8 19 Z" fill="#f3a21f"/><path d="M9 22 Q18 15 26 20" fill="none" stroke="#2b1a10" stroke-width="3"/><circle cx="24" cy="21" r="6" fill="none" stroke="#fff" stroke-width="1.6"/><circle cx="24" cy="21" r="3" fill="none" stroke="#fff" stroke-width="1.4"/></svg><svg class="r" style="left:891px;top:1033px;" width="34" height="34" viewBox="0 0 34 34"><path d="M2 7 Q2 5 4 5 H12 L14.5 7.5 H30 Q32 7.5 32 9.5 V29 Q32 31 30 31 H4 Q2 31 2 29 Z" fill="#f7c643"/><path d="M2 11 H32 V29 Q32 31 30 31 H4 Q2 31 2 29 Z" fill="#fcd55c"/><rect x="9.5" y="23" width="15" height="8" rx="2" fill="#1a73c9"/></svg><svg class="r" style="left:946px;top:1033px;" width="34" height="34" viewBox="0 0 34 34"><path d="M18 3 L31 30 L5 30 Z" fill="#ffffff" stroke="#eee" stroke-width="0.5"/><path d="M18 3 L31 30 L17 30 Z" fill="#111"/><path d="M5 30 L31 30 L29 31.5 L4 31.5 Z" fill="#555"/></svg><svg class="r" style="left:1001px;top:1033px;" width="34" height="34" viewBox="0 0 34 34"><path d="M2 19 L10 14 L14 17 Z" fill="#4d8fd6"/><path d="M10 14 L20 2 Q23 12 32 29 Q26 24 22 21 Q18 27 14 30 Q14 22 10 14 Z" fill="#e8772e"/><path d="M20 2 Q17 12 14 17 L10 14 Z" fill="#c44a1c"/></svg><svg class="r" style="left:1056px;top:1033px;" width="34" height="34" viewBox="0 0 34 34"><rect x="2.5" y="3" width="29" height="28" rx="5" fill="#1f9aa5"/><circle cx="12" cy="17" r="5.2" fill="none" stroke="#fff" stroke-width="2.2"/><circle cx="22" cy="17" r="5.2" fill="none" stroke="#fff" stroke-width="2.2"/><path d="M9.8 17 H14.2 M19.8 17 H24.2 M22 14.8 V19.2" stroke="#fff" stroke-width="1.5"/></svg><svg class="r" style="left:1111px;top:1033px;" width="34" height="34" viewBox="0 0 34 34"><defs><linearGradient id="rb" x1="0" y1="0" x2="1" y2="1"><stop offset="0" stop-color="#e00"/><stop offset="0.3" stop-color="#ee0"/><stop offset="0.55" stop-color="#2d2"/><stop offset="0.8" stop-color="#0bd"/><stop offset="1" stop-color="#22e"/></linearGradient></defs><rect x="3" y="3" width="30" height="30" fill="url(#rb)"/><path d="M13 9 H21 V14 H27 V22 H21 V27 H13 V22 H8 V14 H13 Z" fill="#eee" stroke="#888" stroke-width="1.5"/></svg><svg class="r" style="left:1166px;top:1033px;" width="34" height="34" viewBox="0 0 34 34"><rect x="2" y="3" width="30" height="29" rx="4.5" fill="#0c0c0c"/><text x="3.2" y="20" font-family="Liberation Sans" font-weight="bold" font-size="6.2" fill="#ddd">CREALITY</text></svg><svg class="r" style="left:1221px;top:1033px;" width="34" height="34" viewBox="0 0 34 34"><path d="M23 2 L31 6 V28 L23 32 L9 19 L5 22 L2 20 V14 L5 12 L9 15 Z M23 10 L15 17 L23 24 Z M5 15 V19 L7 17 Z" fill="#8661c5"/><path d="M23 2 L31 6 V28 L23 32 Z" fill="#b48de8"/></svg><svg class="r" style="left:1276px;top:1033px;" width="34" height="34" viewBox="0 0 34 34"><rect x="2" y="2.5" width="30" height="30" rx="5" fill="#1a3fa8"/><path d="M7 7 H27 L25 10 H9 Z" fill="#c8d6f5"/><path d="M9 12 H25 L28 25 H6 Z" fill="#fff"/><path d="M8.5 22 L26 16 V22.5 Z" fill="#1a3fa8"/></svg><svg class="r" style="left:1331px;top:1033px;" width="34" height="34" viewBox="0 0 34 34"><rect x="2" y="3" width="30" height="30" fill="#1e3a8a"/><rect x="5" y="6" width="18" height="18" fill="#6b7fb8" stroke="#aab6d8" stroke-dasharray="1.5 1.5"/><text x="17" y="31" font-family="Liberation Sans" font-weight="bold" font-size="17" fill="#fff">R</text></svg><svg class="r" style="left:1386px;top:1033px;" width="34" height="34" viewBox="0 0 34 34"><rect x="12" y="10" width="20" height="16" rx="1.5" fill="#fff" stroke="#0f6cbd" stroke-width="1.8"/><path d="M12.5 11 L22 19 L31.5 11" fill="none" stroke="#0f6cbd" stroke-width="1.6"/><path d="M2 7 L18 3.5 V31 L2 27.5 Z" fill="#0f6cbd"/><ellipse cx="9.5" cy="17" rx="3.8" ry="5" fill="none" stroke="#fff" stroke-width="2.2"/></svg><svg class="r" style="left:1512px;top:1041px;" width="22" height="16" viewBox="0 0 22 16"><path d="M4 11 L11 4.5 L18 11" fill="none" stroke="#1f1f1f" stroke-width="1.6"/></svg><svg class="r" style="left:1550px;top:1040px;" width="26" height="22" viewBox="0 0 26 22"><path d="M3 15 Q1 10 6 9 Q7 4 12.5 5 Q16 3 19 7 Q23 8 22 13 L15 15.5 Z" fill="#1a76d2"/><circle cx="18" cy="15.5" r="5.6" fill="#d32f2f" stroke="#eee" stroke-width="1"/><path d="M15.8 13.3 L20.2 17.7 M20.2 13.3 L15.8 17.7" stroke="#fff" stroke-width="1.4"/></svg><svg class="r" style="left:1591px;top:1039px;" width="24" height="22" viewBox="0 0 24 22"><path d="M7 2.5 L12 5.8 L7 9 L2 5.8 Z M17 2.5 L22 5.8 L17 9 L12 5.8 Z M7 9 L12 12.2 L7 15.5 L2 12.2 Z M17 9 L22 12.2 L17 15.5 L12 12.2 Z M7.5 16.5 L12 13.5 L16.5 16.5 L12 19.5 Z" fill="#1f1f1f"/></svg><div class="t" style="left:1640.0px;top:1043.5px;font-size:14px;line-height:14px;color:#1f1f1f;">ITA</div><svg class="r" style="left:1686px;top:1040px;" width="24" height="20" viewBox="0 0 24 20"><path d="M2 7 Q12 -1.5 22 7" fill="none" stroke="#1f1f1f" stroke-width="1.8"/><path d="M5.3 10.3 Q12 4.5 18.7 10.3" fill="none" stroke="#1f1f1f" stroke-width="1.8"/><path d="M8.6 13.5 Q12 10.8 15.4 13.5" fill="none" stroke="#1f1f1f" stroke-width="1.8"/><circle cx="12" cy="16.3" r="1.6" fill="#1f1f1f"/></svg><svg class="r" style="left:1715px;top:1040px;" width="26" height="20" viewBox="0 0 26 20"><path d="M3 7 H6.5 L11 3 V17 L6.5 13 H3 Z" fill="none" stroke="#1f1f1f" stroke-width="1.4" stroke-linejoin="round"/><path d="M14 7 Q16 10 14 13" fill="none" stroke="#1f1f1f" stroke-width="1.4"/><path d="M17 4.5 Q20.5 10 17 15.5 M20 2.5 Q25 10 20 17.5" fill="none" stroke="#9a9a9a" stroke-width="1.3"/></svg><svg class="r" style="left:1745px;top:1038px;" width="26" height="20" viewBox="0 0 26 20"><rect x="2.5" y="6" width="18" height="11" rx="2" fill="none" stroke="#1f1f1f" stroke-width="1.5"/><rect x="21" y="9.3" width="2.3" height="4.5" fill="#1f1f1f"/><path d="M4.5 15 L9 8 H18.5 V15 Z" fill="#1f1f1f"/><path d="M8 1.5 L4.5 8 H8 L5.5 13" fill="none" stroke="#1f1f1f" stroke-width="1.3"/></svg><div class="t" style="left:1830.3px;top:1032.6px;font-size:14px;line-height:14px;color:#1f1f1f;transform:scaleX(1.0104);transform-origin:right;">17:23</div><div class="t" style="left:1796.3px;top:1052.5px;font-size:14px;line-height:14px;color:#1f1f1f;transform:scaleX(1.1082);transform-origin:right;">10/11/2024</div><svg class="r" style="left:1874px;top:1039px;" width="22" height="22" viewBox="0 0 22 22"><path d="M11 2.5 Q5.5 2.5 5.5 8.5 V13 L3.5 16 H18.5 L16.5 13 V8.5 Q16.5 2.5 11 2.5 Z" fill="none" stroke="#1f1f1f" stroke-width="1.4" stroke-linejoin="round"/><path d="M8.5 18 Q11 20.5 13.5 18" fill="none" stroke="#1f1f1f" stroke-width="1.4"/></svg></body></html>
